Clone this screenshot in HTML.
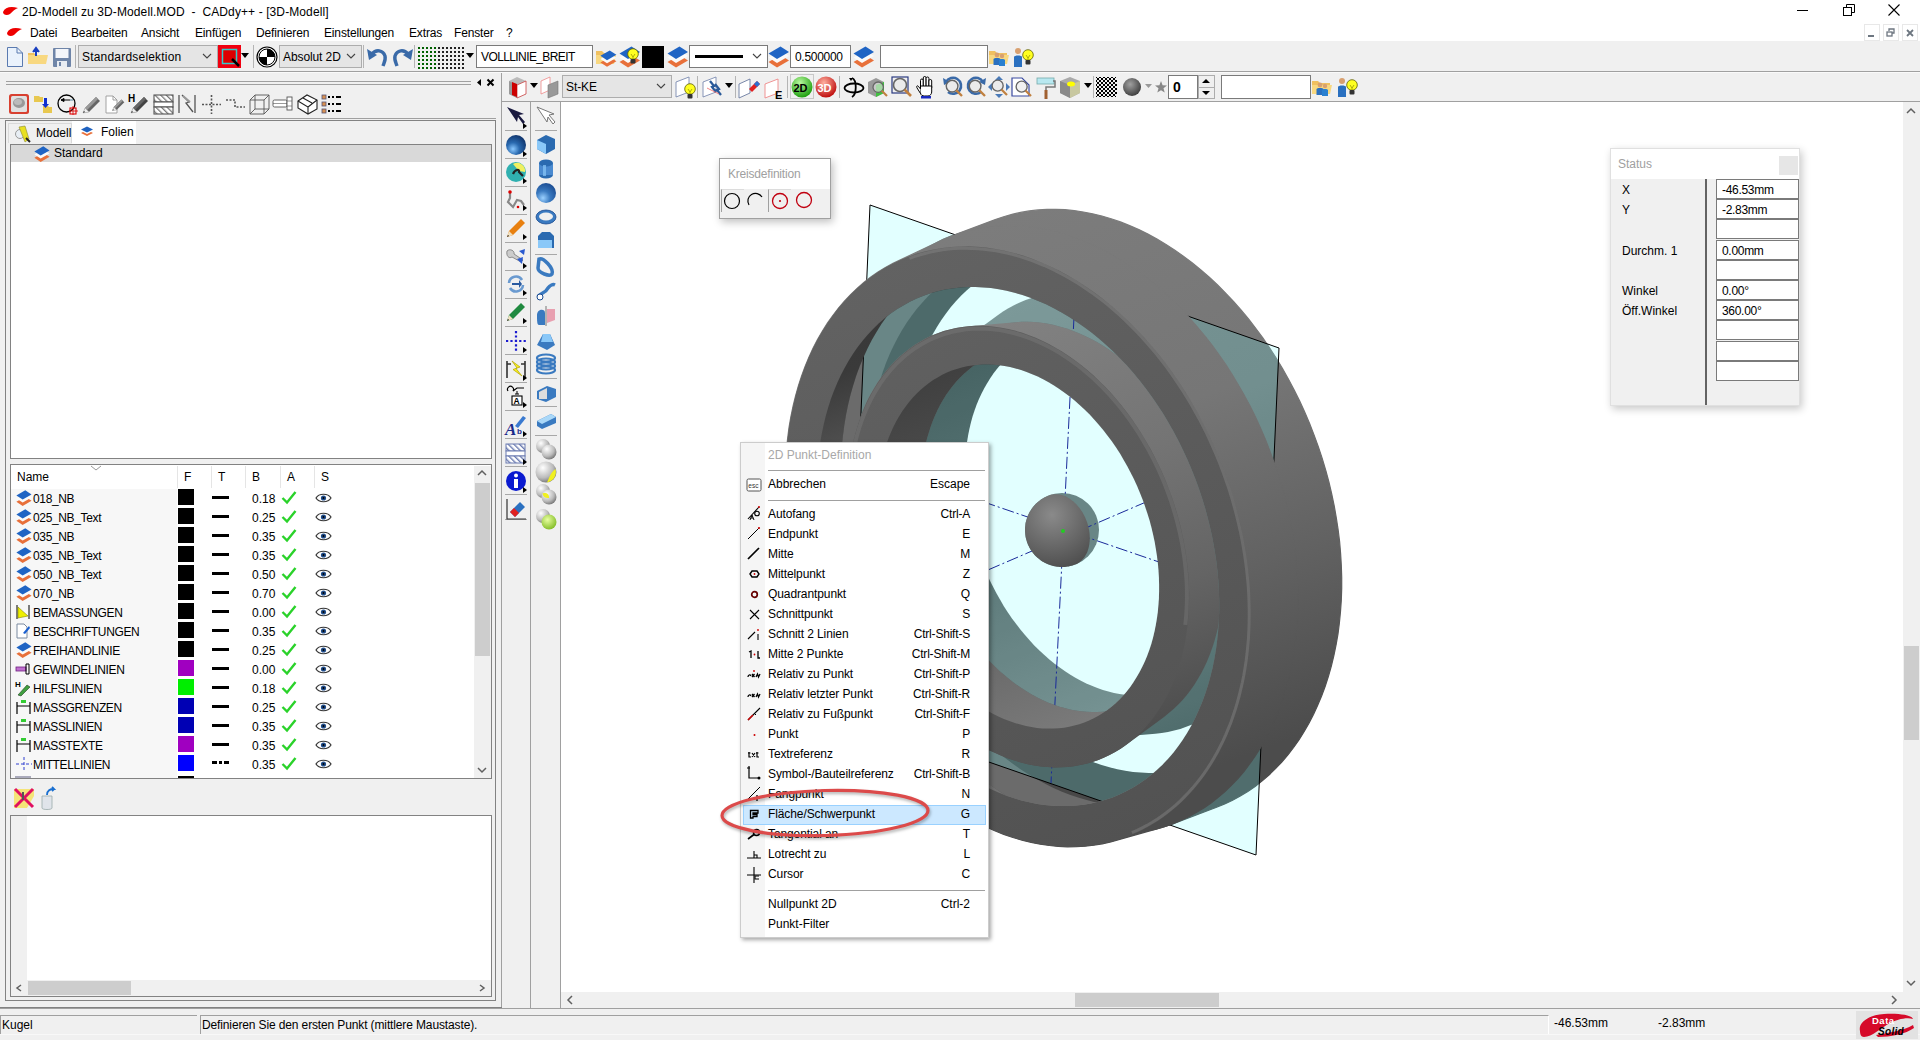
<!DOCTYPE html><html><head><meta charset="utf-8"><style>
html,body{margin:0;padding:0;width:1920px;height:1040px;overflow:hidden;background:#f0f0f0;position:relative;font-family:"Liberation Sans",sans-serif}
.t{position:absolute;white-space:pre;font-family:"Liberation Sans",sans-serif}
svg{overflow:visible}
</style></head><body><div style="position:absolute;left:0px;top:0px;width:1920px;height:41px;background:#fff"></div><svg style="position:absolute;left:2px;top:5px;" width="18" height="12" viewBox="0 0 18 12"><path d="M1,7 C3,2 9,1 16,3 C13,4 11,6 8,9 C5,11 1,10 1,7Z" fill="#e00"/></svg><div class="t" style="left:22px;top:6px;font-size:12px;line-height:12px;color:#000;letter-spacing:0.1px">2D-Modell zu 3D-Modell.MOD &nbsp;- &nbsp;CADdy++ - [3D-Modell]</div><div style="position:absolute;left:1797px;top:10px;width:11px;height:1px;background:#000"></div><svg style="position:absolute;left:1843px;top:4px;" width="13" height="13" viewBox="0 0 13 13"><rect x="0.5" y="3.5" width="8" height="8" fill="none" stroke="#000"/><path d="M3.5,3.5V0.5H11.5V8.5H8.5" fill="none" stroke="#000"/></svg><svg style="position:absolute;left:1888px;top:4px;" width="13" height="13" viewBox="0 0 13 13"><path d="M0.5,0.5L11.5,11.5M11.5,0.5L0.5,11.5" stroke="#000" stroke-width="1.1"/></svg><svg style="position:absolute;left:6px;top:26px;" width="18" height="12" viewBox="0 0 18 12"><path d="M1,7 C3,2 9,1 16,3 C13,4 11,6 8,9 C5,11 1,10 1,7Z" fill="#e00"/></svg><div class="t" style="left:30px;top:27px;font-size:12px;line-height:12px;color:#000;letter-spacing:-0.15px">Datei</div><div class="t" style="left:71px;top:27px;font-size:12px;line-height:12px;color:#000;letter-spacing:-0.15px">Bearbeiten</div><div class="t" style="left:141px;top:27px;font-size:12px;line-height:12px;color:#000;letter-spacing:-0.15px">Ansicht</div><div class="t" style="left:195px;top:27px;font-size:12px;line-height:12px;color:#000;letter-spacing:-0.15px">Einfügen</div><div class="t" style="left:256px;top:27px;font-size:12px;line-height:12px;color:#000;letter-spacing:-0.15px">Definieren</div><div class="t" style="left:324px;top:27px;font-size:12px;line-height:12px;color:#000;letter-spacing:-0.15px">Einstellungen</div><div class="t" style="left:409px;top:27px;font-size:12px;line-height:12px;color:#000;letter-spacing:-0.15px">Extras</div><div class="t" style="left:454px;top:27px;font-size:12px;line-height:12px;color:#000;letter-spacing:-0.15px">Fenster</div><div class="t" style="left:506px;top:27px;font-size:12px;line-height:12px;color:#000;letter-spacing:-0.15px">?</div><div style="position:absolute;left:1864px;top:24px;width:16px;height:17px;background:#fff;border:1px solid #e8e8e8;box-sizing:border-box"></div><div style="position:absolute;left:1883px;top:24px;width:16px;height:17px;background:#fff;border:1px solid #e8e8e8;box-sizing:border-box"></div><div style="position:absolute;left:1902px;top:24px;width:16px;height:17px;background:#fff;border:1px solid #e8e8e8;box-sizing:border-box"></div><svg style="position:absolute;left:1867px;top:30px;" width="10" height="8" viewBox="0 0 10 8"><rect x="1" y="5" width="6" height="2" fill="#6d7680"/></svg><svg style="position:absolute;left:1886px;top:28px;" width="10" height="10" viewBox="0 0 10 10"><rect x="1" y="4" width="5" height="4" fill="none" stroke="#6d7680" stroke-width="1.3"/><path d="M3,3V1H8V5H6" fill="none" stroke="#6d7680" stroke-width="1.3"/></svg><svg style="position:absolute;left:1905px;top:28px;" width="10" height="10" viewBox="0 0 10 10"><path d="M2,2L8,8M8,2L2,8" stroke="#6d7680" stroke-width="1.8"/></svg><div style="position:absolute;left:0px;top:41px;width:1920px;height:61px;background:#f0f0f0"></div><div style="position:absolute;left:0px;top:71px;width:1920px;height:1px;background:#a0a0a0"></div><div style="position:absolute;left:0px;top:72px;width:1920px;height:1px;background:#fafafa"></div><div style="position:absolute;left:502px;top:101px;width:1418px;height:1px;background:#a0a0a0"></div><div style="position:absolute;left:0px;top:102px;width:561px;height:906px;background:#f0f0f0"></div><div style="position:absolute;left:501px;top:73px;width:1px;height:935px;background:#a0a0a0"></div><div style="position:absolute;left:530px;top:102px;width:1px;height:906px;background:#a0a0a0"></div><div style="position:absolute;left:560px;top:102px;width:1px;height:906px;background:#a0a0a0"></div><div style="position:absolute;left:561px;top:102px;width:1342px;height:890px;background:#fff"></div><div style="position:absolute;left:1903px;top:102px;width:17px;height:890px;background:#f0f0f0"></div><div style="position:absolute;left:1904px;top:646px;width:15px;height:94px;background:#cdcdcd"></div><svg style="position:absolute;left:1905px;top:106px;" width="12" height="10" viewBox="0 0 12 10"><path d="M2,7L6,3L10,7" fill="none" stroke="#606060" stroke-width="1.5"/></svg><svg style="position:absolute;left:1905px;top:978px;" width="12" height="10" viewBox="0 0 12 10"><path d="M2,3L6,7L10,3" fill="none" stroke="#606060" stroke-width="1.5"/></svg><div style="position:absolute;left:561px;top:992px;width:1359px;height:16px;background:#f0f0f0"></div><div style="position:absolute;left:1075px;top:993px;width:144px;height:14px;background:#cdcdcd"></div><svg style="position:absolute;left:565px;top:994px;" width="10" height="12" viewBox="0 0 10 12"><path d="M7,2L3,6L7,10" fill="none" stroke="#606060" stroke-width="1.5"/></svg><svg style="position:absolute;left:1889px;top:994px;" width="10" height="12" viewBox="0 0 10 12"><path d="M3,2L7,6L3,10" fill="none" stroke="#606060" stroke-width="1.5"/></svg><div style="position:absolute;left:0px;top:1008px;width:1920px;height:1px;background:#a0a0a0"></div><div style="position:absolute;left:0px;top:1009px;width:1920px;height:31px;background:#f0f0f0"></div><div style="position:absolute;left:0px;top:1015px;width:197px;height:19px;border-top:1px solid #a0a0a0;border-left:1px solid #a0a0a0;box-sizing:border-box"></div><div style="position:absolute;left:200px;top:1015px;width:1349px;height:19px;border-top:1px solid #a0a0a0;border-left:1px solid #a0a0a0;border-right:1px solid #fff;box-sizing:border-box"></div><div style="position:absolute;left:0px;top:1034px;width:1920px;height:1px;background:#f8f8f8"></div><div class="t" style="left:2px;top:1019px;font-size:12px;line-height:12px;color:#000;">Kugel</div><div class="t" style="left:202px;top:1019px;font-size:12px;line-height:12px;color:#000;letter-spacing:-0.13px">Definieren Sie den ersten Punkt (mittlere Maustaste).</div><div class="t" style="left:1554px;top:1017px;font-size:12px;line-height:12px;color:#000;">-46.53mm</div><div class="t" style="left:1658px;top:1017px;font-size:12px;line-height:12px;color:#000;">-2.83mm</div><svg style="position:absolute;left:5px;top:46px;" width="20" height="22" viewBox="0 0 20 22"><path d="M2.5,1.5H12L17.5,7V20.5H2.5Z" fill="#eaf2fc" stroke="#5a7ab0"/><path d="M12,1.5V7H17.5" fill="none" stroke="#5a7ab0"/></svg><svg style="position:absolute;left:27px;top:46px;" width="22" height="22" viewBox="0 0 22 22"><path d="M1,7H7L9,9H19V18H1Z" fill="#f0c060"/><path d="M1,9H21L19,18H1Z" fill="#f8d880"/><path d="M9,10V4M6,6L9,2L12,6" fill="#1a3fc0" stroke="#1a3fc0" stroke-width="2"/></svg><svg style="position:absolute;left:52px;top:46px;" width="20" height="22" viewBox="0 0 20 22"><rect x="1" y="2" width="18" height="19" rx="1" fill="#6f85a8"/><rect x="3.5" y="3" width="13" height="9" fill="#f4f6fa"/><rect x="5" y="15" width="10" height="6" fill="#e8ecf2"/><rect x="7" y="16" width="2" height="4" fill="#6f85a8"/></svg><div style="position:absolute;left:75px;top:45px;width:1px;height:23px;background:#b4b4b4"></div><div style="position:absolute;left:78px;top:45px;width:140px;height:23px;background:#e5e5e5;border:1px solid #adadad;box-sizing:border-box"></div><div class="t" style="left:82px;top:51px;font-size:12px;line-height:12px;color:#000;letter-spacing:0.2px">Standardselektion</div><svg style="position:absolute;left:202px;top:53px;" width="10" height="6" viewBox="0 0 10 6"><path d="M1,1L5,5L9,1" fill="none" stroke="#444" stroke-width="1.1"/></svg><div style="position:absolute;left:218px;top:45px;width:23px;height:23px;background:#f00010"></div><svg style="position:absolute;left:220px;top:47px;" width="20" height="20" viewBox="0 0 20 20"><rect x="2.5" y="2.5" width="14" height="14" fill="#d00" stroke="#3cc" stroke-width="1.5"/><path d="M12,12L19,19" stroke="#000" stroke-width="2.5"/></svg><svg style="position:absolute;left:241px;top:53px;" width="9" height="6" viewBox="0 0 9 6"><path d="M0,0H8L4,5Z" fill="#000"/></svg><div style="position:absolute;left:253px;top:45px;width:1px;height:23px;background:#b4b4b4"></div><svg style="position:absolute;left:256px;top:46px;" width="22" height="22" viewBox="0 0 22 22"><circle cx="11" cy="11" r="10" fill="#fff" stroke="#000" stroke-width="1.2"/><circle cx="11" cy="11" r="8" fill="#fff" stroke="#000" stroke-width="1"/><path d="M11,3A8,8 0 0 1 19,11H11ZM11,19A8,8 0 0 1 3,11H11Z" fill="#000"/></svg><div style="position:absolute;left:279px;top:45px;width:83px;height:23px;background:#e5e5e5;border:1px solid #adadad;box-sizing:border-box"></div><div class="t" style="left:283px;top:51px;font-size:12px;line-height:12px;color:#000;letter-spacing:-0.1px">Absolut 2D</div><svg style="position:absolute;left:346px;top:53px;" width="10" height="6" viewBox="0 0 10 6"><path d="M1,1L5,5L9,1" fill="none" stroke="#444" stroke-width="1.1"/></svg><div style="position:absolute;left:363px;top:45px;width:1px;height:23px;background:#b4b4b4"></div><svg style="position:absolute;left:366px;top:46px;" width="24" height="22" viewBox="0 0 24 22"><path d="M6,8C10,3 17,4 19,10C20,14 18,17 17,20" fill="none" stroke="#3a6aa8" stroke-width="3.4"/><path d="M1,3L3,14L11,9Z" fill="#3a6aa8"/></svg><svg style="position:absolute;left:390px;top:46px;" width="24" height="22" viewBox="0 0 24 22"><path d="M18,8C14,3 7,4 5,10C4,14 6,17 7,20" fill="none" stroke="#3a6aa8" stroke-width="3.4"/><path d="M23,3L21,14L13,9Z" fill="#3a6aa8"/></svg><div style="position:absolute;left:414px;top:45px;width:1px;height:23px;background:#b4b4b4"></div><svg style="position:absolute;left:417px;top:46px;" width="48" height="24" viewBox="0 0 48 24"><rect x="1" y="1" width="2" height="2" fill="#006000"/><rect x="5" y="1" width="2" height="2" fill="#006000"/><rect x="9" y="1" width="2" height="2" fill="#006000"/><rect x="13" y="1" width="2" height="2" fill="#006000"/><rect x="17" y="1" width="2" height="2" fill="#006000"/><rect x="21" y="1" width="2" height="2" fill="#222"/><rect x="25" y="1" width="2" height="2" fill="#222"/><rect x="29" y="1" width="2" height="2" fill="#222"/><rect x="33" y="1" width="2" height="2" fill="#222"/><rect x="37" y="1" width="2" height="2" fill="#222"/><rect x="41" y="1" width="2" height="2" fill="#222"/><rect x="45" y="1" width="2" height="2" fill="#222"/><rect x="1" y="5" width="2" height="2" fill="#006000"/><rect x="5" y="5" width="2" height="2" fill="#006000"/><rect x="9" y="5" width="2" height="2" fill="#006000"/><rect x="13" y="5" width="2" height="2" fill="#006000"/><rect x="17" y="5" width="2" height="2" fill="#006000"/><rect x="21" y="5" width="2" height="2" fill="#222"/><rect x="25" y="5" width="2" height="2" fill="#222"/><rect x="29" y="5" width="2" height="2" fill="#222"/><rect x="33" y="5" width="2" height="2" fill="#222"/><rect x="37" y="5" width="2" height="2" fill="#222"/><rect x="41" y="5" width="2" height="2" fill="#222"/><rect x="45" y="5" width="2" height="2" fill="#222"/><rect x="1" y="9" width="2" height="2" fill="#006000"/><rect x="5" y="9" width="2" height="2" fill="#006000"/><rect x="9" y="9" width="2" height="2" fill="#006000"/><rect x="13" y="9" width="2" height="2" fill="#006000"/><rect x="17" y="9" width="2" height="2" fill="#006000"/><rect x="21" y="9" width="2" height="2" fill="#222"/><rect x="25" y="9" width="2" height="2" fill="#222"/><rect x="29" y="9" width="2" height="2" fill="#222"/><rect x="33" y="9" width="2" height="2" fill="#222"/><rect x="37" y="9" width="2" height="2" fill="#222"/><rect x="41" y="9" width="2" height="2" fill="#222"/><rect x="45" y="9" width="2" height="2" fill="#222"/><rect x="1" y="13" width="2" height="2" fill="#006000"/><rect x="5" y="13" width="2" height="2" fill="#006000"/><rect x="9" y="13" width="2" height="2" fill="#006000"/><rect x="13" y="13" width="2" height="2" fill="#006000"/><rect x="17" y="13" width="2" height="2" fill="#006000"/><rect x="21" y="13" width="2" height="2" fill="#222"/><rect x="25" y="13" width="2" height="2" fill="#222"/><rect x="29" y="13" width="2" height="2" fill="#222"/><rect x="33" y="13" width="2" height="2" fill="#222"/><rect x="37" y="13" width="2" height="2" fill="#222"/><rect x="41" y="13" width="2" height="2" fill="#222"/><rect x="45" y="13" width="2" height="2" fill="#222"/><rect x="1" y="17" width="2" height="2" fill="#006000"/><rect x="5" y="17" width="2" height="2" fill="#006000"/><rect x="9" y="17" width="2" height="2" fill="#006000"/><rect x="13" y="17" width="2" height="2" fill="#006000"/><rect x="17" y="17" width="2" height="2" fill="#006000"/><rect x="21" y="17" width="2" height="2" fill="#222"/><rect x="25" y="17" width="2" height="2" fill="#222"/><rect x="29" y="17" width="2" height="2" fill="#222"/><rect x="33" y="17" width="2" height="2" fill="#222"/><rect x="37" y="17" width="2" height="2" fill="#222"/><rect x="41" y="17" width="2" height="2" fill="#222"/><rect x="45" y="17" width="2" height="2" fill="#222"/><rect x="1" y="21" width="2" height="2" fill="#006000"/><rect x="5" y="21" width="2" height="2" fill="#006000"/><rect x="9" y="21" width="2" height="2" fill="#006000"/><rect x="13" y="21" width="2" height="2" fill="#006000"/><rect x="17" y="21" width="2" height="2" fill="#006000"/><rect x="21" y="21" width="2" height="2" fill="#222"/><rect x="25" y="21" width="2" height="2" fill="#222"/><rect x="29" y="21" width="2" height="2" fill="#222"/><rect x="33" y="21" width="2" height="2" fill="#222"/><rect x="37" y="21" width="2" height="2" fill="#222"/><rect x="41" y="21" width="2" height="2" fill="#222"/><rect x="45" y="21" width="2" height="2" fill="#222"/></svg><svg style="position:absolute;left:466px;top:53px;" width="9" height="6" viewBox="0 0 9 6"><path d="M0,0H8L4,5Z" fill="#000"/></svg><div style="position:absolute;left:476px;top:45px;width:117px;height:23px;background:#fff;border:1px solid #7a7a7a;box-sizing:border-box"></div><div class="t" style="left:481px;top:51px;font-size:12px;line-height:12px;color:#000;letter-spacing:-0.6px">VOLLLINIE_BREIT</div><svg style="position:absolute;left:595px;top:46px;" width="22" height="22" viewBox="0 0 22 22"><path d="M1,5H7L9,7H19V18H1Z" fill="#f0c060"/><path d="M1,9H21L19,18H1Z" fill="#f8d880"/><g transform="translate(5,4) scale(0.78)"><path d="M0.5,16L12.5,9L21,14.5L9,21.5Z" fill="#e8703a"/><path d="M0.5,11.5L12.5,4.5L21,10L9,17Z" fill="#fafafa"/><path d="M0.5,7.5L12.5,0.5L21,6L9,13Z" fill="#1f64c4"/></g></svg><svg style="position:absolute;left:619px;top:46px;" width="22" height="22" viewBox="0 0 22 22"><path d="M0.5,16L12.5,9L21,14.5L9,21.5Z" fill="#e8703a"/><path d="M0.5,11.5L12.5,4.5L21,10L9,17Z" fill="#fafafa"/><path d="M0.5,7.5L12.5,0.5L21,6L9,13Z" fill="#1f64c4"/><g transform="translate(8,2)"><circle cx="6" cy="6" r="5.3" fill="#ffff20" stroke="#606000" stroke-width="0.8"/><path d="M4,6L6,9L8,6M6,9V11" fill="none" stroke="#8a8a00" stroke-width="0.7"/><rect x="3.5" y="11" width="5" height="4.5" rx="1" fill="#333"/></g></svg><div style="position:absolute;left:642px;top:46px;width:22px;height:22px;background:#000"></div><svg style="position:absolute;left:667px;top:46px;" width="22" height="22" viewBox="0 0 22 22"><path d="M0.5,16L12.5,9L21,14.5L9,21.5Z" fill="#e8703a"/><path d="M0.5,11.5L12.5,4.5L21,10L9,17Z" fill="#fafafa"/><path d="M0.5,7.5L12.5,0.5L21,6L9,13Z" fill="#1f64c4"/></svg><div style="position:absolute;left:689px;top:45px;width:79px;height:23px;background:#fff;border:1px solid #7a7a7a;box-sizing:border-box"></div><svg style="position:absolute;left:752px;top:53px;" width="10" height="6" viewBox="0 0 10 6"><path d="M1,1L5,5L9,1" fill="none" stroke="#444" stroke-width="1.1"/></svg><div style="position:absolute;left:695px;top:55px;width:48px;height:3px;background:#000"></div><svg style="position:absolute;left:768px;top:46px;" width="22" height="22" viewBox="0 0 22 22"><path d="M0.5,16L12.5,9L21,14.5L9,21.5Z" fill="#e8703a"/><path d="M0.5,11.5L12.5,4.5L21,10L9,17Z" fill="#fafafa"/><path d="M0.5,7.5L12.5,0.5L21,6L9,13Z" fill="#1f64c4"/></svg><div style="position:absolute;left:790px;top:45px;width:61px;height:23px;background:#fff;border:1px solid #7a7a7a;box-sizing:border-box"></div><div class="t" style="left:795px;top:51px;font-size:12px;line-height:12px;color:#000;letter-spacing:-0.3px">0.500000</div><svg style="position:absolute;left:853px;top:46px;" width="22" height="22" viewBox="0 0 22 22"><path d="M0.5,16L12.5,9L21,14.5L9,21.5Z" fill="#e8703a"/><path d="M0.5,11.5L12.5,4.5L21,10L9,17Z" fill="#fafafa"/><path d="M0.5,7.5L12.5,0.5L21,6L9,13Z" fill="#1f64c4"/></svg><div style="position:absolute;left:880px;top:45px;width:108px;height:23px;background:#fff;border:1px solid #7a7a7a;box-sizing:border-box"></div><svg style="position:absolute;left:988px;top:46px;" width="24" height="22" viewBox="0 0 24 22"><path d="M1,5H7L9,7H19V18H1Z" fill="#f0c060"/><path d="M1,9H21L19,18H1Z" fill="#f8d880"/><circle cx="9" cy="9" r="2.4" fill="#d8a070"/><path d="M5.5,19V13C5.5,11.5 12.5,11.5 12.5,13V19Z" fill="#2a70c0"/><circle cx="14" cy="10" r="2.2" fill="#d8a070"/><path d="M11,20V14C11,12.5 17,12.5 17,14V20Z" fill="#2a80d0"/></svg><svg style="position:absolute;left:1012px;top:46px;" width="24" height="22" viewBox="0 0 24 22"><circle cx="6" cy="5" r="3" fill="#d8a070"/><path d="M2,21V11C2,9 10,9 10,11V21Z" fill="#2a70c0"/><g transform="translate(10,3)"><circle cx="6" cy="6" r="5.3" fill="#ffff20" stroke="#606000" stroke-width="0.8"/><path d="M4,6L6,9L8,6M6,9V11" fill="none" stroke="#8a8a00" stroke-width="0.7"/><rect x="3.5" y="11" width="5" height="4.5" rx="1" fill="#333"/></g></svg><svg style="position:absolute;left:506px;top:75px;" width="22" height="24" viewBox="0 0 22 24"><path d="M3,6L11,2L20,6V19L11,23L3,19Z" fill="#bbb"/><path d="M3,6L11,10V23L3,19Z" fill="#999"/><path d="M11,10L20,6V19L11,23Z" fill="#fff" stroke="#c44" stroke-width="0.8"/><path d="M6,7L11,9V22L6,20Z" fill="#c00"/></svg><svg style="position:absolute;left:530px;top:83px;" width="9" height="6" viewBox="0 0 9 6"><path d="M0,0H8L4,5Z" fill="#000"/></svg><svg style="position:absolute;left:540px;top:76px;" width="20" height="22" viewBox="0 0 20 22"><path d="M1,5L10,1V14L1,18Z" fill="#fff" stroke="#e88" stroke-width="0.8"/><path d="M8,9L18,5V18L8,22Z" fill="#999" stroke="#777" stroke-width="0.6"/></svg><div style="position:absolute;left:562px;top:75px;width:110px;height:23px;background:#e5e5e5;border:1px solid #adadad;box-sizing:border-box"></div><div class="t" style="left:566px;top:81px;font-size:12px;line-height:12px;color:#000;letter-spacing:-0.1px">St-KE</div><svg style="position:absolute;left:656px;top:83px;" width="10" height="6" viewBox="0 0 10 6"><path d="M1,1L5,5L9,1" fill="none" stroke="#444" stroke-width="1.1"/></svg><svg style="position:absolute;left:675px;top:76px;" width="22" height="24" viewBox="0 0 22 24"><path d="M1,6L14,1V16L1,21Z" fill="#fff" stroke="#7a8ab0" stroke-width="0.9"/><g transform="translate(9,7)"><circle cx="6" cy="6" r="5.3" fill="#ffff20" stroke="#606000" stroke-width="0.8"/><path d="M4,6L6,9L8,6M6,9V11" fill="none" stroke="#8a8a00" stroke-width="0.7"/><rect x="3.5" y="11" width="5" height="4.5" rx="1" fill="#333"/></g></svg><div style="position:absolute;left:697px;top:76px;width:1px;height:22px;background:#b4b4b4"></div><svg style="position:absolute;left:702px;top:76px;" width="22" height="22" viewBox="0 0 22 22"><path d="M1,6L14,1V16L1,21Z" fill="#fff" stroke="#7a8ab0" stroke-width="0.9"/><path d="M8,5L12,10L10,11L14,16M13,8L17,13L15,14L19,19" fill="none" stroke="#2a5a9a" stroke-width="2.3"/><path d="M5,12L17,18" stroke="#e66" stroke-width="0.8"/></svg><svg style="position:absolute;left:725px;top:83px;" width="9" height="6" viewBox="0 0 9 6"><path d="M0,0H8L4,5Z" fill="#000"/></svg><div style="position:absolute;left:735px;top:76px;width:1px;height:22px;background:#b4b4b4"></div><svg style="position:absolute;left:738px;top:76px;" width="22" height="22" viewBox="0 0 22 22"><path d="M1,8L12,3V17L1,22Z" fill="#fff" stroke="#6a7aa0" stroke-width="0.9"/><path d="M11,13L19,5L22,8L14,16Z" fill="#e02020"/><path d="M16,8L19,5L22,8L19,11Z" fill="#2a70d0"/></svg><svg style="position:absolute;left:764px;top:76px;" width="22" height="24" viewBox="0 0 22 24"><path d="M1,8L14,3V17L1,22Z" fill="#fff" stroke="#e88" stroke-width="0.9"/><text x="11" y="23" font-family="Liberation Sans" font-weight="bold" font-size="11">E</text></svg><div style="position:absolute;left:787px;top:76px;width:1px;height:22px;background:#b4b4b4"></div><div style="position:absolute;left:790px;top:74px;width:24px;height:25px;border:1px solid #c8c8c8;box-sizing:border-box"></div><svg style="position:absolute;left:791px;top:76px;" width="22" height="22" viewBox="0 0 22 22"><defs><radialGradient id="g2d" cx="0.4" cy="0.3" r="0.7"><stop offset="0" stop-color="#b8f8a0"/><stop offset="1" stop-color="#20a010"/></radialGradient><radialGradient id="g3d" cx="0.4" cy="0.3" r="0.7"><stop offset="0" stop-color="#ffb0a0"/><stop offset="1" stop-color="#c01010"/></radialGradient></defs><circle cx="11" cy="11" r="10.5" fill="url(#g2d)"/><text x="2.5" y="15.5" font-family="Liberation Sans" font-weight="bold" font-size="11" fill="#000">2D</text></svg><svg style="position:absolute;left:815px;top:76px;" width="22" height="22" viewBox="0 0 22 22"><defs><radialGradient id="g3d" cx="0.4" cy="0.3" r="0.7"><stop offset="0" stop-color="#ffb0a0"/><stop offset="1" stop-color="#c01010"/></radialGradient></defs><circle cx="11" cy="11" r="10.5" fill="url(#g3d)"/><text x="2.5" y="15.5" font-family="Liberation Sans" font-weight="bold" font-size="11" fill="#fff">3D</text></svg><div style="position:absolute;left:839px;top:76px;width:1px;height:22px;background:#b4b4b4"></div><svg style="position:absolute;left:843px;top:76px;" width="22" height="22" viewBox="0 0 22 22"><ellipse cx="11" cy="12" rx="9.5" ry="4.5" fill="none" stroke="#000" stroke-width="1.8"/><path d="M9,2C14,4 14,18 9,21" fill="none" stroke="#000" stroke-width="1.8"/><path d="M6,2L10,2L8,5Z" fill="#000"/></svg><svg style="position:absolute;left:867px;top:76px;" width="22" height="22" viewBox="0 0 22 22"><path d="M1,6L9,2L17,6V17L9,21L1,17Z" fill="#9a9a9a"/><path d="M9,9L17,6V17L9,21Z" fill="#40c040"/><g transform="translate(4,4) scale(0.8)"><circle cx="9" cy="9" r="6.5" fill="#e8e8e8" fill-opacity="0.6" stroke="#666" stroke-width="1.6"/><path d="M13.5,13.5L20,20" stroke="#c08040" stroke-width="2.6"/></g></svg><svg style="position:absolute;left:891px;top:76px;" width="22" height="22" viewBox="0 0 22 22"><rect x="1" y="1" width="16" height="16" fill="none" stroke="#2a3a80" stroke-width="1.2"/><circle cx="9" cy="9" r="6.5" fill="#e8e8e8" fill-opacity="0.6" stroke="#666" stroke-width="1.6"/><path d="M13.5,13.5L20,20" stroke="#c08040" stroke-width="2.6"/></svg><svg style="position:absolute;left:916px;top:75px;" width="20" height="24" viewBox="0 0 20 24"><g fill="#fff" stroke="#000" stroke-width="1"><rect x="4.5" y="4" width="2.8" height="10" rx="1.4"/><rect x="7.3" y="1.5" width="2.8" height="12" rx="1.4"/><rect x="10.1" y="2" width="2.8" height="12" rx="1.4"/><rect x="12.9" y="4.5" width="2.8" height="9.5" rx="1.4"/><path d="M4.5,11V18C4.5,20 6.5,21 8.5,21H12C14,21 15.7,19 15.7,17V11Z"/><path d="M4.5,14L2.2,11.2C1.2,10.2 0.2,11.2 0.9,12.7L4.5,18.5"/></g><rect x="5" y="21" width="10" height="2.5" fill="#1a2ac0"/></svg><svg style="position:absolute;left:942px;top:76px;" width="22" height="22" viewBox="0 0 22 22"><path d="M4,6A8,8 0 1 1 6,16" fill="none" stroke="#3a6aa8" stroke-width="2.6"/><path d="M1,2L2,9L8,6Z" fill="#3a6aa8"/><g transform="translate(2,2) scale(0.9)"><circle cx="9" cy="9" r="6.5" fill="#e8e8e8" fill-opacity="0.6" stroke="#666" stroke-width="1.6"/><path d="M13.5,13.5L20,20" stroke="#c08040" stroke-width="2.6"/></g></svg><svg style="position:absolute;left:965px;top:76px;" width="22" height="22" viewBox="0 0 22 22"><path d="M18,6A8,8 0 1 0 16,16" fill="none" stroke="#3a6aa8" stroke-width="2.6"/><path d="M21,2L20,9L14,6Z" fill="#3a6aa8"/><g transform="translate(2,2) scale(0.9)"><circle cx="9" cy="9" r="6.5" fill="#e8e8e8" fill-opacity="0.6" stroke="#666" stroke-width="1.6"/><path d="M13.5,13.5L20,20" stroke="#c08040" stroke-width="2.6"/></g></svg><svg style="position:absolute;left:987px;top:75px;" width="24" height="24" viewBox="0 0 24 24"><path d="M12,1L16,5H8ZM12,23L16,19H8ZM1,12L5,8V16ZM23,12L19,8V16Z" fill="#4a7ab8"/><g transform="translate(3,3) scale(0.85)"><circle cx="9" cy="9" r="6.5" fill="#e8e8e8" fill-opacity="0.6" stroke="#666" stroke-width="1.6"/><path d="M13.5,13.5L20,20" stroke="#c08040" stroke-width="2.6"/></g></svg><svg style="position:absolute;left:1011px;top:76px;" width="22" height="22" viewBox="0 0 22 22"><path d="M1,2H11L18,9V20H1Z" fill="#fff" stroke="#3a4aa0" stroke-width="1.2"/><g transform="translate(3,3) scale(0.85)"><circle cx="9" cy="9" r="6.5" fill="#e8e8e8" fill-opacity="0.6" stroke="#666" stroke-width="1.6"/><path d="M13.5,13.5L20,20" stroke="#c08040" stroke-width="2.6"/></g></svg><svg style="position:absolute;left:1036px;top:76px;" width="20" height="24" viewBox="0 0 20 24"><rect x="1" y="2" width="17" height="6" fill="#b8e8f0" stroke="#7aa" stroke-width="0.8"/><path d="M17,5H19V11H10V15" fill="none" stroke="#777" stroke-width="1.5"/><rect x="8.5" y="14" width="3" height="9" fill="#a06030"/></svg><svg style="position:absolute;left:1058px;top:75px;" width="24" height="24" viewBox="0 0 24 24"><path d="M2,6L12,2L22,6V18L12,23L2,18Z" fill="#aaa"/><path d="M2,6L12,10V23L2,18Z" fill="#8a8a8a"/><path d="M12,10L22,6V18L12,23Z" fill="#c8c8a0"/><ellipse cx="13" cy="9" rx="4" ry="2.5" fill="#ff0"/></svg><svg style="position:absolute;left:1084px;top:83px;" width="9" height="6" viewBox="0 0 9 6"><path d="M0,0H8L4,5Z" fill="#000"/></svg><div style="position:absolute;left:1093px;top:76px;width:1px;height:22px;background:#b4b4b4"></div><svg style="position:absolute;left:1096px;top:77px;" width="21" height="21" viewBox="0 0 21 21"><defs><clipPath id="hc"><rect x="0" y="0" width="21" height="21"/></clipPath></defs><g clip-path="url(#hc)"><path d="M-16,0L4,20M4,0L-16,20" stroke="#000" stroke-width="1"/><path d="M-12,0L8,20M8,0L-12,20" stroke="#000" stroke-width="1"/><path d="M-8,0L12,20M12,0L-8,20" stroke="#000" stroke-width="1"/><path d="M-4,0L16,20M16,0L-4,20" stroke="#000" stroke-width="1"/><path d="M0,0L20,20M20,0L0,20" stroke="#000" stroke-width="1"/><path d="M4,0L24,20M24,0L4,20" stroke="#000" stroke-width="1"/><path d="M8,0L28,20M28,0L8,20" stroke="#000" stroke-width="1"/><path d="M12,0L32,20M32,0L12,20" stroke="#000" stroke-width="1"/><path d="M16,0L36,20M36,0L16,20" stroke="#000" stroke-width="1"/></g></svg><svg style="position:absolute;left:1122px;top:77px;" width="20" height="20" viewBox="0 0 20 20"><defs><radialGradient id="gs2" cx="0.4" cy="0.35" r="0.7"><stop offset="0" stop-color="#a0a0a0"/><stop offset="1" stop-color="#3a3a3a"/></radialGradient></defs><circle cx="10" cy="10" r="9" fill="url(#gs2)"/></svg><svg style="position:absolute;left:1145px;top:84px;" width="8" height="5" viewBox="0 0 8 5"><path d="M0,0H7L3.5,4Z" fill="#999"/></svg><svg style="position:absolute;left:1155px;top:81px;" width="12" height="12" viewBox="0 0 12 12"><path d="M6,0L7.6,4.2L12,4.5L8.5,7.3L9.7,11.6L6,9.2L2.3,11.6L3.5,7.3L0,4.5L4.4,4.2Z" fill="#888"/></svg><div style="position:absolute;left:1168px;top:75px;width:30px;height:24px;background:#fff;border:1px solid #7a7a7a;box-sizing:border-box"></div><div class="t" style="left:1173px;top:81px;font-size:12px;line-height:12px;color:#000;letter-spacing:-0.1px">0</div><div class="t" style="left:1173px;top:80px;font-size:14px;font-weight:bold;line-height:14px;background:#fff;width:20px">0</div><div style="position:absolute;left:1198px;top:75px;width:17px;height:24px;background:#f0f0f0;border:1px solid #adadad;box-sizing:border-box"></div><div style="position:absolute;left:1199px;top:87px;width:15px;height:1px;background:#adadad"></div><svg style="position:absolute;left:1202px;top:78px;" width="9" height="6" viewBox="0 0 9 6"><path d="M0,5L4,1L8,5Z" fill="#000"/></svg><svg style="position:absolute;left:1202px;top:90px;" width="9" height="6" viewBox="0 0 9 6"><path d="M0,1H8L4,5Z" fill="#000"/></svg><div style="position:absolute;left:1221px;top:75px;width:90px;height:24px;background:#fff;border:1px solid #7a7a7a;box-sizing:border-box"></div><svg style="position:absolute;left:1311px;top:76px;" width="24" height="22" viewBox="0 0 24 22"><path d="M1,5H7L9,7H19V18H1Z" fill="#f0c060"/><path d="M1,9H21L19,18H1Z" fill="#f8d880"/><circle cx="9" cy="9" r="2.4" fill="#d8a070"/><path d="M5.5,19V13C5.5,11.5 12.5,11.5 12.5,13V19Z" fill="#2a70c0"/><circle cx="14" cy="10" r="2.2" fill="#d8a070"/><path d="M11,20V14C11,12.5 17,12.5 17,14V20Z" fill="#2a80d0"/></svg><svg style="position:absolute;left:1336px;top:76px;" width="24" height="22" viewBox="0 0 24 22"><circle cx="6" cy="5" r="3" fill="#d8a070"/><path d="M2,21V11C2,9 10,9 10,11V21Z" fill="#2a70c0"/><g transform="translate(10,3)"><circle cx="6" cy="6" r="5.3" fill="#ffff20" stroke="#606000" stroke-width="0.8"/><path d="M4,6L6,9L8,6M6,9V11" fill="none" stroke="#8a8a00" stroke-width="0.7"/><rect x="3.5" y="11" width="5" height="4.5" rx="1" fill="#333"/></g></svg><div style="position:absolute;left:6px;top:81px;width:465px;height:1px;background:#a0a0a0"></div><div style="position:absolute;left:6px;top:84px;width:465px;height:1px;background:#a0a0a0"></div><svg style="position:absolute;left:475px;top:78px;" width="8" height="9" viewBox="0 0 8 9"><path d="M6,1L2,4.5L6,8Z" fill="#000"/></svg><svg style="position:absolute;left:486px;top:78px;" width="9" height="9" viewBox="0 0 9 9"><path d="M1.5,1.5L7.5,7.5M7.5,1.5L1.5,7.5" stroke="#000" stroke-width="2"/></svg><div style="position:absolute;left:0px;top:118px;width:496px;height:1px;background:#a0a0a0"></div><svg style="position:absolute;left:8px;top:93px;" width="22" height="22" viewBox="0 0 22 22"><rect x="1" y="1" width="20" height="20" rx="2.5" fill="#d84030"/><rect x="3" y="3" width="16" height="16" rx="1.5" fill="#e0e0e0"/><ellipse cx="11" cy="10" rx="6" ry="5" fill="#999"/><ellipse cx="10" cy="9" rx="4" ry="3" fill="#bbb"/></svg><svg style="position:absolute;left:33px;top:95px;" width="20" height="20" viewBox="0 0 20 20"><path d="M1,1H6L7,2H10V7H1Z" fill="#e8c850"/><path d="M10,11H15L16,12H19V18H10Z" fill="#e8c850"/><path d="M11,3H14V9H16L12.5,13L9,9H11Z" fill="#1030d0"/></svg><svg style="position:absolute;left:57px;top:94px;" width="21" height="21" viewBox="0 0 21 21"><circle cx="9.5" cy="9.5" r="8.5" fill="none" stroke="#000" stroke-width="1.3"/><path d="M4,6L13,6M4,6L7,4.5V7.5Z" stroke="#000" fill="#000" stroke-width="1"/><path d="M13,6H16" stroke="#8ab" stroke-width="1.5"/><rect x="13" y="14" width="6" height="6" fill="none" stroke="#d00" stroke-width="1.1"/><path d="M16,12V21M12,17H21" stroke="#d00" stroke-width="0.8"/></svg><svg style="position:absolute;left:81px;top:95px;" width="20" height="20" viewBox="0 0 20 20"><path d="M2,18L4,13L15,2L19,6L8,17Z" fill="#666"/><path d="M4,13L15,2L17,4L6,15Z" fill="#999"/><path d="M2,18L4,13L8,17Z" fill="#eee" stroke="#aaa" stroke-width="0.5"/><path d="M2,18L3,16L4,17Z" fill="#222"/></svg><svg style="position:absolute;left:105px;top:95px;" width="20" height="20" viewBox="0 0 20 20"><path d="M1,1H8L12,5V18H1Z" fill="#fff" stroke="#999" stroke-width="0.9"/><path d="M8,1V5H12" fill="none" stroke="#999" stroke-width="0.9"/><g transform="translate(6,3) scale(0.7)"><path d="M2,18L4,13L15,2L19,6L8,17Z" fill="#666"/><path d="M4,13L15,2L17,4L6,15Z" fill="#999"/><path d="M2,18L4,13L8,17Z" fill="#eee" stroke="#aaa" stroke-width="0.5"/><path d="M2,18L3,16L4,17Z" fill="#222"/></g></svg><svg style="position:absolute;left:128px;top:93px;" width="22" height="22" viewBox="0 0 22 22"><text x="0" y="9" font-family="Liberation Sans" font-weight="bold" font-size="10">H</text><g transform="translate(1,2)"><path d="M2,18L4,13L15,2L19,6L8,17Z" fill="#444"/><path d="M4,13L15,2L17,4L6,15Z" fill="#666"/><path d="M2,18L4,13L8,17Z" fill="#eee" stroke="#aaa" stroke-width="0.5"/><path d="M2,18L3,16L4,17Z" fill="#222"/></g></svg><svg style="position:absolute;left:153px;top:94px;" width="21" height="21" viewBox="0 0 21 21"><defs><pattern id="hp" width="4" height="4" patternUnits="userSpaceOnUse" patternTransform="rotate(-45)"><rect width="4" height="4" fill="#fff"/><rect width="1.3" height="4" fill="#777"/></pattern></defs><rect x="1" y="1" width="19" height="7" fill="url(#hp)" stroke="#555" stroke-width="1.1"/><rect x="1" y="8" width="19" height="5" fill="#fff" stroke="#555" stroke-width="1.1"/><rect x="1" y="13" width="19" height="7" fill="url(#hp)" stroke="#555" stroke-width="1.1"/></svg><svg style="position:absolute;left:178px;top:94px;" width="18" height="20" viewBox="0 0 18 20"><path d="M1,1V19M17,1V19" stroke="#555" stroke-width="1.3"/><path d="M4,1L11,8L8,9L15,18" fill="none" stroke="#555" stroke-width="1.3"/><path d="M5,2L12,8" stroke="#999" stroke-width="2"/></svg><svg style="position:absolute;left:201px;top:94px;" width="21" height="21" viewBox="0 0 21 21"><path d="M1,10.5H20M10.5,1V20" stroke="#555" stroke-width="1.6" stroke-dasharray="2,1.5"/></svg><svg style="position:absolute;left:225px;top:98px;" width="21" height="12" viewBox="0 0 21 12"><path d="M1,2H10V9H20" fill="none" stroke="#555" stroke-width="1.6" stroke-dasharray="2,1.5"/></svg><svg style="position:absolute;left:249px;top:94px;" width="21" height="21" viewBox="0 0 21 21"><path d="M1,6H15V20H1Z M6,1H20V15H6Z M1,6L6,1M15,6L20,1M15,20L20,15M1,20L6,15" fill="none" stroke="#555" stroke-width="0.9"/></svg><svg style="position:absolute;left:272px;top:96px;" width="22" height="15" viewBox="0 0 22 15"><rect x="1" y="4" width="14" height="7" rx="1.5" fill="#fff" stroke="#555" stroke-width="0.9"/><path d="M1,7.5H15" stroke="#555" stroke-width="0.6"/><rect x="15" y="1" width="5" height="13" fill="#fff" stroke="#555" stroke-width="0.9"/><path d="M15,5H20M15,10H20" stroke="#555" stroke-width="0.6"/></svg><svg style="position:absolute;left:297px;top:93px;" width="21" height="22" viewBox="0 0 21 22"><path d="M1,8L10,2L20,7V16L11,21L1,15Z" fill="#fff" stroke="#222" stroke-width="1.1"/><path d="M1,8L11,14V21M11,14L20,7M6,5L15,10" fill="none" stroke="#222" stroke-width="1.1"/></svg><svg style="position:absolute;left:321px;top:94px;" width="21" height="20" viewBox="0 0 21 20"><rect x="1" y="1" width="4" height="4" fill="#d89050" stroke="#557" stroke-width="0.8"/><rect x="1" y="8" width="4" height="4" fill="#d89050" stroke="#557" stroke-width="0.8"/><rect x="1" y="15" width="4" height="4" fill="#d89050" stroke="#557" stroke-width="0.8"/><path d="M7,3H9M11,3H13M15,3H20M7,10H9M11,10H13M15,10H20M7,17H9M11,17H13M15,17H20" stroke="#000" stroke-width="1.8"/></svg><div style="position:absolute;left:505px;top:130px;width:22px;height:1px;background:#a8a8a8"></div><div style="position:absolute;left:505px;top:158px;width:22px;height:1px;background:#a8a8a8"></div><div style="position:absolute;left:505px;top:186px;width:22px;height:1px;background:#a8a8a8"></div><div style="position:absolute;left:505px;top:214px;width:22px;height:1px;background:#a8a8a8"></div><div style="position:absolute;left:505px;top:242px;width:22px;height:1px;background:#a8a8a8"></div><div style="position:absolute;left:505px;top:270px;width:22px;height:1px;background:#a8a8a8"></div><div style="position:absolute;left:505px;top:298px;width:22px;height:1px;background:#a8a8a8"></div><div style="position:absolute;left:505px;top:326px;width:22px;height:1px;background:#a8a8a8"></div><div style="position:absolute;left:505px;top:354px;width:22px;height:1px;background:#a8a8a8"></div><div style="position:absolute;left:505px;top:382px;width:22px;height:1px;background:#a8a8a8"></div><div style="position:absolute;left:505px;top:410px;width:22px;height:1px;background:#a8a8a8"></div><div style="position:absolute;left:505px;top:438px;width:22px;height:1px;background:#a8a8a8"></div><div style="position:absolute;left:505px;top:466px;width:22px;height:1px;background:#a8a8a8"></div><div style="position:absolute;left:505px;top:494px;width:22px;height:1px;background:#a8a8a8"></div><div style="position:absolute;left:505px;top:519px;width:22px;height:1px;background:#a8a8a8"></div><div style="position:absolute;left:535px;top:130px;width:22px;height:1px;background:#a8a8a8"></div><div style="position:absolute;left:535px;top:254px;width:22px;height:1px;background:#a8a8a8"></div><div style="position:absolute;left:535px;top:378px;width:22px;height:1px;background:#a8a8a8"></div><div style="position:absolute;left:535px;top:406px;width:22px;height:1px;background:#a8a8a8"></div><div style="position:absolute;left:535px;top:435px;width:22px;height:1px;background:#a8a8a8"></div><svg style="position:absolute;left:505px;top:106px;" width="23" height="23" viewBox="0 0 23 23"><path d="M2,1L12,16L13,11L18,18L20,16L14,9L19,8Z" fill="#1a1a40"/><path d="M18,17L22,20L18,23Z" fill="#000"/></svg><svg style="position:absolute;left:505px;top:134px;" width="23" height="23" viewBox="0 0 23 23"><defs><radialGradient id="bsph" cx="0.35" cy="0.7" r="0.8"><stop offset="0" stop-color="#8ac8ff"/><stop offset="0.4" stop-color="#2a6ab0"/><stop offset="1" stop-color="#0a2a60"/></radialGradient></defs><circle cx="11" cy="11" r="10" fill="url(#bsph)"/><path d="M18,17L22,20L18,23Z" fill="#000"/></svg><svg style="position:absolute;left:505px;top:161px;" width="23" height="23" viewBox="0 0 23 23"><circle cx="11" cy="11" r="10" fill="#30b0b0"/><path d="M8,3A8,8 0 0 1 20,11L14,10Z" fill="#f0f060"/><path d="M8,13C10,8 15,8 14,11L18,15" fill="none" stroke="#222" stroke-width="2.2"/><path d="M18,17L22,20L18,23Z" fill="#000"/></svg><svg style="position:absolute;left:505px;top:188px;" width="23" height="23" viewBox="0 0 23 23"><path d="M5,5V10L3,14L8,19L12,12L16,13L19,17" fill="none" stroke="#888" stroke-width="2.2"/><circle cx="5" cy="4" r="1.8" fill="#d00"/><circle cx="13" cy="19" r="1.3" fill="#d00"/><path d="M18,17L22,20L18,23Z" fill="#000"/></svg><svg style="position:absolute;left:505px;top:217px;" width="23" height="23" viewBox="0 0 23 23"><path d="M2,20L4,14L16,2L20,6L8,18Z" fill="#e88010"/><path d="M2,20L4,14L8,18Z" fill="#f0e0c0"/><path d="M2,20L3,18L4,19Z" fill="#000"/><path d="M18,17L22,20L18,23Z" fill="#000"/></svg><svg style="position:absolute;left:505px;top:246px;" width="23" height="23" viewBox="0 0 23 23"><path d="M2,5C5,2 10,5 9,8L18,14L16,16L7,11C4,13 1,10 2,5Z" fill="#ccc" stroke="#777" stroke-width="0.8"/><path d="M14,5L20,3L19,9ZM12,13L18,11L17,18Z" fill="#2a5ad0"/><path d="M18,17L22,20L18,23Z" fill="#000"/></svg><svg style="position:absolute;left:505px;top:273px;" width="23" height="23" viewBox="0 0 23 23"><path d="M4,10A7,7 0 0 1 17,7" fill="none" stroke="#6a9ad0" stroke-width="2.6"/><path d="M18,12A7,7 0 0 1 5,15" fill="none" stroke="#6a9ad0" stroke-width="2.6"/><path d="M7,10H14V7L17,11L14,15V12H7Z" fill="#2a5aa0"/><path d="M18,17L22,20L18,23Z" fill="#000"/></svg><svg style="position:absolute;left:505px;top:301px;" width="23" height="23" viewBox="0 0 23 23"><path d="M2,20L4,14L16,2L20,6L8,18Z" fill="#208a40"/><path d="M2,20L4,14L8,18Z" fill="#f0e0c0"/><path d="M2,20L3,18L4,19Z" fill="#000"/><path d="M18,17L22,20L18,23Z" fill="#000"/></svg><svg style="position:absolute;left:505px;top:330px;" width="23" height="23" viewBox="0 0 23 23"><path d="M1,11H21M11,1V21" stroke="#1a1ad0" stroke-width="2.2" stroke-dasharray="2.2,2.2"/><path d="M18,17L22,20L18,23Z" fill="#000"/></svg><svg style="position:absolute;left:505px;top:358px;" width="23" height="23" viewBox="0 0 23 23"><path d="M2,3V20M20,3V20M2,6H6M16,6H20" stroke="#333" stroke-width="1.6"/><path d="M7,3L15,9L11,10.5L17,18L8,11.5L12,10Z" fill="#f8f020" stroke="#b0a000" stroke-width="0.7"/><path d="M18,17L22,20L18,23Z" fill="#000"/></svg><svg style="position:absolute;left:505px;top:385px;" width="23" height="23" viewBox="0 0 23 23"><path d="M3,6A3,3 0 1 1 8,6L12,3H19" fill="none" stroke="#000" stroke-width="1.2"/><path d="M12,6V9M10,9H14" stroke="#000"/><rect x="7" y="11" width="10" height="9" fill="#fff" stroke="#000" stroke-width="1.1"/><text x="8.5" y="19" font-family="Liberation Sans" font-size="8.5" font-weight="bold">A</text><path d="M18,17L22,20L18,23Z" fill="#000"/></svg><svg style="position:absolute;left:505px;top:414px;" width="23" height="23" viewBox="0 0 23 23"><text x="0" y="21" font-family="Liberation Serif" font-weight="bold" font-style="italic" font-size="17" fill="#1a2a8a">A</text><text x="12" y="20" font-family="Liberation Sans" font-weight="bold" font-size="8" fill="#1a2a8a">b</text><path d="M10,12L18,2L21,4L13,14Z" fill="#3a7ad0"/><path d="M18,17L22,20L18,23Z" fill="#000"/></svg><svg style="position:absolute;left:505px;top:442px;" width="23" height="23" viewBox="0 0 23 23"><defs><pattern id="hp2" width="4" height="4" patternUnits="userSpaceOnUse" patternTransform="rotate(-45)"><rect width="4" height="4" fill="#fff"/><rect width="1.4" height="4" fill="#6a7ab0"/></pattern></defs><rect x="1" y="2" width="19" height="7" fill="url(#hp2)" stroke="#6a7ab0"/><rect x="1" y="9" width="19" height="5" fill="#fff" stroke="#6a7ab0"/><rect x="1" y="14" width="19" height="7" fill="url(#hp2)" stroke="#6a7ab0"/><path d="M18,17L22,20L18,23Z" fill="#000"/></svg><svg style="position:absolute;left:505px;top:470px;" width="23" height="23" viewBox="0 0 23 23"><circle cx="11" cy="11" r="10" fill="#0a1ad0"/><rect x="9" y="9" width="4" height="9" fill="#fff"/><circle cx="11" cy="5.5" r="2" fill="#fff"/><path d="M18,17L22,20L18,23Z" fill="#000"/></svg><svg style="position:absolute;left:505px;top:498px;" width="23" height="23" viewBox="0 0 23 23"><path d="M2,1V21H21" fill="none" stroke="#333" stroke-width="1.2"/><path d="M5,14L15,4L20,9L10,19Z" fill="#2a70c0"/><path d="M5,14L9,10L14,15L10,19Z" fill="#e02020"/></svg><svg style="position:absolute;left:535px;top:106px;" width="23" height="23" viewBox="0 0 23 23"><path d="M2,1L12,16L13,11L18,18L20,16L14,9L19,8Z" fill="#fff" stroke="#777" stroke-width="1"/></svg><svg style="position:absolute;left:535px;top:133px;" width="23" height="23" viewBox="0 0 23 23"><path d="M2,7L11,2L20,6V16L11,21L2,16Z" fill="#2a6ab0"/><path d="M2,7L11,11V21L2,16Z" fill="#8ac8f8"/></svg><svg style="position:absolute;left:535px;top:158px;" width="23" height="23" viewBox="0 0 23 23"><ellipse cx="11" cy="17" rx="7" ry="3.5" fill="#2a6ab0"/><rect x="4" y="5" width="14" height="12" fill="#4a8ad0"/><ellipse cx="11" cy="5" rx="7" ry="3.5" fill="#2a6ab0"/><rect x="8" y="7" width="3" height="11" fill="#8ac8f8" opacity="0.7"/></svg><svg style="position:absolute;left:535px;top:182px;" width="23" height="23" viewBox="0 0 23 23"><defs><radialGradient id="bsph2" cx="0.35" cy="0.75" r="0.8"><stop offset="0" stop-color="#9ad0ff"/><stop offset="0.45" stop-color="#3a7ac0"/><stop offset="1" stop-color="#1a4a90"/></radialGradient></defs><circle cx="11" cy="11" r="10" fill="url(#bsph2)"/></svg><svg style="position:absolute;left:535px;top:206px;" width="23" height="23" viewBox="0 0 23 23"><ellipse cx="11" cy="11" rx="10" ry="7" fill="#3a7ac0"/><ellipse cx="11" cy="10.5" rx="7" ry="4" fill="#f0f0f0"/><ellipse cx="11" cy="11" rx="10" ry="7" fill="none" stroke="#1a4a90" stroke-width="0.8"/></svg><svg style="position:absolute;left:535px;top:230px;" width="23" height="23" viewBox="0 0 23 23"><path d="M3,6L7,2H15L19,6V18H3Z" fill="#2a6ab0"/><path d="M3,10H17V18H3Z" fill="#8ac8f8"/></svg><svg style="position:absolute;left:535px;top:256px;" width="23" height="23" viewBox="0 0 23 23"><path d="M4,3C8,1 19,12 17,18C15,21 3,17 3,12Z" fill="none" stroke="#3a7ac0" stroke-width="3.5"/></svg><svg style="position:absolute;left:535px;top:280px;" width="23" height="23" viewBox="0 0 23 23"><path d="M3,17C6,12 10,14 13,8C15,5 18,4 20,5" fill="none" stroke="#3a7ac0" stroke-width="3.5"/><circle cx="5" cy="17" r="3" fill="#fff" stroke="#1a4a90"/></svg><svg style="position:absolute;left:535px;top:305px;" width="23" height="23" viewBox="0 0 23 23"><path d="M2,10C2,4 10,3 10,8V20H4C2,20 2,16 2,10Z" fill="#3a7ac0"/><path d="M12,4H20V15L12,18Z" fill="#e8a0b0"/><path d="M11,1V21" stroke="#777"/></svg><svg style="position:absolute;left:535px;top:330px;" width="23" height="23" viewBox="0 0 23 23"><path d="M2,15L8,4H15L20,15L12,20Z" fill="#3a7ac0"/><path d="M8,4H15L18,12H6Z" fill="#8ac8f8"/></svg><svg style="position:absolute;left:535px;top:353px;" width="23" height="23" viewBox="0 0 23 23"><ellipse cx="11" cy="5" rx="9" ry="3.5" fill="none" stroke="#3a7ac0" stroke-width="2.2"/><ellipse cx="11" cy="9" rx="9" ry="3.5" fill="none" stroke="#3a7ac0" stroke-width="2.2"/><ellipse cx="11" cy="13" rx="9" ry="3.5" fill="none" stroke="#3a7ac0" stroke-width="2.2"/><ellipse cx="11" cy="17" rx="9" ry="3.5" fill="none" stroke="#3a7ac0" stroke-width="2.2"/></svg><svg style="position:absolute;left:535px;top:382px;" width="23" height="23" viewBox="0 0 23 23"><path d="M2,9L12,4L21,7V15L11,20L2,17Z" fill="#3a7ac0"/><path d="M4,10L12,6V17L4,17Z" fill="#ddd"/></svg><svg style="position:absolute;left:535px;top:410px;" width="23" height="23" viewBox="0 0 23 23"><path d="M2,11L16,4L21,7V13L7,19L2,16Z" fill="#3a7ac0"/><path d="M2,11L16,4L21,7L7,14Z" fill="#aad8f8"/></svg><svg style="position:absolute;left:535px;top:438px;" width="23" height="23" viewBox="0 0 23 23"><circle cx="8" cy="8" r="7" fill="url(#wsph)"/><circle cx="14" cy="14" r="7.5" fill="url(#wsph)"/></svg><svg style="position:absolute;left:535px;top:461px;" width="23" height="23" viewBox="0 0 23 23"><defs><radialGradient id="wsph" cx="0.35" cy="0.3" r="0.8"><stop offset="0" stop-color="#fff"/><stop offset="0.6" stop-color="#bbb"/><stop offset="1" stop-color="#666"/></radialGradient></defs><circle cx="11" cy="11" r="10.5" fill="url(#wsph)"/><path d="M20.5,8C22,14 19,20 12,21.5C14,18 15,12 20.5,8Z" fill="#f0f020"/></svg><svg style="position:absolute;left:535px;top:483px;" width="23" height="23" viewBox="0 0 23 23"><circle cx="8" cy="8" r="7" fill="url(#wsph)"/><circle cx="14" cy="14" r="7.5" fill="url(#wsph)"/><path d="M7.5,10.5C11,9 14.5,11 14,15C11,15.5 8,14 7.5,10.5Z" fill="#f0f020"/></svg><svg style="position:absolute;left:535px;top:508px;" width="23" height="23" viewBox="0 0 23 23"><circle cx="8" cy="8" r="7" fill="url(#wsph)"/><defs><radialGradient id="gsph3" cx="0.4" cy="0.35" r="0.8"><stop offset="0" stop-color="#e8ffa0"/><stop offset="1" stop-color="#70b010"/></radialGradient></defs><circle cx="14" cy="14" r="7.5" fill="url(#gsph3)"/></svg><div style="position:absolute;left:5px;top:120px;width:491px;height:881px;border:1px solid #828282;box-sizing:border-box;background:#f0f0f0"></div><div style="position:absolute;left:8px;top:123px;width:64px;height:20px;background:#f0f0f0;border:1px solid #d9d9d9;border-bottom:none;box-sizing:border-box"></div><div style="position:absolute;left:72px;top:121px;width:64px;height:23px;background:#fff"></div><div class="t" style="left:36px;top:127px;font-size:12px;line-height:12px;color:#000;">Modell</div><div class="t" style="left:101px;top:126px;font-size:12px;line-height:12px;color:#000;">Folien</div><div style="position:absolute;left:10px;top:144px;width:482px;height:315px;border:1px solid #828282;box-sizing:border-box;background:#fff"></div><div style="position:absolute;left:11px;top:145px;width:480px;height:17px;background:#d9d9d9"></div><div class="t" style="left:54px;top:147px;font-size:12px;line-height:12px;color:#000;">Standard</div><svg style="position:absolute;left:34px;top:146px;" width="16" height="16" viewBox="0 0 16 16"><g transform="scale(0.74)"><path d="M0.5,16L12.5,9L21,14.5L9,21.5Z" fill="#e8703a"/><path d="M0.5,11.5L12.5,4.5L21,10L9,17Z" fill="#fafafa"/><path d="M0.5,7.5L12.5,0.5L21,6L9,13Z" fill="#1f64c4"/></g></svg><svg style="position:absolute;left:80px;top:125px;" width="14" height="12" viewBox="0 0 14 12"><path d="M1,8L7,5L13,8L7,11Z" fill="#e8703a"/><path d="M1,6L7,3L13,6L7,9Z" fill="#fff"/><path d="M1,4.5L7,1.5L13,4.5L7,7.5Z" fill="#1f62c0"/></svg><svg style="position:absolute;left:14px;top:125px;" width="18" height="18" viewBox="0 0 18 18"><circle cx="6" cy="9" r="4.5" fill="#e8eef4" stroke="#999" stroke-width="1"/><path d="M5,2L11,1L15,14L11,17Z" fill="#e8e020" stroke="#8a8a30" stroke-width="0.6"/><path d="M12,13L16,17" stroke="#222" stroke-width="2"/></svg><div style="position:absolute;left:10px;top:464px;width:482px;height:315px;border:1px solid #828282;box-sizing:border-box;background:#fff"></div><div style="position:absolute;left:11px;top:489px;width:166px;height:289px;background:#f7f7f7"></div><div class="t" style="left:17px;top:471px;font-size:12px;line-height:12px;color:#000;">Name</div><svg style="position:absolute;left:90px;top:465px;" width="12" height="7" viewBox="0 0 12 7"><path d="M1,1L6,5L11,1" fill="none" stroke="#999"/></svg><div style="position:absolute;left:177px;top:466px;width:1px;height:22px;background:#e5e5e5"></div><div style="position:absolute;left:211px;top:466px;width:1px;height:22px;background:#e5e5e5"></div><div style="position:absolute;left:245px;top:466px;width:1px;height:22px;background:#e5e5e5"></div><div style="position:absolute;left:280px;top:466px;width:1px;height:22px;background:#e5e5e5"></div><div style="position:absolute;left:314px;top:466px;width:1px;height:22px;background:#e5e5e5"></div><div class="t" style="left:184px;top:471px;font-size:12px;line-height:12px;color:#000;">F</div><div class="t" style="left:218px;top:471px;font-size:12px;line-height:12px;color:#000;">T</div><div class="t" style="left:252px;top:471px;font-size:12px;line-height:12px;color:#000;">B</div><div class="t" style="left:287px;top:471px;font-size:12px;line-height:12px;color:#000;">A</div><div class="t" style="left:321px;top:471px;font-size:12px;line-height:12px;color:#000;">S</div><svg style="position:absolute;left:16px;top:490px;" width="16" height="15" viewBox="0 0 16 15"><g transform="scale(0.74)"><path d="M0.5,16L12.5,9L21,14.5L9,21.5Z" fill="#e8703a"/><path d="M0.5,11.5L12.5,4.5L21,10L9,17Z" fill="#fafafa"/><path d="M0.5,7.5L12.5,0.5L21,6L9,13Z" fill="#1f64c4"/></g></svg><div class="t" style="left:33px;top:493px;font-size:12px;line-height:12px;color:#000;letter-spacing:-0.35px">018_NB</div><div style="position:absolute;left:178px;top:489px;width:16px;height:16px;background:#000"></div><div style="position:absolute;left:212px;top:496px;width:17px;height:3px;background:#000"></div><div class="t" style="left:252px;top:493px;font-size:12px;line-height:12px;color:#000;">0.18</div><svg style="position:absolute;left:281px;top:490px;" width="16" height="15" viewBox="0 0 16 15"><path d="M1.5,8L6,12.5L14.5,2" fill="none" stroke="#2ad22a" stroke-width="2.4"/></svg><svg style="position:absolute;left:315px;top:493px;" width="17" height="10" viewBox="0 0 17 10"><path d="M1,5C4,0 13,0 16,5C13,10 4,10 1,5Z" fill="#fff" stroke="#333" stroke-width="1.2"/><circle cx="8.5" cy="5" r="2.6" fill="#1f4c8a"/><circle cx="8.5" cy="5" r="1" fill="#000"/></svg><svg style="position:absolute;left:16px;top:509px;" width="16" height="15" viewBox="0 0 16 15"><g transform="scale(0.74)"><path d="M0.5,16L12.5,9L21,14.5L9,21.5Z" fill="#e8703a"/><path d="M0.5,11.5L12.5,4.5L21,10L9,17Z" fill="#fafafa"/><path d="M0.5,7.5L12.5,0.5L21,6L9,13Z" fill="#1f64c4"/></g></svg><div class="t" style="left:33px;top:512px;font-size:12px;line-height:12px;color:#000;letter-spacing:-0.35px">025_NB_Text</div><div style="position:absolute;left:178px;top:508px;width:16px;height:16px;background:#000"></div><div style="position:absolute;left:212px;top:515px;width:17px;height:3px;background:#000"></div><div class="t" style="left:252px;top:512px;font-size:12px;line-height:12px;color:#000;">0.25</div><svg style="position:absolute;left:281px;top:509px;" width="16" height="15" viewBox="0 0 16 15"><path d="M1.5,8L6,12.5L14.5,2" fill="none" stroke="#2ad22a" stroke-width="2.4"/></svg><svg style="position:absolute;left:315px;top:512px;" width="17" height="10" viewBox="0 0 17 10"><path d="M1,5C4,0 13,0 16,5C13,10 4,10 1,5Z" fill="#fff" stroke="#333" stroke-width="1.2"/><circle cx="8.5" cy="5" r="2.6" fill="#1f4c8a"/><circle cx="8.5" cy="5" r="1" fill="#000"/></svg><svg style="position:absolute;left:16px;top:528px;" width="16" height="15" viewBox="0 0 16 15"><g transform="scale(0.74)"><path d="M0.5,16L12.5,9L21,14.5L9,21.5Z" fill="#e8703a"/><path d="M0.5,11.5L12.5,4.5L21,10L9,17Z" fill="#fafafa"/><path d="M0.5,7.5L12.5,0.5L21,6L9,13Z" fill="#1f64c4"/></g></svg><div class="t" style="left:33px;top:531px;font-size:12px;line-height:12px;color:#000;letter-spacing:-0.35px">035_NB</div><div style="position:absolute;left:178px;top:527px;width:16px;height:16px;background:#000"></div><div style="position:absolute;left:212px;top:534px;width:17px;height:3px;background:#000"></div><div class="t" style="left:252px;top:531px;font-size:12px;line-height:12px;color:#000;">0.35</div><svg style="position:absolute;left:281px;top:528px;" width="16" height="15" viewBox="0 0 16 15"><path d="M1.5,8L6,12.5L14.5,2" fill="none" stroke="#2ad22a" stroke-width="2.4"/></svg><svg style="position:absolute;left:315px;top:531px;" width="17" height="10" viewBox="0 0 17 10"><path d="M1,5C4,0 13,0 16,5C13,10 4,10 1,5Z" fill="#fff" stroke="#333" stroke-width="1.2"/><circle cx="8.5" cy="5" r="2.6" fill="#1f4c8a"/><circle cx="8.5" cy="5" r="1" fill="#000"/></svg><svg style="position:absolute;left:16px;top:547px;" width="16" height="15" viewBox="0 0 16 15"><g transform="scale(0.74)"><path d="M0.5,16L12.5,9L21,14.5L9,21.5Z" fill="#e8703a"/><path d="M0.5,11.5L12.5,4.5L21,10L9,17Z" fill="#fafafa"/><path d="M0.5,7.5L12.5,0.5L21,6L9,13Z" fill="#1f64c4"/></g></svg><div class="t" style="left:33px;top:550px;font-size:12px;line-height:12px;color:#000;letter-spacing:-0.35px">035_NB_Text</div><div style="position:absolute;left:178px;top:546px;width:16px;height:16px;background:#000"></div><div style="position:absolute;left:212px;top:553px;width:17px;height:3px;background:#000"></div><div class="t" style="left:252px;top:550px;font-size:12px;line-height:12px;color:#000;">0.35</div><svg style="position:absolute;left:281px;top:547px;" width="16" height="15" viewBox="0 0 16 15"><path d="M1.5,8L6,12.5L14.5,2" fill="none" stroke="#2ad22a" stroke-width="2.4"/></svg><svg style="position:absolute;left:315px;top:550px;" width="17" height="10" viewBox="0 0 17 10"><path d="M1,5C4,0 13,0 16,5C13,10 4,10 1,5Z" fill="#fff" stroke="#333" stroke-width="1.2"/><circle cx="8.5" cy="5" r="2.6" fill="#1f4c8a"/><circle cx="8.5" cy="5" r="1" fill="#000"/></svg><svg style="position:absolute;left:16px;top:566px;" width="16" height="15" viewBox="0 0 16 15"><g transform="scale(0.74)"><path d="M0.5,16L12.5,9L21,14.5L9,21.5Z" fill="#e8703a"/><path d="M0.5,11.5L12.5,4.5L21,10L9,17Z" fill="#fafafa"/><path d="M0.5,7.5L12.5,0.5L21,6L9,13Z" fill="#1f64c4"/></g></svg><div class="t" style="left:33px;top:569px;font-size:12px;line-height:12px;color:#000;letter-spacing:-0.35px">050_NB_Text</div><div style="position:absolute;left:178px;top:565px;width:16px;height:16px;background:#000"></div><div style="position:absolute;left:212px;top:572px;width:17px;height:3px;background:#000"></div><div class="t" style="left:252px;top:569px;font-size:12px;line-height:12px;color:#000;">0.50</div><svg style="position:absolute;left:281px;top:566px;" width="16" height="15" viewBox="0 0 16 15"><path d="M1.5,8L6,12.5L14.5,2" fill="none" stroke="#2ad22a" stroke-width="2.4"/></svg><svg style="position:absolute;left:315px;top:569px;" width="17" height="10" viewBox="0 0 17 10"><path d="M1,5C4,0 13,0 16,5C13,10 4,10 1,5Z" fill="#fff" stroke="#333" stroke-width="1.2"/><circle cx="8.5" cy="5" r="2.6" fill="#1f4c8a"/><circle cx="8.5" cy="5" r="1" fill="#000"/></svg><svg style="position:absolute;left:16px;top:585px;" width="16" height="15" viewBox="0 0 16 15"><g transform="scale(0.74)"><path d="M0.5,16L12.5,9L21,14.5L9,21.5Z" fill="#e8703a"/><path d="M0.5,11.5L12.5,4.5L21,10L9,17Z" fill="#fafafa"/><path d="M0.5,7.5L12.5,0.5L21,6L9,13Z" fill="#1f64c4"/></g></svg><div class="t" style="left:33px;top:588px;font-size:12px;line-height:12px;color:#000;letter-spacing:-0.35px">070_NB</div><div style="position:absolute;left:178px;top:584px;width:16px;height:16px;background:#000"></div><div style="position:absolute;left:212px;top:591px;width:17px;height:3px;background:#000"></div><div class="t" style="left:252px;top:588px;font-size:12px;line-height:12px;color:#000;">0.70</div><svg style="position:absolute;left:281px;top:585px;" width="16" height="15" viewBox="0 0 16 15"><path d="M1.5,8L6,12.5L14.5,2" fill="none" stroke="#2ad22a" stroke-width="2.4"/></svg><svg style="position:absolute;left:315px;top:588px;" width="17" height="10" viewBox="0 0 17 10"><path d="M1,5C4,0 13,0 16,5C13,10 4,10 1,5Z" fill="#fff" stroke="#333" stroke-width="1.2"/><circle cx="8.5" cy="5" r="2.6" fill="#1f4c8a"/><circle cx="8.5" cy="5" r="1" fill="#000"/></svg><svg style="position:absolute;left:15px;top:604px;" width="16" height="16" viewBox="0 0 16 16"><path d="M2,1V15M14,1V15" stroke="#000"/><path d="M3,3L13,12L3,14Z" fill="#ee0" stroke="#880" stroke-width="0.6"/></svg><div class="t" style="left:33px;top:607px;font-size:12px;line-height:12px;color:#000;letter-spacing:-0.35px">BEMASSUNGEN</div><div style="position:absolute;left:178px;top:603px;width:16px;height:16px;background:#000"></div><div style="position:absolute;left:212px;top:610px;width:17px;height:3px;background:#000"></div><div class="t" style="left:252px;top:607px;font-size:12px;line-height:12px;color:#000;">0.00</div><svg style="position:absolute;left:281px;top:604px;" width="16" height="15" viewBox="0 0 16 15"><path d="M1.5,8L6,12.5L14.5,2" fill="none" stroke="#2ad22a" stroke-width="2.4"/></svg><svg style="position:absolute;left:315px;top:607px;" width="17" height="10" viewBox="0 0 17 10"><path d="M1,5C4,0 13,0 16,5C13,10 4,10 1,5Z" fill="#fff" stroke="#333" stroke-width="1.2"/><circle cx="8.5" cy="5" r="2.6" fill="#1f4c8a"/><circle cx="8.5" cy="5" r="1" fill="#000"/></svg><svg style="position:absolute;left:15px;top:623px;" width="16" height="16" viewBox="0 0 16 16"><path d="M2,1H9L12,4V15H2Z" fill="#fff" stroke="#7a8aa0"/><path d="M8,10L14,3L15,5L10,11Z" fill="#1a5fd0"/></svg><div class="t" style="left:33px;top:626px;font-size:12px;line-height:12px;color:#000;letter-spacing:-0.35px">BESCHRIFTUNGEN</div><div style="position:absolute;left:178px;top:622px;width:16px;height:16px;background:#000"></div><div style="position:absolute;left:212px;top:629px;width:17px;height:3px;background:#000"></div><div class="t" style="left:252px;top:626px;font-size:12px;line-height:12px;color:#000;">0.35</div><svg style="position:absolute;left:281px;top:623px;" width="16" height="15" viewBox="0 0 16 15"><path d="M1.5,8L6,12.5L14.5,2" fill="none" stroke="#2ad22a" stroke-width="2.4"/></svg><svg style="position:absolute;left:315px;top:626px;" width="17" height="10" viewBox="0 0 17 10"><path d="M1,5C4,0 13,0 16,5C13,10 4,10 1,5Z" fill="#fff" stroke="#333" stroke-width="1.2"/><circle cx="8.5" cy="5" r="2.6" fill="#1f4c8a"/><circle cx="8.5" cy="5" r="1" fill="#000"/></svg><svg style="position:absolute;left:16px;top:642px;" width="16" height="15" viewBox="0 0 16 15"><g transform="scale(0.74)"><path d="M0.5,16L12.5,9L21,14.5L9,21.5Z" fill="#e8703a"/><path d="M0.5,11.5L12.5,4.5L21,10L9,17Z" fill="#fafafa"/><path d="M0.5,7.5L12.5,0.5L21,6L9,13Z" fill="#1f64c4"/></g></svg><div class="t" style="left:33px;top:645px;font-size:12px;line-height:12px;color:#000;letter-spacing:-0.35px">FREIHANDLINIE</div><div style="position:absolute;left:178px;top:641px;width:16px;height:16px;background:#000"></div><div style="position:absolute;left:212px;top:648px;width:17px;height:3px;background:#000"></div><div class="t" style="left:252px;top:645px;font-size:12px;line-height:12px;color:#000;">0.25</div><svg style="position:absolute;left:281px;top:642px;" width="16" height="15" viewBox="0 0 16 15"><path d="M1.5,8L6,12.5L14.5,2" fill="none" stroke="#2ad22a" stroke-width="2.4"/></svg><svg style="position:absolute;left:315px;top:645px;" width="17" height="10" viewBox="0 0 17 10"><path d="M1,5C4,0 13,0 16,5C13,10 4,10 1,5Z" fill="#fff" stroke="#333" stroke-width="1.2"/><circle cx="8.5" cy="5" r="2.6" fill="#1f4c8a"/><circle cx="8.5" cy="5" r="1" fill="#000"/></svg><svg style="position:absolute;left:15px;top:662px;" width="16" height="14" viewBox="0 0 16 14"><rect x="1" y="5" width="10" height="4" fill="#c070d0" stroke="#702080" stroke-width="0.8"/><path d="M11,2V12M14,2V12M11,2H14M11,12H14" stroke="#000"/></svg><div class="t" style="left:33px;top:664px;font-size:12px;line-height:12px;color:#000;letter-spacing:-0.35px">GEWINDELINIEN</div><div style="position:absolute;left:178px;top:660px;width:16px;height:16px;background:#a000c0"></div><div style="position:absolute;left:212px;top:667px;width:17px;height:3px;background:#000"></div><div class="t" style="left:252px;top:664px;font-size:12px;line-height:12px;color:#000;">0.00</div><svg style="position:absolute;left:281px;top:661px;" width="16" height="15" viewBox="0 0 16 15"><path d="M1.5,8L6,12.5L14.5,2" fill="none" stroke="#2ad22a" stroke-width="2.4"/></svg><svg style="position:absolute;left:315px;top:664px;" width="17" height="10" viewBox="0 0 17 10"><path d="M1,5C4,0 13,0 16,5C13,10 4,10 1,5Z" fill="#fff" stroke="#333" stroke-width="1.2"/><circle cx="8.5" cy="5" r="2.6" fill="#1f4c8a"/><circle cx="8.5" cy="5" r="1" fill="#000"/></svg><svg style="position:absolute;left:15px;top:680px;" width="16" height="16" viewBox="0 0 16 16"><text x="0" y="7" font-family="Liberation Sans" font-weight="bold" font-size="8">H</text><path d="M3,15L12,5L15,7L6,16Z" fill="#40a040" stroke="#204020" stroke-width="0.6"/></svg><div class="t" style="left:33px;top:683px;font-size:12px;line-height:12px;color:#000;letter-spacing:-0.35px">HILFSLINIEN</div><div style="position:absolute;left:178px;top:679px;width:16px;height:16px;background:#00ee00"></div><div style="position:absolute;left:212px;top:686px;width:17px;height:3px;background:#000"></div><div class="t" style="left:252px;top:683px;font-size:12px;line-height:12px;color:#000;">0.18</div><svg style="position:absolute;left:281px;top:680px;" width="16" height="15" viewBox="0 0 16 15"><path d="M1.5,8L6,12.5L14.5,2" fill="none" stroke="#2ad22a" stroke-width="2.4"/></svg><svg style="position:absolute;left:315px;top:683px;" width="17" height="10" viewBox="0 0 17 10"><path d="M1,5C4,0 13,0 16,5C13,10 4,10 1,5Z" fill="#fff" stroke="#333" stroke-width="1.2"/><circle cx="8.5" cy="5" r="2.6" fill="#1f4c8a"/><circle cx="8.5" cy="5" r="1" fill="#000"/></svg><svg style="position:absolute;left:15px;top:699px;" width="18" height="16" viewBox="0 0 18 16"><path d="M2,3V15M15,3V15M2,7H15" stroke="#000" stroke-width="1.2"/><path d="M6,1H11V4H6Z" fill="#3c3" /></svg><div class="t" style="left:33px;top:702px;font-size:12px;line-height:12px;color:#000;letter-spacing:-0.35px">MASSGRENZEN</div><div style="position:absolute;left:178px;top:698px;width:16px;height:16px;background:#0000b4"></div><div style="position:absolute;left:212px;top:705px;width:17px;height:3px;background:#000"></div><div class="t" style="left:252px;top:702px;font-size:12px;line-height:12px;color:#000;">0.25</div><svg style="position:absolute;left:281px;top:699px;" width="16" height="15" viewBox="0 0 16 15"><path d="M1.5,8L6,12.5L14.5,2" fill="none" stroke="#2ad22a" stroke-width="2.4"/></svg><svg style="position:absolute;left:315px;top:702px;" width="17" height="10" viewBox="0 0 17 10"><path d="M1,5C4,0 13,0 16,5C13,10 4,10 1,5Z" fill="#fff" stroke="#333" stroke-width="1.2"/><circle cx="8.5" cy="5" r="2.6" fill="#1f4c8a"/><circle cx="8.5" cy="5" r="1" fill="#000"/></svg><svg style="position:absolute;left:15px;top:718px;" width="18" height="16" viewBox="0 0 18 16"><path d="M2,3V15M15,3V15M2,7H15" stroke="#000" stroke-width="1.2"/><path d="M6,1H11V4H6Z" fill="#3c3" /></svg><div class="t" style="left:33px;top:721px;font-size:12px;line-height:12px;color:#000;letter-spacing:-0.35px">MASSLINIEN</div><div style="position:absolute;left:178px;top:717px;width:16px;height:16px;background:#0000b4"></div><div style="position:absolute;left:212px;top:724px;width:17px;height:3px;background:#000"></div><div class="t" style="left:252px;top:721px;font-size:12px;line-height:12px;color:#000;">0.35</div><svg style="position:absolute;left:281px;top:718px;" width="16" height="15" viewBox="0 0 16 15"><path d="M1.5,8L6,12.5L14.5,2" fill="none" stroke="#2ad22a" stroke-width="2.4"/></svg><svg style="position:absolute;left:315px;top:721px;" width="17" height="10" viewBox="0 0 17 10"><path d="M1,5C4,0 13,0 16,5C13,10 4,10 1,5Z" fill="#fff" stroke="#333" stroke-width="1.2"/><circle cx="8.5" cy="5" r="2.6" fill="#1f4c8a"/><circle cx="8.5" cy="5" r="1" fill="#000"/></svg><svg style="position:absolute;left:15px;top:737px;" width="18" height="16" viewBox="0 0 18 16"><path d="M2,3V15M15,3V15M2,7H15" stroke="#000" stroke-width="1.2"/><path d="M6,1H11V4H6Z" fill="#3c3"/></svg><div class="t" style="left:33px;top:740px;font-size:12px;line-height:12px;color:#000;letter-spacing:-0.35px">MASSTEXTE</div><div style="position:absolute;left:178px;top:736px;width:16px;height:16px;background:#a000c0"></div><div style="position:absolute;left:212px;top:743px;width:17px;height:3px;background:#000"></div><div class="t" style="left:252px;top:740px;font-size:12px;line-height:12px;color:#000;">0.35</div><svg style="position:absolute;left:281px;top:737px;" width="16" height="15" viewBox="0 0 16 15"><path d="M1.5,8L6,12.5L14.5,2" fill="none" stroke="#2ad22a" stroke-width="2.4"/></svg><svg style="position:absolute;left:315px;top:740px;" width="17" height="10" viewBox="0 0 17 10"><path d="M1,5C4,0 13,0 16,5C13,10 4,10 1,5Z" fill="#fff" stroke="#333" stroke-width="1.2"/><circle cx="8.5" cy="5" r="2.6" fill="#1f4c8a"/><circle cx="8.5" cy="5" r="1" fill="#000"/></svg><svg style="position:absolute;left:15px;top:756px;" width="18" height="16" viewBox="0 0 18 16"><path d="M1,8H17M9,1V15" stroke="#3040d0" stroke-dasharray="3,2"/></svg><div class="t" style="left:33px;top:759px;font-size:12px;line-height:12px;color:#000;letter-spacing:-0.35px">MITTELLINIEN</div><div style="position:absolute;left:178px;top:755px;width:16px;height:16px;background:#0000ff"></div><svg style="position:absolute;left:212px;top:761px;" width="17" height="4" viewBox="0 0 17 4"><rect x="0" y="0" width="5" height="3"/><rect x="7" y="0" width="3" height="3"/><rect x="12" y="0" width="5" height="3"/></svg><div class="t" style="left:252px;top:759px;font-size:12px;line-height:12px;color:#000;">0.35</div><svg style="position:absolute;left:281px;top:756px;" width="16" height="15" viewBox="0 0 16 15"><path d="M1.5,8L6,12.5L14.5,2" fill="none" stroke="#2ad22a" stroke-width="2.4"/></svg><svg style="position:absolute;left:315px;top:759px;" width="17" height="10" viewBox="0 0 17 10"><path d="M1,5C4,0 13,0 16,5C13,10 4,10 1,5Z" fill="#fff" stroke="#333" stroke-width="1.2"/><circle cx="8.5" cy="5" r="2.6" fill="#1f4c8a"/><circle cx="8.5" cy="5" r="1" fill="#000"/></svg><div style="position:absolute;left:178px;top:776px;width:16px;height:2px;background:#000"></div><div style="position:absolute;left:15px;top:776px;width:16px;height:2px;background:#aab"></div><div style="position:absolute;left:474px;top:466px;width:17px;height:312px;background:#f0f0f0"></div><div style="position:absolute;left:475px;top:483px;width:15px;height:173px;background:#cdcdcd"></div><svg style="position:absolute;left:476px;top:468px;" width="12" height="10" viewBox="0 0 12 10"><path d="M2,7L6,3L10,7" fill="none" stroke="#606060" stroke-width="1.5"/></svg><svg style="position:absolute;left:476px;top:765px;" width="12" height="10" viewBox="0 0 12 10"><path d="M2,3L6,7L10,3" fill="none" stroke="#606060" stroke-width="1.5"/></svg><svg style="position:absolute;left:12px;top:786px;" width="24" height="24" viewBox="0 0 24 24"><path d="M2,3H22V10L15,22H2Z" fill="#f5e26a" opacity="0.9"/><path d="M3,3L21,21M21,3L3,21" stroke="#e01060" stroke-width="3"/><path d="M11,6V14" stroke="#555" stroke-width="2"/></svg><svg style="position:absolute;left:40px;top:787px;" width="18" height="24" viewBox="0 0 18 24"><path d="M2,9H12V21C12,23 2,23 2,21Z" fill="#e0e4ea" stroke="#9aa" stroke-width="0.8"/><path d="M7,8C7,3 10,2 14,2L12,0M14,2L12,4" fill="none" stroke="#1a6fd0" stroke-width="1.8"/></svg><div style="position:absolute;left:10px;top:815px;width:482px;height:182px;border:1px solid #828282;box-sizing:border-box;background:#fff"></div><div style="position:absolute;left:11px;top:816px;width:16px;height:165px;background:#f0f0f0"></div><div style="position:absolute;left:11px;top:980px;width:480px;height:16px;background:#f0f0f0"></div><div style="position:absolute;left:28px;top:981px;width:103px;height:14px;background:#cdcdcd"></div><svg style="position:absolute;left:14px;top:983px;" width="10" height="10" viewBox="0 0 10 10"><path d="M7,2L3,5L7,8" fill="none" stroke="#606060" stroke-width="1.5"/></svg><svg style="position:absolute;left:477px;top:983px;" width="10" height="10" viewBox="0 0 10 10"><path d="M3,2L7,5L3,8" fill="none" stroke="#606060" stroke-width="1.5"/></svg><div style="position:absolute;left:0px;top:1007px;width:502px;height:1px;background:#828282"></div><svg style="position:absolute;left:0;top:0" width="1920" height="1040" viewBox="0 0 1920 1040"><defs><clipPath id="viewc"><rect x="561" y="102" width="1342" height="890"/></clipPath></defs><g clip-path="url(#viewc)"><defs><linearGradient id="gOut" gradientUnits="userSpaceOnUse" x1="951.3" y1="236.1" x2="1172.7" y2="823.9"><stop offset="0" stop-color="#7c7c7c"/><stop offset="0.38" stop-color="#767676"/><stop offset="0.66" stop-color="#626262"/><stop offset="0.94" stop-color="#4c4c4c"/></linearGradient><linearGradient id="gOutI" gradientUnits="userSpaceOnUse" x1="981.6" y1="316.6" x2="1142.4" y2="743.4"><stop offset="0" stop-color="#828282"/><stop offset="0.4" stop-color="#747474"/><stop offset="0.7" stop-color="#646464"/><stop offset="1" stop-color="#4c4c4c"/></linearGradient><linearGradient id="gInO" gradientUnits="userSpaceOnUse" x1="966.8" y1="277.3" x2="1157.2" y2="782.7"><stop offset="0" stop-color="#4a4a4a"/><stop offset="0.6" stop-color="#5a5a5a"/><stop offset="1" stop-color="#7a7a7a"/></linearGradient><linearGradient id="gInI" gradientUnits="userSpaceOnUse" x1="995.0" y1="352.2" x2="1129.0" y2="707.8"><stop offset="0" stop-color="#404040"/><stop offset="0.6" stop-color="#606060"/><stop offset="1" stop-color="#7a7a7a"/></linearGradient><linearGradient id="gCap" gradientUnits="userSpaceOnUse" x1="951.3" y1="236.1" x2="1172.7" y2="823.9"><stop offset="0" stop-color="#626262"/><stop offset="1" stop-color="#525252"/></linearGradient><linearGradient id="gDark" gradientUnits="userSpaceOnUse" x1="963.3" y1="268.0" x2="1160.7" y2="792.0"><stop offset="0" stop-color="#383838"/><stop offset="0.1" stop-color="#3a3a3a"/><stop offset="0.24" stop-color="#535353"/><stop offset="0.6" stop-color="#5a5a5a"/><stop offset="1" stop-color="#7a7a7a"/></linearGradient><linearGradient id="gTL" gradientUnits="userSpaceOnUse" x1="966.8" y1="277.3" x2="1157.2" y2="782.7"><stop offset="0" stop-color="#5f8a8a"/><stop offset="0.6" stop-color="#5a8585"/><stop offset="1" stop-color="#7a7a7a"/></linearGradient><clipPath id="c1"><polygon points="1200.4,764.2 1207.3,761.4 1214.1,758.2 1220.7,754.6 1227.1,750.7 1233.3,746.4 1239.3,741.7 1245.1,736.7 1250.7,731.3 1256.1,725.6 1261.2,719.6 1266.1,713.2 1270.8,706.5 1275.2,699.6 1279.3,692.3 1283.2,684.8 1286.8,677.0 1290.1,669.0 1293.2,660.7 1295.9,652.2 1298.4,643.5 1300.5,634.6 1302.4,625.5 1304.0,616.2 1305.2,606.7 1306.2,597.2 1306.8,587.4 1307.1,577.6 1307.1,567.7 1306.9,557.7 1306.3,547.6 1305.3,537.5 1304.1,527.3 1302.6,517.1 1300.8,506.9 1298.6,496.8 1296.2,486.6 1293.5,476.5 1290.5,466.4 1287.2,456.4 1283.6,446.5 1279.8,436.7 1275.7,427.1 1271.3,417.5 1266.7,408.1 1261.8,398.9 1256.7,389.8 1251.3,381.0 1245.8,372.3 1240.0,363.9 1234.0,355.7 1227.8,347.7 1221.4,340.0 1214.8,332.5 1208.1,325.4 1201.2,318.5 1194.2,311.9 1187.0,305.6 1179.7,299.7 1172.3,294.1 1164.8,288.8 1157.2,283.9 1149.5,279.3 1141.8,275.1 1134.0,271.2 1126.1,267.7 1118.3,264.6 1110.4,261.9 1102.5,259.6 1094.6,257.7 1086.7,256.1 1078.9,255.0 1071.1,254.2 1063.3,253.9 1055.6,253.9 1048.0,254.4 1040.5,255.3 1033.1,256.5 1025.8,258.2 1018.6,260.2 1011.5,262.6 1004.6,265.4 997.9,268.7 991.3,272.2 984.9,276.2 978.7,280.5 972.7,285.2 966.9,290.2 961.3,295.6 955.9,301.3 950.7,307.3 945.8,313.7 941.2,320.3 936.8,327.3 932.6,334.5 928.8,342.1 925.2,349.9 921.8,357.9 918.8,366.2 916.0,374.7 913.6,383.4 911.4,392.3 909.6,401.4 908.0,410.7 906.8,420.1 905.8,429.7 905.2,439.4 904.8,449.3 904.8,459.2 905.1,469.2 905.7,479.3 906.6,489.4 907.8,499.6 909.4,509.7 911.2,519.9 913.3,530.1 915.8,540.3 918.5,550.4 921.5,560.4 924.8,570.4 928.3,580.3 932.2,590.1 936.3,599.8 940.7,609.3 945.3,618.7 950.2,628.0 955.3,637.0 960.6,645.9 966.2,654.6 972.0,663.0 978.0,671.2 984.2,679.2 990.6,686.9 997.1,694.4 1003.9,701.5 1010.7,708.4 1017.8,715.0 1024.9,721.2 1032.2,727.2 1039.6,732.8 1047.2,738.1 1054.8,743.0 1062.4,747.6 1070.2,751.8 1078.0,755.7 1085.8,759.1 1093.7,762.2 1101.6,765.0 1109.5,767.3 1117.4,769.2 1125.3,770.8 1133.1,771.9 1140.9,772.6 1148.7,773.0 1156.4,772.9 1164.0,772.5 1171.5,771.6 1178.9,770.4 1186.2,768.7 1193.4,766.7"/></clipPath><mask id="m2" maskUnits="userSpaceOnUse" x="0" y="0" width="1920" height="1040"><rect x="0" y="0" width="1920" height="1040" fill="#fff"/><g clip-path="url(#c1)"><polygon points="1171.6,821.0 1179.3,817.9 1186.9,814.3 1194.2,810.3 1201.4,805.9 1208.4,801.0 1215.1,795.8 1221.6,790.2 1227.9,784.2 1233.9,777.8 1239.7,771.0 1245.1,763.9 1250.4,756.5 1255.3,748.7 1259.9,740.5 1264.3,732.1 1268.3,723.4 1272.0,714.4 1275.4,705.1 1278.5,695.6 1281.2,685.9 1283.7,675.9 1285.8,665.7 1287.5,655.3 1288.9,644.7 1290.0,634.0 1290.7,623.1 1291.0,612.1 1291.1,601.0 1290.7,589.8 1290.1,578.5 1289.0,567.2 1287.7,555.8 1286.0,544.4 1283.9,533.0 1281.5,521.6 1278.8,510.3 1275.8,498.9 1272.4,487.7 1268.7,476.5 1264.7,465.4 1260.4,454.4 1255.8,443.6 1250.9,432.9 1245.7,422.4 1240.3,412.1 1234.6,401.9 1228.6,392.0 1222.3,382.3 1215.9,372.9 1209.1,363.7 1202.2,354.7 1195.1,346.1 1187.7,337.8 1180.2,329.8 1172.5,322.1 1164.6,314.7 1156.6,307.7 1148.4,301.0 1140.1,294.7 1131.7,288.8 1123.2,283.3 1114.6,278.2 1106.0,273.5 1097.2,269.1 1088.4,265.3 1079.6,261.8 1070.8,258.7 1062.0,256.1 1053.1,254.0 1044.3,252.3 1035.5,251.0 1026.8,250.1 1018.1,249.8 1009.5,249.8 1001.0,250.3 992.6,251.3 984.3,252.7 976.1,254.5 968.0,256.8 960.2,259.5 952.4,262.7 944.9,266.3 937.5,270.3 930.3,274.7 923.4,279.5 916.7,284.8 910.1,290.4 903.9,296.4 897.9,302.8 892.1,309.6 886.6,316.7 881.4,324.1 876.5,331.9 871.8,340.0 867.5,348.5 863.5,357.2 859.7,366.2 856.3,375.4 853.3,385.0 850.5,394.7 848.1,404.7 846.0,414.9 844.3,425.3 842.9,435.9 841.8,446.6 841.1,457.5 840.7,468.4 840.7,479.6 841.0,490.8 841.7,502.0 842.7,513.4 844.1,524.8 845.8,536.2 847.8,547.6 850.2,559.0 852.9,570.3 856.0,581.7 859.3,592.9 863.0,604.1 867.0,615.2 871.3,626.1 875.9,637.0 880.8,647.7 886.0,658.2 891.5,668.5 897.2,678.7 903.2,688.6 909.4,698.3 915.9,707.7 922.6,716.9 929.5,725.8 936.7,734.5 944.0,742.8 951.6,750.8 959.3,758.5 967.1,765.9 975.2,772.9 983.3,779.6 991.6,785.9 1000.0,791.8 1008.5,797.3 1017.1,802.4 1025.8,807.1 1034.5,811.4 1043.3,815.3 1052.1,818.8 1061.0,821.8 1069.8,824.4 1078.6,826.6 1087.5,828.3 1096.2,829.6 1105.0,830.4 1113.7,830.8 1122.3,830.8 1130.8,830.3 1139.2,829.3 1147.5,827.9 1155.7,826.1 1163.7,823.8" fill="#000"/></g></mask><clipPath id="c3"><polygon points="1171.6,821.0 1179.3,817.9 1186.9,814.3 1194.2,810.3 1201.4,805.9 1208.4,801.0 1215.1,795.8 1221.6,790.2 1227.9,784.2 1233.9,777.8 1239.7,771.0 1245.1,763.9 1250.4,756.5 1255.3,748.7 1259.9,740.5 1264.3,732.1 1268.3,723.4 1272.0,714.4 1275.4,705.1 1278.5,695.6 1281.2,685.9 1283.7,675.9 1285.8,665.7 1287.5,655.3 1288.9,644.7 1290.0,634.0 1290.7,623.1 1291.0,612.1 1291.1,601.0 1290.7,589.8 1290.1,578.5 1289.0,567.2 1287.7,555.8 1286.0,544.4 1283.9,533.0 1281.5,521.6 1278.8,510.3 1275.8,498.9 1272.4,487.7 1268.7,476.5 1264.7,465.4 1260.4,454.4 1255.8,443.6 1250.9,432.9 1245.7,422.4 1240.3,412.1 1234.6,401.9 1228.6,392.0 1222.3,382.3 1215.9,372.9 1209.1,363.7 1202.2,354.7 1195.1,346.1 1187.7,337.8 1180.2,329.8 1172.5,322.1 1164.6,314.7 1156.6,307.7 1148.4,301.0 1140.1,294.7 1131.7,288.8 1123.2,283.3 1114.6,278.2 1106.0,273.5 1097.2,269.1 1088.4,265.3 1079.6,261.8 1070.8,258.7 1062.0,256.1 1053.1,254.0 1044.3,252.3 1035.5,251.0 1026.8,250.1 1018.1,249.8 1009.5,249.8 1001.0,250.3 992.6,251.3 984.3,252.7 976.1,254.5 968.0,256.8 960.2,259.5 952.4,262.7 944.9,266.3 937.5,270.3 930.3,274.7 923.4,279.5 916.7,284.8 910.1,290.4 903.9,296.4 897.9,302.8 892.1,309.6 886.6,316.7 881.4,324.1 876.5,331.9 871.8,340.0 867.5,348.5 863.5,357.2 859.7,366.2 856.3,375.4 853.3,385.0 850.5,394.7 848.1,404.7 846.0,414.9 844.3,425.3 842.9,435.9 841.8,446.6 841.1,457.5 840.7,468.4 840.7,479.6 841.0,490.8 841.7,502.0 842.7,513.4 844.1,524.8 845.8,536.2 847.8,547.6 850.2,559.0 852.9,570.3 856.0,581.7 859.3,592.9 863.0,604.1 867.0,615.2 871.3,626.1 875.9,637.0 880.8,647.7 886.0,658.2 891.5,668.5 897.2,678.7 903.2,688.6 909.4,698.3 915.9,707.7 922.6,716.9 929.5,725.8 936.7,734.5 944.0,742.8 951.6,750.8 959.3,758.5 967.1,765.9 975.2,772.9 983.3,779.6 991.6,785.9 1000.0,791.8 1008.5,797.3 1017.1,802.4 1025.8,807.1 1034.5,811.4 1043.3,815.3 1052.1,818.8 1061.0,821.8 1069.8,824.4 1078.6,826.6 1087.5,828.3 1096.2,829.6 1105.0,830.4 1113.7,830.8 1122.3,830.8 1130.8,830.3 1139.2,829.3 1147.5,827.9 1155.7,826.1 1163.7,823.8"/></clipPath><clipPath id="c4"><polygon points="1171.6,821.0 1179.3,817.9 1186.9,814.3 1194.2,810.3 1201.4,805.9 1208.4,801.0 1215.1,795.8 1221.6,790.2 1227.9,784.2 1233.9,777.8 1239.7,771.0 1245.1,763.9 1250.4,756.5 1255.3,748.7 1259.9,740.5 1264.3,732.1 1268.3,723.4 1272.0,714.4 1275.4,705.1 1278.5,695.6 1281.2,685.9 1283.7,675.9 1285.8,665.7 1287.5,655.3 1288.9,644.7 1290.0,634.0 1290.7,623.1 1291.0,612.1 1291.1,601.0 1290.7,589.8 1290.1,578.5 1289.0,567.2 1287.7,555.8 1286.0,544.4 1283.9,533.0 1281.5,521.6 1278.8,510.3 1275.8,498.9 1272.4,487.7 1268.7,476.5 1264.7,465.4 1260.4,454.4 1255.8,443.6 1250.9,432.9 1245.7,422.4 1240.3,412.1 1234.6,401.9 1228.6,392.0 1222.3,382.3 1215.9,372.9 1209.1,363.7 1202.2,354.7 1195.1,346.1 1187.7,337.8 1180.2,329.8 1172.5,322.1 1164.6,314.7 1156.6,307.7 1148.4,301.0 1140.1,294.7 1131.7,288.8 1123.2,283.3 1114.6,278.2 1106.0,273.5 1097.2,269.1 1088.4,265.3 1079.6,261.8 1070.8,258.7 1062.0,256.1 1053.1,254.0 1044.3,252.3 1035.5,251.0 1026.8,250.1 1018.1,249.8 1009.5,249.8 1001.0,250.3 992.6,251.3 984.3,252.7 976.1,254.5 968.0,256.8 960.2,259.5 952.4,262.7 944.9,266.3 937.5,270.3 930.3,274.7 923.4,279.5 916.7,284.8 910.1,290.4 903.9,296.4 897.9,302.8 892.1,309.6 886.6,316.7 881.4,324.1 876.5,331.9 871.8,340.0 867.5,348.5 863.5,357.2 859.7,366.2 856.3,375.4 853.3,385.0 850.5,394.7 848.1,404.7 846.0,414.9 844.3,425.3 842.9,435.9 841.8,446.6 841.1,457.5 840.7,468.4 840.7,479.6 841.0,490.8 841.7,502.0 842.7,513.4 844.1,524.8 845.8,536.2 847.8,547.6 850.2,559.0 852.9,570.3 856.0,581.7 859.3,592.9 863.0,604.1 867.0,615.2 871.3,626.1 875.9,637.0 880.8,647.7 886.0,658.2 891.5,668.5 897.2,678.7 903.2,688.6 909.4,698.3 915.9,707.7 922.6,716.9 929.5,725.8 936.7,734.5 944.0,742.8 951.6,750.8 959.3,758.5 967.1,765.9 975.2,772.9 983.3,779.6 991.6,785.9 1000.0,791.8 1008.5,797.3 1017.1,802.4 1025.8,807.1 1034.5,811.4 1043.3,815.3 1052.1,818.8 1061.0,821.8 1069.8,824.4 1078.6,826.6 1087.5,828.3 1096.2,829.6 1105.0,830.4 1113.7,830.8 1122.3,830.8 1130.8,830.3 1139.2,829.3 1147.5,827.9 1155.7,826.1 1163.7,823.8"/></clipPath><clipPath id="c5"><polygon points="1172.2,689.4 1177.1,687.4 1181.8,685.2 1186.4,682.6 1190.9,679.9 1195.3,676.8 1199.5,673.6 1203.6,670.0 1207.5,666.3 1211.3,662.3 1214.9,658.0 1218.3,653.6 1221.6,648.9 1224.7,644.0 1227.6,638.9 1230.3,633.7 1232.8,628.2 1235.2,622.6 1237.3,616.7 1239.2,610.8 1241.0,604.7 1242.5,598.4 1243.8,592.0 1244.9,585.5 1245.7,578.9 1246.4,572.2 1246.9,565.4 1247.1,558.5 1247.1,551.5 1246.9,544.5 1246.5,537.4 1245.8,530.3 1245.0,523.2 1243.9,516.0 1242.6,508.9 1241.1,501.7 1239.4,494.6 1237.5,487.5 1235.4,480.5 1233.1,473.5 1230.6,466.5 1227.9,459.6 1225.0,452.8 1222.0,446.2 1218.7,439.6 1215.3,433.1 1211.7,426.7 1207.9,420.5 1204.0,414.4 1200.0,408.5 1195.8,402.8 1191.4,397.2 1186.9,391.7 1182.3,386.5 1177.6,381.5 1172.8,376.7 1167.9,372.1 1162.8,367.7 1157.7,363.5 1152.5,359.5 1147.3,355.8 1141.9,352.4 1136.5,349.2 1131.1,346.2 1125.6,343.5 1120.1,341.1 1114.6,338.9 1109.1,337.0 1103.5,335.4 1098.0,334.0 1092.5,332.9 1087.0,332.1 1081.5,331.6 1076.0,331.4 1070.7,331.4 1065.3,331.7 1060.0,332.3 1054.8,333.2 1049.7,334.4 1044.7,335.8 1039.7,337.5 1034.9,339.5 1030.2,341.7 1025.5,344.2 1021.1,347.0 1016.7,350.0 1012.5,353.3 1008.4,356.8 1004.5,360.6 1000.7,364.6 997.1,368.8 993.6,373.3 990.4,378.0 987.3,382.9 984.4,387.9 981.7,393.2 979.1,398.7 976.8,404.3 974.7,410.1 972.7,416.1 971.0,422.2 969.5,428.5 968.2,434.9 967.1,441.4 966.2,448.0 965.6,454.7 965.1,461.5 964.9,468.4 964.9,475.4 965.1,482.4 965.5,489.5 966.1,496.6 967.0,503.7 968.1,510.8 969.3,518.0 970.8,525.1 972.5,532.3 974.4,539.4 976.6,546.4 978.9,553.4 981.4,560.4 984.1,567.2 986.9,574.0 990.0,580.7 993.3,587.3 996.7,593.8 1000.3,600.1 1004.0,606.4 1007.9,612.4 1012.0,618.4 1016.2,624.1 1020.6,629.7 1025.0,635.1 1029.6,640.3 1034.3,645.4 1039.2,650.2 1044.1,654.8 1049.1,659.2 1054.3,663.4 1059.4,667.3 1064.7,671.0 1070.0,674.5 1075.4,677.7 1080.9,680.7 1086.3,683.4 1091.8,685.8 1097.4,688.0 1102.9,689.9 1108.4,691.5 1114.0,692.9 1119.5,693.9 1125.0,694.7 1130.5,695.3 1135.9,695.5 1141.3,695.5 1146.7,695.1 1151.9,694.6 1157.1,693.7 1162.3,692.5 1167.3,691.1"/></clipPath><mask id="m6" maskUnits="userSpaceOnUse" x="0" y="0" width="1920" height="1040"><rect x="0" y="0" width="1920" height="1040" fill="#fff"/><g clip-path="url(#c5)"><polygon points="1128.3,705.9 1133.1,704.0 1137.8,701.7 1142.4,699.2 1146.9,696.4 1151.3,693.4 1155.5,690.1 1159.6,686.6 1163.5,682.8 1167.3,678.8 1170.9,674.6 1174.3,670.1 1177.6,665.5 1180.7,660.6 1183.6,655.5 1186.3,650.2 1188.8,644.8 1191.2,639.1 1193.3,633.3 1195.2,627.3 1197.0,621.2 1198.5,615.0 1199.8,608.6 1200.9,602.1 1201.8,595.4 1202.4,588.7 1202.9,581.9 1203.1,575.0 1203.1,568.1 1202.9,561.0 1202.5,554.0 1201.8,546.9 1201.0,539.7 1199.9,532.6 1198.6,525.4 1197.1,518.3 1195.4,511.2 1193.5,504.1 1191.4,497.0 1189.1,490.0 1186.6,483.1 1183.9,476.2 1181.0,469.4 1178.0,462.7 1174.7,456.1 1171.3,449.7 1167.7,443.3 1164.0,437.1 1160.0,431.0 1156.0,425.1 1151.8,419.3 1147.4,413.7 1143.0,408.3 1138.4,403.1 1133.6,398.1 1128.8,393.2 1123.9,388.6 1118.8,384.2 1113.7,380.1 1108.5,376.1 1103.3,372.4 1097.9,368.9 1092.6,365.7 1087.1,362.8 1081.6,360.1 1076.1,357.6 1070.6,355.5 1065.1,353.6 1059.5,351.9 1054.0,350.6 1048.5,349.5 1043.0,348.7 1037.5,348.2 1032.1,347.9 1026.7,348.0 1021.3,348.3 1016.1,348.9 1010.9,349.8 1005.7,350.9 1000.7,352.4 995.7,354.1 990.9,356.0 986.2,358.3 981.6,360.8 977.1,363.6 972.7,366.6 968.5,369.9 964.4,373.4 960.5,377.2 956.7,381.2 953.1,385.4 949.7,389.9 946.4,394.5 943.3,399.4 940.4,404.5 937.7,409.8 935.2,415.2 932.8,420.9 930.7,426.7 928.8,432.7 927.0,438.8 925.5,445.0 924.2,451.4 923.1,457.9 922.2,464.6 921.6,471.3 921.1,478.1 920.9,485.0 920.9,491.9 921.1,499.0 921.5,506.0 922.2,513.1 923.0,520.3 924.1,527.4 925.4,534.6 926.9,541.7 928.6,548.8 930.5,555.9 932.6,563.0 934.9,570.0 937.4,576.9 940.1,583.8 943.0,590.6 946.0,597.3 949.3,603.9 952.7,610.3 956.3,616.7 960.0,622.9 964.0,629.0 968.0,634.9 972.2,640.7 976.6,646.3 981.0,651.7 985.6,656.9 990.4,661.9 995.2,666.8 1000.1,671.4 1005.2,675.8 1010.3,679.9 1015.5,683.9 1020.7,687.6 1026.1,691.1 1031.4,694.3 1036.9,697.2 1042.4,699.9 1047.9,702.4 1053.4,704.5 1058.9,706.4 1064.5,708.1 1070.0,709.4 1075.5,710.5 1081.0,711.3 1086.5,711.8 1091.9,712.1 1097.3,712.0 1102.7,711.7 1107.9,711.1 1113.1,710.2 1118.3,709.1 1123.3,707.6" fill="#000"/></g></mask><clipPath id="c7"><polygon points="1171.6,821.0 1179.3,817.9 1186.9,814.3 1194.2,810.3 1201.4,805.9 1208.4,801.0 1215.1,795.8 1221.6,790.2 1227.9,784.2 1233.9,777.8 1239.7,771.0 1245.1,763.9 1250.4,756.5 1255.3,748.7 1259.9,740.5 1264.3,732.1 1268.3,723.4 1272.0,714.4 1275.4,705.1 1278.5,695.6 1281.2,685.9 1283.7,675.9 1285.8,665.7 1287.5,655.3 1288.9,644.7 1290.0,634.0 1290.7,623.1 1291.0,612.1 1291.1,601.0 1290.7,589.8 1290.1,578.5 1289.0,567.2 1287.7,555.8 1286.0,544.4 1283.9,533.0 1281.5,521.6 1278.8,510.3 1275.8,498.9 1272.4,487.7 1268.7,476.5 1264.7,465.4 1260.4,454.4 1255.8,443.6 1250.9,432.9 1245.7,422.4 1240.3,412.1 1234.6,401.9 1228.6,392.0 1222.3,382.3 1215.9,372.9 1209.1,363.7 1202.2,354.7 1195.1,346.1 1187.7,337.8 1180.2,329.8 1172.5,322.1 1164.6,314.7 1156.6,307.7 1148.4,301.0 1140.1,294.7 1131.7,288.8 1123.2,283.3 1114.6,278.2 1106.0,273.5 1097.2,269.1 1088.4,265.3 1079.6,261.8 1070.8,258.7 1062.0,256.1 1053.1,254.0 1044.3,252.3 1035.5,251.0 1026.8,250.1 1018.1,249.8 1009.5,249.8 1001.0,250.3 992.6,251.3 984.3,252.7 976.1,254.5 968.0,256.8 960.2,259.5 952.4,262.7 944.9,266.3 937.5,270.3 930.3,274.7 923.4,279.5 916.7,284.8 910.1,290.4 903.9,296.4 897.9,302.8 892.1,309.6 886.6,316.7 881.4,324.1 876.5,331.9 871.8,340.0 867.5,348.5 863.5,357.2 859.7,366.2 856.3,375.4 853.3,385.0 850.5,394.7 848.1,404.7 846.0,414.9 844.3,425.3 842.9,435.9 841.8,446.6 841.1,457.5 840.7,468.4 840.7,479.6 841.0,490.8 841.7,502.0 842.7,513.4 844.1,524.8 845.8,536.2 847.8,547.6 850.2,559.0 852.9,570.3 856.0,581.7 859.3,592.9 863.0,604.1 867.0,615.2 871.3,626.1 875.9,637.0 880.8,647.7 886.0,658.2 891.5,668.5 897.2,678.7 903.2,688.6 909.4,698.3 915.9,707.7 922.6,716.9 929.5,725.8 936.7,734.5 944.0,742.8 951.6,750.8 959.3,758.5 967.1,765.9 975.2,772.9 983.3,779.6 991.6,785.9 1000.0,791.8 1008.5,797.3 1017.1,802.4 1025.8,807.1 1034.5,811.4 1043.3,815.3 1052.1,818.8 1061.0,821.8 1069.8,824.4 1078.6,826.6 1087.5,828.3 1096.2,829.6 1105.0,830.4 1113.7,830.8 1122.3,830.8 1130.8,830.3 1139.2,829.3 1147.5,827.9 1155.7,826.1 1163.7,823.8"/></clipPath><mask id="m8" maskUnits="userSpaceOnUse" x="0" y="0" width="1920" height="1040"><rect x="0" y="0" width="1920" height="1040" fill="#fff"/><g clip-path="url(#c7)"><polygon points="1112.5,797.4 1119.4,794.6 1126.1,791.3 1132.7,787.8 1139.1,783.8 1145.3,779.5 1151.3,774.8 1157.1,769.8 1162.7,764.4 1168.1,758.7 1173.3,752.7 1178.2,746.3 1182.8,739.7 1187.2,732.7 1191.4,725.5 1195.2,717.9 1198.8,710.1 1202.2,702.1 1205.2,693.8 1208.0,685.3 1210.4,676.6 1212.6,667.7 1214.4,658.6 1216.0,649.3 1217.2,639.9 1218.2,630.3 1218.8,620.6 1219.2,610.7 1219.2,600.8 1218.9,590.8 1218.3,580.7 1217.4,570.6 1216.2,560.4 1214.6,550.3 1212.8,540.1 1210.7,529.9 1208.2,519.7 1205.5,509.6 1202.5,499.6 1199.2,489.6 1195.7,479.7 1191.8,469.9 1187.7,460.2 1183.3,450.7 1178.7,441.3 1173.8,432.0 1168.7,423.0 1163.4,414.1 1157.8,405.4 1152.0,397.0 1146.0,388.8 1139.8,380.8 1133.4,373.1 1126.9,365.6 1120.1,358.5 1113.3,351.6 1106.2,345.0 1099.1,338.8 1091.8,332.8 1084.4,327.2 1076.8,321.9 1069.2,317.0 1061.6,312.4 1053.8,308.2 1046.0,304.3 1038.2,300.9 1030.3,297.8 1022.4,295.0 1014.5,292.7 1006.6,290.8 998.7,289.2 990.9,288.1 983.1,287.4 975.3,287.0 967.6,287.1 960.0,287.5 952.5,288.4 945.1,289.6 937.8,291.3 930.6,293.3 923.6,295.8 916.7,298.6 909.9,301.8 903.3,305.4 896.9,309.3 890.7,313.6 884.7,318.3 878.9,323.3 873.3,328.7 867.9,334.4 862.8,340.4 857.9,346.8 853.2,353.5 848.8,360.4 844.7,367.7 840.8,375.2 837.2,383.0 833.9,391.0 830.8,399.3 828.1,407.8 825.6,416.5 823.5,425.4 821.6,434.5 820.0,443.8 818.8,453.3 817.8,462.8 817.2,472.6 816.9,482.4 816.9,492.3 817.1,502.3 817.7,512.4 818.7,522.5 819.9,532.7 821.4,542.9 823.2,553.1 825.4,563.2 827.8,573.4 830.5,583.5 833.5,593.6 836.8,603.6 840.4,613.5 844.2,623.3 848.3,632.9 852.7,642.5 857.3,651.9 862.2,661.1 867.3,670.2 872.7,679.0 878.2,687.7 884.0,696.1 890.0,704.3 896.2,712.3 902.6,720.0 909.2,727.5 915.9,734.6 922.8,741.5 929.8,748.1 937.0,754.4 944.3,760.3 951.7,765.9 959.2,771.2 966.8,776.1 974.5,780.7 982.2,784.9 990.0,788.8 997.9,792.3 1005.7,795.4 1013.6,798.1 1021.5,800.4 1029.4,802.3 1037.3,803.9 1045.1,805.0 1052.9,805.8 1060.7,806.1 1068.4,806.1 1076.0,805.6 1083.5,804.7 1090.9,803.5 1098.2,801.8 1105.4,799.8" fill="#000"/></g></mask><clipPath id="c9"><polygon points="1112.5,797.4 1119.4,794.6 1126.1,791.3 1132.7,787.8 1139.1,783.8 1145.3,779.5 1151.3,774.8 1157.1,769.8 1162.7,764.4 1168.1,758.7 1173.3,752.7 1178.2,746.3 1182.8,739.7 1187.2,732.7 1191.4,725.5 1195.2,717.9 1198.8,710.1 1202.2,702.1 1205.2,693.8 1208.0,685.3 1210.4,676.6 1212.6,667.7 1214.4,658.6 1216.0,649.3 1217.2,639.9 1218.2,630.3 1218.8,620.6 1219.2,610.7 1219.2,600.8 1218.9,590.8 1218.3,580.7 1217.4,570.6 1216.2,560.4 1214.6,550.3 1212.8,540.1 1210.7,529.9 1208.2,519.7 1205.5,509.6 1202.5,499.6 1199.2,489.6 1195.7,479.7 1191.8,469.9 1187.7,460.2 1183.3,450.7 1178.7,441.3 1173.8,432.0 1168.7,423.0 1163.4,414.1 1157.8,405.4 1152.0,397.0 1146.0,388.8 1139.8,380.8 1133.4,373.1 1126.9,365.6 1120.1,358.5 1113.3,351.6 1106.2,345.0 1099.1,338.8 1091.8,332.8 1084.4,327.2 1076.8,321.9 1069.2,317.0 1061.6,312.4 1053.8,308.2 1046.0,304.3 1038.2,300.9 1030.3,297.8 1022.4,295.0 1014.5,292.7 1006.6,290.8 998.7,289.2 990.9,288.1 983.1,287.4 975.3,287.0 967.6,287.1 960.0,287.5 952.5,288.4 945.1,289.6 937.8,291.3 930.6,293.3 923.6,295.8 916.7,298.6 909.9,301.8 903.3,305.4 896.9,309.3 890.7,313.6 884.7,318.3 878.9,323.3 873.3,328.7 867.9,334.4 862.8,340.4 857.9,346.8 853.2,353.5 848.8,360.4 844.7,367.7 840.8,375.2 837.2,383.0 833.9,391.0 830.8,399.3 828.1,407.8 825.6,416.5 823.5,425.4 821.6,434.5 820.0,443.8 818.8,453.3 817.8,462.8 817.2,472.6 816.9,482.4 816.9,492.3 817.1,502.3 817.7,512.4 818.7,522.5 819.9,532.7 821.4,542.9 823.2,553.1 825.4,563.2 827.8,573.4 830.5,583.5 833.5,593.6 836.8,603.6 840.4,613.5 844.2,623.3 848.3,632.9 852.7,642.5 857.3,651.9 862.2,661.1 867.3,670.2 872.7,679.0 878.2,687.7 884.0,696.1 890.0,704.3 896.2,712.3 902.6,720.0 909.2,727.5 915.9,734.6 922.8,741.5 929.8,748.1 937.0,754.4 944.3,760.3 951.7,765.9 959.2,771.2 966.8,776.1 974.5,780.7 982.2,784.9 990.0,788.8 997.9,792.3 1005.7,795.4 1013.6,798.1 1021.5,800.4 1029.4,802.3 1037.3,803.9 1045.1,805.0 1052.9,805.8 1060.7,806.1 1068.4,806.1 1076.0,805.6 1083.5,804.7 1090.9,803.5 1098.2,801.8 1105.4,799.8"/></clipPath><clipPath id="c10"><polygon points="1128.3,705.9 1133.1,704.0 1137.8,701.7 1142.4,699.2 1146.9,696.4 1151.3,693.4 1155.5,690.1 1159.6,686.6 1163.5,682.8 1167.3,678.8 1170.9,674.6 1174.3,670.1 1177.6,665.5 1180.7,660.6 1183.6,655.5 1186.3,650.2 1188.8,644.8 1191.2,639.1 1193.3,633.3 1195.2,627.3 1197.0,621.2 1198.5,615.0 1199.8,608.6 1200.9,602.1 1201.8,595.4 1202.4,588.7 1202.9,581.9 1203.1,575.0 1203.1,568.1 1202.9,561.0 1202.5,554.0 1201.8,546.9 1201.0,539.7 1199.9,532.6 1198.6,525.4 1197.1,518.3 1195.4,511.2 1193.5,504.1 1191.4,497.0 1189.1,490.0 1186.6,483.1 1183.9,476.2 1181.0,469.4 1178.0,462.7 1174.7,456.1 1171.3,449.7 1167.7,443.3 1164.0,437.1 1160.0,431.0 1156.0,425.1 1151.8,419.3 1147.4,413.7 1143.0,408.3 1138.4,403.1 1133.6,398.1 1128.8,393.2 1123.9,388.6 1118.8,384.2 1113.7,380.1 1108.5,376.1 1103.3,372.4 1097.9,368.9 1092.6,365.7 1087.1,362.8 1081.6,360.1 1076.1,357.6 1070.6,355.5 1065.1,353.6 1059.5,351.9 1054.0,350.6 1048.5,349.5 1043.0,348.7 1037.5,348.2 1032.1,347.9 1026.7,348.0 1021.3,348.3 1016.1,348.9 1010.9,349.8 1005.7,350.9 1000.7,352.4 995.7,354.1 990.9,356.0 986.2,358.3 981.6,360.8 977.1,363.6 972.7,366.6 968.5,369.9 964.4,373.4 960.5,377.2 956.7,381.2 953.1,385.4 949.7,389.9 946.4,394.5 943.3,399.4 940.4,404.5 937.7,409.8 935.2,415.2 932.8,420.9 930.7,426.7 928.8,432.7 927.0,438.8 925.5,445.0 924.2,451.4 923.1,457.9 922.2,464.6 921.6,471.3 921.1,478.1 920.9,485.0 920.9,491.9 921.1,499.0 921.5,506.0 922.2,513.1 923.0,520.3 924.1,527.4 925.4,534.6 926.9,541.7 928.6,548.8 930.5,555.9 932.6,563.0 934.9,570.0 937.4,576.9 940.1,583.8 943.0,590.6 946.0,597.3 949.3,603.9 952.7,610.3 956.3,616.7 960.0,622.9 964.0,629.0 968.0,634.9 972.2,640.7 976.6,646.3 981.0,651.7 985.6,656.9 990.4,661.9 995.2,666.8 1000.1,671.4 1005.2,675.8 1010.3,679.9 1015.5,683.9 1020.7,687.6 1026.1,691.1 1031.4,694.3 1036.9,697.2 1042.4,699.9 1047.9,702.4 1053.4,704.5 1058.9,706.4 1064.5,708.1 1070.0,709.4 1075.5,710.5 1081.0,711.3 1086.5,711.8 1091.9,712.1 1097.3,712.0 1102.7,711.7 1107.9,711.1 1113.1,710.2 1118.3,709.1 1123.3,707.6"/></clipPath><mask id="m11" maskUnits="userSpaceOnUse" x="0" y="0" width="1920" height="1040"><rect x="0" y="0" width="1920" height="1040" fill="#fff"/><g clip-path="url(#c10)"><polygon points="1084.3,722.5 1089.1,720.5 1093.8,718.3 1098.5,715.8 1102.9,713.0 1107.3,710.0 1111.5,706.7 1115.6,703.2 1119.5,699.4 1123.3,695.4 1126.9,691.2 1130.4,686.7 1133.6,682.0 1136.7,677.1 1139.6,672.1 1142.3,666.8 1144.9,661.3 1147.2,655.7 1149.3,649.9 1151.3,643.9 1153.0,637.8 1154.5,631.5 1155.8,625.1 1156.9,618.6 1157.8,612.0 1158.4,605.3 1158.9,598.5 1159.1,591.6 1159.1,584.6 1158.9,577.6 1158.5,570.5 1157.9,563.4 1157.0,556.3 1155.9,549.2 1154.7,542.0 1153.2,534.9 1151.5,527.7 1149.6,520.6 1147.4,513.6 1145.1,506.6 1142.6,499.6 1139.9,492.8 1137.1,486.0 1134.0,479.3 1130.7,472.7 1127.3,466.2 1123.7,459.9 1120.0,453.6 1116.1,447.6 1112.0,441.6 1107.8,435.9 1103.4,430.3 1099.0,424.9 1094.4,419.7 1089.7,414.6 1084.8,409.8 1079.9,405.2 1074.9,400.8 1069.7,396.6 1064.6,392.7 1059.3,389.0 1054.0,385.5 1048.6,382.3 1043.1,379.3 1037.7,376.6 1032.2,374.2 1026.6,372.0 1021.1,370.1 1015.6,368.5 1010.0,367.1 1004.5,366.1 999.0,365.3 993.5,364.7 988.1,364.5 982.7,364.5 977.3,364.9 972.1,365.4 966.9,366.3 961.7,367.5 956.7,368.9 951.8,370.6 946.9,372.6 942.2,374.8 937.6,377.4 933.1,380.1 928.7,383.2 924.5,386.4 920.4,390.0 916.5,393.7 912.7,397.7 909.1,402.0 905.7,406.4 902.4,411.1 899.3,416.0 896.4,421.1 893.7,426.3 891.2,431.8 888.8,437.4 886.7,443.3 884.8,449.2 883.0,455.3 881.5,461.6 880.2,468.0 879.1,474.5 878.3,481.1 877.6,487.8 877.1,494.6 876.9,501.5 876.9,508.5 877.1,515.5 877.5,522.6 878.2,529.7 879.0,536.8 880.1,544.0 881.4,551.1 882.9,558.3 884.6,565.4 886.5,572.5 888.6,579.5 890.9,586.5 893.4,593.5 896.1,600.4 899.0,607.2 902.0,613.8 905.3,620.4 908.7,626.9 912.3,633.3 916.1,639.5 920.0,645.6 924.0,651.5 928.2,657.2 932.6,662.8 937.1,668.3 941.7,673.5 946.4,678.5 951.2,683.3 956.1,687.9 961.2,692.3 966.3,696.5 971.5,700.5 976.7,704.2 982.1,707.6 987.5,710.8 992.9,713.8 998.4,716.5 1003.9,718.9 1009.4,721.1 1014.9,723.0 1020.5,724.6 1026.0,726.0 1031.5,727.1 1037.0,727.9 1042.5,728.4 1048.0,728.6 1053.3,728.6 1058.7,728.3 1064.0,727.7 1069.2,726.8 1074.3,725.6 1079.3,724.2" fill="#000"/></g></mask><clipPath id="c12"><polygon points="1112.5,797.4 1119.4,794.6 1126.1,791.3 1132.7,787.8 1139.1,783.8 1145.3,779.5 1151.3,774.8 1157.1,769.8 1162.7,764.4 1168.1,758.7 1173.3,752.7 1178.2,746.3 1182.8,739.7 1187.2,732.7 1191.4,725.5 1195.2,717.9 1198.8,710.1 1202.2,702.1 1205.2,693.8 1208.0,685.3 1210.4,676.6 1212.6,667.7 1214.4,658.6 1216.0,649.3 1217.2,639.9 1218.2,630.3 1218.8,620.6 1219.2,610.7 1219.2,600.8 1218.9,590.8 1218.3,580.7 1217.4,570.6 1216.2,560.4 1214.6,550.3 1212.8,540.1 1210.7,529.9 1208.2,519.7 1205.5,509.6 1202.5,499.6 1199.2,489.6 1195.7,479.7 1191.8,469.9 1187.7,460.2 1183.3,450.7 1178.7,441.3 1173.8,432.0 1168.7,423.0 1163.4,414.1 1157.8,405.4 1152.0,397.0 1146.0,388.8 1139.8,380.8 1133.4,373.1 1126.9,365.6 1120.1,358.5 1113.3,351.6 1106.2,345.0 1099.1,338.8 1091.8,332.8 1084.4,327.2 1076.8,321.9 1069.2,317.0 1061.6,312.4 1053.8,308.2 1046.0,304.3 1038.2,300.9 1030.3,297.8 1022.4,295.0 1014.5,292.7 1006.6,290.8 998.7,289.2 990.9,288.1 983.1,287.4 975.3,287.0 967.6,287.1 960.0,287.5 952.5,288.4 945.1,289.6 937.8,291.3 930.6,293.3 923.6,295.8 916.7,298.6 909.9,301.8 903.3,305.4 896.9,309.3 890.7,313.6 884.7,318.3 878.9,323.3 873.3,328.7 867.9,334.4 862.8,340.4 857.9,346.8 853.2,353.5 848.8,360.4 844.7,367.7 840.8,375.2 837.2,383.0 833.9,391.0 830.8,399.3 828.1,407.8 825.6,416.5 823.5,425.4 821.6,434.5 820.0,443.8 818.8,453.3 817.8,462.8 817.2,472.6 816.9,482.4 816.9,492.3 817.1,502.3 817.7,512.4 818.7,522.5 819.9,532.7 821.4,542.9 823.2,553.1 825.4,563.2 827.8,573.4 830.5,583.5 833.5,593.6 836.8,603.6 840.4,613.5 844.2,623.3 848.3,632.9 852.7,642.5 857.3,651.9 862.2,661.1 867.3,670.2 872.7,679.0 878.2,687.7 884.0,696.1 890.0,704.3 896.2,712.3 902.6,720.0 909.2,727.5 915.9,734.6 922.8,741.5 929.8,748.1 937.0,754.4 944.3,760.3 951.7,765.9 959.2,771.2 966.8,776.1 974.5,780.7 982.2,784.9 990.0,788.8 997.9,792.3 1005.7,795.4 1013.6,798.1 1021.5,800.4 1029.4,802.3 1037.3,803.9 1045.1,805.0 1052.9,805.8 1060.7,806.1 1068.4,806.1 1076.0,805.6 1083.5,804.7 1090.9,803.5 1098.2,801.8 1105.4,799.8"/></clipPath><radialGradient id="gSph" gradientUnits="userSpaceOnUse" cx="1052" cy="515" r="55"><stop offset="0" stop-color="#8a8a8a"/><stop offset="1" stop-color="#4e4e4e"/></radialGradient></defs><g mask="url(#m2)"><polygon points="826.3,466.4 826.3,454.8 826.7,443.3 827.5,431.9 828.6,420.7 830.0,409.6 831.9,398.8 834.0,388.1 836.6,377.6 839.5,367.4 842.7,357.4 846.2,347.8 850.1,338.3 854.4,329.2 858.9,320.4 863.8,311.9 868.9,303.8 874.4,295.9 880.1,288.5 886.1,281.4 892.4,274.8 899.0,268.4 905.8,262.6 912.9,257.1 920.1,252.0 927.6,247.4 935.4,243.2 943.3,239.4 951.3,236.1 995.3,219.6 1003.6,216.7 1012.0,214.3 1020.6,212.4 1029.2,210.9 1038.1,209.9 1047.0,209.4 1056.0,209.3 1065.1,209.7 1074.2,210.6 1083.4,212.0 1092.6,213.8 1101.9,216.0 1111.1,218.8 1120.4,221.9 1129.6,225.6 1138.8,229.6 1147.9,234.1 1157.0,239.1 1166.0,244.4 1174.9,250.2 1183.7,256.4 1192.4,263.0 1200.9,270.0 1209.3,277.3 1217.6,285.0 1225.6,293.1 1233.5,301.5 1241.2,310.2 1248.7,319.2 1255.9,328.6 1263.0,338.2 1269.7,348.1 1276.3,358.2 1282.5,368.6 1288.5,379.2 1294.2,390.1 1299.7,401.1 1304.8,412.2 1309.6,423.6 1314.1,435.1 1318.3,446.6 1322.2,458.4 1325.7,470.1 1328.9,482.0 1331.7,493.9 1334.2,505.8 1336.3,517.8 1338.1,529.7 1339.6,541.6 1340.6,553.5 1341.3,565.3 1341.7,577.0 1341.7,588.6 1341.3,600.1 1340.5,611.5 1339.4,622.8 1338.0,633.8 1336.1,644.7 1333.9,655.4 1331.4,665.8 1328.5,676.0 1325.3,686.0 1321.7,695.7 1317.8,705.1 1313.6,714.2 1309.1,723.0 1304.2,731.5 1299.1,739.7 1293.6,747.5 1287.9,754.9 1281.8,762.0 1275.5,768.7 1269.0,775.0 1262.2,780.9 1255.1,786.4 1247.8,791.4 1240.3,796.0 1232.6,800.2 1224.7,804.0 1216.6,807.3 1172.7,823.9 1164.4,826.7 1156.0,829.1 1147.4,831.0 1138.7,832.5 1129.9,833.5 1121.0,834.0 1112.0,834.1 1102.9,833.7 1093.8,832.8 1084.6,831.5 1075.3,829.7 1066.1,827.4 1056.8,824.7 1047.6,821.5 1038.4,817.9 1029.2,813.8 1020.0,809.3 1011.0,804.4 1002.0,799.0 993.1,793.2 984.3,787.0 975.6,780.4 967.0,773.5 958.7,766.1 950.4,758.4 942.4,750.4 934.5,742.0 926.8,733.2 919.3,724.2 912.0,714.9 905.0,705.2 898.2,695.4 891.7,685.2 885.5,674.8 879.5,664.2 873.7,653.4 868.3,642.4 863.2,631.2 858.4,619.9 853.9,608.4 849.7,596.8 845.8,585.1 842.3,573.3 839.1,561.4 836.3,549.5 833.8,537.6 831.6,525.7 829.9,513.7 828.4,501.8 827.4,490.0 826.6,478.1" fill="url(#gOut)" stroke="url(#gOut)" stroke-width="1.2"/><polygon points="1172.7,823.9 1180.7,820.6 1188.6,816.8 1196.4,812.6 1203.9,808.0 1211.1,802.9 1218.2,797.4 1225.0,791.5 1231.6,785.3 1237.9,778.6 1243.9,771.5 1249.6,764.0 1255.1,756.2 1260.2,748.1 1265.1,739.6 1269.6,730.8 1273.9,721.7 1277.8,712.2 1281.3,702.5 1284.5,692.6 1287.4,682.4 1290.0,671.9 1292.1,661.2 1294.0,650.4 1295.4,639.3 1296.5,628.1 1297.3,616.7 1297.7,605.2 1297.7,593.6 1297.3,581.8 1296.6,570.0 1295.6,558.2 1294.1,546.3 1292.4,534.3 1290.2,522.4 1287.7,510.5 1284.9,498.6 1281.7,486.7 1278.2,474.9 1274.3,463.2 1270.1,451.6 1265.6,440.1 1260.8,428.8 1255.7,417.6 1250.3,406.6 1244.6,395.8 1238.6,385.2 1232.3,374.8 1225.8,364.7 1219.0,354.8 1211.9,345.1 1204.7,335.8 1197.2,326.8 1189.5,318.0 1181.6,309.6 1173.6,301.6 1165.3,293.9 1156.9,286.5 1148.4,279.6 1139.7,273.0 1130.9,266.8 1122.0,261.0 1113.0,255.6 1104.0,250.7 1094.8,246.2 1085.6,242.1 1076.4,238.5 1067.2,235.3 1057.9,232.6 1048.6,230.3 1039.4,228.5 1030.2,227.2 1021.1,226.3 1012.0,225.9 1003.0,226.0 994.1,226.5 985.3,227.5 976.6,229.0 968.0,230.9 959.6,233.3 951.3,236.1 943.3,239.4 935.4,243.2 927.6,247.4 920.1,252.0 912.9,257.1 905.8,262.6 899.0,268.5 892.4,274.7 886.1,281.4 880.1,288.5 874.4,296.0 868.9,303.8 863.8,311.9 858.9,320.4 854.4,329.2 850.1,338.3 846.2,347.8 842.7,357.5 839.5,367.4 836.6,377.6 834.0,388.1 831.9,398.8 830.0,409.6 828.6,420.7 827.5,431.9 826.7,443.3 826.3,454.8 826.3,466.4 826.7,478.2 827.4,490.0 828.4,501.8 829.9,513.7 831.6,525.7 833.8,537.6 836.3,549.5 839.1,561.4 842.3,573.3 845.8,585.1 849.7,596.8 853.9,608.4 858.4,619.9 863.2,631.2 868.3,642.4 873.7,653.4 879.4,664.2 885.4,674.8 891.7,685.2 898.2,695.3 905.0,705.2 912.1,714.9 919.3,724.2 926.8,733.2 934.5,742.0 942.4,750.4 950.4,758.4 958.7,766.1 967.1,773.5 975.6,780.4 984.3,787.0 993.1,793.2 1002.0,799.0 1011.0,804.4 1020.0,809.3 1029.2,813.8 1038.4,817.9 1047.6,821.5 1056.8,824.7 1066.1,827.4 1075.4,829.7 1084.6,831.5 1093.8,832.8 1102.9,833.7 1112.0,834.1 1121.0,834.0 1129.9,833.5 1138.7,832.5 1147.4,831.0 1156.0,829.1 1164.4,826.7" fill="url(#gCap)" /><polygon points="1171.6,821.0 1179.3,817.9 1186.9,814.3 1194.2,810.3 1201.4,805.9 1208.4,801.0 1215.1,795.8 1221.6,790.2 1227.9,784.2 1233.9,777.8 1239.7,771.0 1245.1,763.9 1250.4,756.5 1255.3,748.7 1259.9,740.5 1264.3,732.1 1268.3,723.4 1272.0,714.4 1275.4,705.1 1278.5,695.6 1281.2,685.9 1283.7,675.9 1285.8,665.7 1287.5,655.3 1288.9,644.7 1290.0,634.0 1290.7,623.1 1291.0,612.1 1291.1,601.0 1290.7,589.8 1290.1,578.5 1289.0,567.2 1287.7,555.8 1286.0,544.4 1283.9,533.0 1281.5,521.6 1278.8,510.3 1275.8,498.9 1272.4,487.7 1268.7,476.5 1264.7,465.4 1260.4,454.4 1255.8,443.6 1250.9,432.9 1245.7,422.4 1240.3,412.1 1234.6,401.9 1228.6,392.0 1222.3,382.3 1215.9,372.9 1209.1,363.7 1202.2,354.7 1195.1,346.1 1187.7,337.8 1180.2,329.8 1172.5,322.1 1164.6,314.7 1156.6,307.7 1148.4,301.0 1140.1,294.7 1131.7,288.8 1123.2,283.3 1114.6,278.2 1106.0,273.5 1097.2,269.1 1088.4,265.3 1079.6,261.8 1070.8,258.7 1062.0,256.1 1053.1,254.0 1044.3,252.3 1035.5,251.0 1026.8,250.1 1018.1,249.8 1009.5,249.8 1001.0,250.3 992.6,251.3 984.3,252.7 976.1,254.5 968.0,256.8 960.2,259.5 952.4,262.7 944.9,266.3 937.5,270.3 930.3,274.7 923.4,279.5 916.7,284.8 910.1,290.4 903.9,296.4 897.9,302.8 892.1,309.6 886.6,316.7 881.4,324.1 876.5,331.9 871.8,340.0 867.5,348.5 863.5,357.2 859.7,366.2 856.3,375.4 853.3,385.0 850.5,394.7 848.1,404.7 846.0,414.9 844.3,425.3 842.9,435.9 841.8,446.6 841.1,457.5 840.7,468.4 840.7,479.6 841.0,490.8 841.7,502.0 842.7,513.4 844.1,524.8 845.8,536.2 847.8,547.6 850.2,559.0 852.9,570.3 856.0,581.7 859.3,592.9 863.0,604.1 867.0,615.2 871.3,626.1 875.9,637.0 880.8,647.7 886.0,658.2 891.5,668.5 897.2,678.7 903.2,688.6 909.4,698.3 915.9,707.7 922.6,716.9 929.5,725.8 936.7,734.5 944.0,742.8 951.6,750.8 959.3,758.5 967.1,765.9 975.2,772.9 983.3,779.6 991.6,785.9 1000.0,791.8 1008.5,797.3 1017.1,802.4 1025.8,807.1 1034.5,811.4 1043.3,815.3 1052.1,818.8 1061.0,821.8 1069.8,824.4 1078.6,826.6 1087.5,828.3 1096.2,829.6 1105.0,830.4 1113.7,830.8 1122.3,830.8 1130.8,830.3 1139.2,829.3 1147.5,827.9 1155.7,826.1 1163.7,823.8" fill="#6b6b6b" /><g clip-path="url(#c3)"><polygon points="1183.9,796.9 1191.2,793.9 1198.5,790.4 1205.5,786.6 1212.3,782.4 1219.0,777.8 1225.4,772.8 1231.6,767.4 1237.6,761.7 1243.3,755.6 1248.8,749.1 1254.1,742.3 1259.1,735.2 1263.8,727.8 1268.2,720.0 1272.3,712.0 1276.2,703.7 1279.7,695.1 1283.0,686.2 1285.9,677.1 1288.5,667.8 1290.8,658.3 1292.8,648.6 1294.5,638.7 1295.8,628.6 1296.9,618.3 1297.5,607.9 1297.9,597.5 1297.9,586.8 1297.6,576.2 1296.9,565.4 1296.0,554.6 1294.7,543.7 1293.0,532.8 1291.1,521.9 1288.8,511.0 1286.2,500.2 1283.3,489.4 1280.1,478.6 1276.6,468.0 1272.8,457.4 1268.7,446.9 1264.3,436.6 1259.6,426.4 1254.6,416.3 1249.4,406.5 1244.0,396.8 1238.3,387.3 1232.3,378.1 1226.1,369.0 1219.7,360.3 1213.1,351.7 1206.3,343.5 1199.3,335.5 1192.1,327.9 1184.7,320.5 1177.2,313.5 1169.5,306.8 1161.7,300.4 1153.8,294.4 1145.8,288.8 1137.7,283.5 1129.5,278.6 1121.2,274.1 1112.9,270.0 1104.5,266.3 1096.1,263.0 1087.6,260.1 1079.2,257.6 1070.8,255.5 1062.3,253.9 1054.0,252.7 1045.6,251.9 1037.3,251.5 1029.1,251.6 1021.0,252.1 1013.0,253.0 1005.0,254.3 997.2,256.1 989.5,258.3 982.0,260.9 974.6,263.9 967.4,267.3 960.4,271.1 953.6,275.3 946.9,280.0 940.5,284.9 934.3,290.3 928.3,296.1 922.6,302.2 917.1,308.6 911.8,315.4 906.8,322.5 902.1,330.0 897.7,337.7 893.6,345.7 889.7,354.1 886.2,362.6 882.9,371.5 880.0,380.6 877.3,389.9 875.0,399.4 873.0,409.2 871.4,419.1 870.0,429.2 869.0,439.4 868.4,449.8 868.0,460.3 868.0,470.9 868.3,481.6 868.9,492.3 869.9,503.2 871.2,514.0 872.8,524.9 874.8,535.8 877.1,546.7 879.7,557.5 882.6,568.4 885.8,579.1 889.3,589.8 893.1,600.4 897.2,610.8 901.6,621.2 906.3,631.4 911.2,641.4 916.4,651.3 921.9,660.9 927.6,670.4 933.6,679.7 939.8,688.7 946.2,697.5 952.8,706.0 959.6,714.2 966.6,722.2 973.8,729.9 981.2,737.2 988.7,744.2 996.3,750.9 1004.1,757.3 1012.1,763.3 1020.1,768.9 1028.2,774.2 1036.4,779.1 1044.7,783.6 1053.0,787.7 1061.4,791.4 1069.8,794.7 1078.2,797.6 1086.7,800.1 1095.1,802.2 1103.5,803.8 1111.9,805.1 1120.3,805.8 1128.6,806.2 1136.8,806.2 1144.9,805.7 1152.9,804.8 1160.9,803.4 1168.7,801.7 1176.3,799.5" fill="#484848" /></g></g><g clip-path="url(#c4)"><g mask="url(#m6)"><polygon points="900.6,486.5 900.6,478.5 900.9,470.6 901.4,462.8 902.2,455.1 903.2,447.6 904.4,440.1 905.9,432.8 907.6,425.7 909.6,418.7 911.8,411.9 914.3,405.2 916.9,398.8 919.8,392.5 922.9,386.5 926.3,380.7 929.8,375.1 933.5,369.7 937.5,364.6 941.6,359.8 945.9,355.2 950.4,350.9 955.1,346.9 959.9,343.1 997.7,315.3 1003.0,311.6 1008.4,308.2 1014.0,305.2 1019.8,302.5 1025.6,300.1 1031.6,298.0 1037.7,296.3 1044.0,294.9 1050.3,293.8 1056.7,293.1 1063.1,292.7 1069.7,292.6 1076.3,292.9 1082.9,293.6 1089.6,294.5 1096.3,295.8 1103.0,297.5 1109.7,299.5 1116.4,301.8 1123.1,304.4 1129.8,307.4 1136.5,310.6 1143.0,314.2 1149.6,318.1 1156.0,322.3 1162.4,326.8 1168.7,331.6 1174.9,336.6 1181.0,342.0 1187.0,347.6 1192.9,353.4 1198.6,359.5 1204.2,365.9 1209.6,372.4 1214.9,379.2 1220.0,386.2 1224.9,393.4 1229.6,400.7 1234.2,408.3 1238.5,416.0 1242.7,423.9 1246.6,431.8 1250.3,440.0 1253.8,448.2 1257.1,456.5 1260.2,464.9 1263.0,473.4 1265.5,482.0 1267.8,490.6 1269.9,499.2 1271.7,507.9 1273.2,516.6 1274.5,525.2 1275.6,533.9 1276.4,542.5 1276.9,551.1 1277.1,559.6 1277.1,568.0 1276.8,576.4 1276.3,584.7 1275.5,592.8 1274.4,600.8 1273.1,608.7 1271.5,616.5 1269.7,624.1 1267.6,631.5 1265.2,638.7 1262.7,645.8 1259.8,652.6 1256.8,659.2 1253.5,665.6 1249.9,671.8 1246.2,677.7 1242.2,683.4 1238.0,688.8 1233.7,693.9 1229.1,698.8 1224.3,703.4 1219.4,707.6 1214.3,711.6 1209.0,715.3 1203.5,718.6 1197.9,721.7 1192.2,724.4 1186.3,726.8 1180.3,728.9 1174.2,730.6 1168.0,732.0 1161.7,733.1 1155.3,733.8 1108.5,737.8 1102.4,738.2 1096.2,738.2 1090.0,737.9 1083.8,737.4 1077.5,736.4 1071.1,735.2 1064.8,733.6 1058.5,731.8 1052.1,729.6 1045.8,727.1 1039.5,724.3 1033.3,721.2 1027.1,717.9 1020.9,714.2 1014.8,710.2 1008.8,706.0 1002.8,701.5 997.0,696.7 991.2,691.7 985.6,686.4 980.1,680.9 974.7,675.1 969.4,669.2 964.3,663.0 959.3,656.6 954.5,650.0 949.9,643.2 945.4,636.3 941.1,629.2 937.0,621.9 933.1,614.5 929.4,606.9 925.9,599.3 922.6,591.5 919.5,583.7 916.6,575.7 914.0,567.7 911.6,559.6 909.4,551.5 907.4,543.4 905.7,535.2 904.3,527.0 903.0,518.9 902.1,510.7 901.3,502.6 900.9,494.5" fill="url(#gOutI)" /><polygon points="1137.8,731.2 1143.3,728.9 1148.7,726.4 1154.0,723.5 1159.1,720.3 1164.1,716.9 1168.9,713.1 1173.6,709.1 1178.1,704.8 1182.4,700.2 1186.5,695.4 1190.5,690.3 1194.2,684.9 1197.7,679.3 1201.1,673.5 1204.2,667.5 1207.1,661.2 1209.7,654.8 1212.2,648.1 1214.4,641.3 1216.3,634.3 1218.1,627.2 1219.6,619.9 1220.8,612.4 1221.8,604.8 1222.6,597.2 1223.1,589.4 1223.4,581.5 1223.4,573.5 1223.1,565.5 1222.7,557.4 1221.9,549.3 1221.0,541.1 1219.7,533.0 1218.3,524.8 1216.6,516.6 1214.6,508.5 1212.4,500.4 1210.0,492.3 1207.4,484.3 1204.5,476.3 1201.4,468.5 1198.1,460.7 1194.6,453.1 1190.9,445.5 1187.0,438.1 1182.9,430.8 1178.6,423.7 1174.1,416.8 1169.5,410.0 1164.7,403.4 1159.7,397.0 1154.6,390.8 1149.3,384.9 1143.9,379.1 1138.4,373.6 1132.8,368.3 1127.0,363.3 1121.2,358.5 1115.2,354.0 1109.2,349.8 1103.1,345.8 1096.9,342.1 1090.7,338.8 1084.5,335.7 1078.2,332.9 1071.9,330.4 1065.5,328.2 1059.2,326.4 1052.9,324.8 1046.5,323.6 1040.2,322.7 1034.0,322.1 1027.8,321.8 1021.6,321.8 1015.5,322.2 1009.5,322.9 1003.5,323.9 997.6,325.2 991.9,326.8 986.2,328.8 980.7,331.1 975.3,333.6 970.0,336.5 964.9,339.7 959.9,343.1 955.1,346.9 950.4,350.9 945.9,355.2 941.6,359.8 937.5,364.6 933.5,369.7 929.8,375.1 926.3,380.7 922.9,386.5 919.8,392.5 916.9,398.8 914.3,405.2 911.8,411.9 909.6,418.7 907.7,425.7 905.9,432.8 904.4,440.1 903.2,447.6 902.2,455.2 901.4,462.8 900.9,470.6 900.6,478.5 900.6,486.5 900.9,494.5 901.3,502.6 902.1,510.7 903.0,518.9 904.3,527.0 905.7,535.2 907.4,543.4 909.4,551.5 911.6,559.6 914.0,567.7 916.6,575.7 919.5,583.7 922.6,591.5 925.9,599.3 929.4,606.9 933.1,614.5 937.0,621.9 941.1,629.2 945.4,636.3 949.9,643.2 954.5,650.0 959.3,656.6 964.3,663.0 969.4,669.2 974.7,675.1 980.1,680.9 985.6,686.4 991.2,691.7 997.0,696.7 1002.8,701.5 1008.8,706.0 1014.8,710.2 1020.9,714.2 1027.1,717.9 1033.3,721.2 1039.5,724.3 1045.8,727.1 1052.1,729.6 1058.5,731.8 1064.8,733.6 1071.1,735.2 1077.5,736.4 1083.8,737.3 1090.0,737.9 1096.2,738.2 1102.4,738.2 1108.5,737.8 1114.5,737.1 1120.5,736.1 1126.4,734.8 1132.1,733.2" fill="url(#gCap)" /><polygon points="1128.3,705.9 1133.1,704.0 1137.8,701.7 1142.4,699.2 1146.9,696.4 1151.3,693.4 1155.5,690.1 1159.6,686.6 1163.5,682.8 1167.3,678.8 1170.9,674.6 1174.3,670.1 1177.6,665.5 1180.7,660.6 1183.6,655.5 1186.3,650.2 1188.8,644.8 1191.2,639.1 1193.3,633.3 1195.2,627.3 1197.0,621.2 1198.5,615.0 1199.8,608.6 1200.9,602.1 1201.8,595.4 1202.4,588.7 1202.9,581.9 1203.1,575.0 1203.1,568.1 1202.9,561.0 1202.5,554.0 1201.8,546.9 1201.0,539.7 1199.9,532.6 1198.6,525.4 1197.1,518.3 1195.4,511.2 1193.5,504.1 1191.4,497.0 1189.1,490.0 1186.6,483.1 1183.9,476.2 1181.0,469.4 1178.0,462.7 1174.7,456.1 1171.3,449.7 1167.7,443.3 1164.0,437.1 1160.0,431.0 1156.0,425.1 1151.8,419.3 1147.4,413.7 1143.0,408.3 1138.4,403.1 1133.6,398.1 1128.8,393.2 1123.9,388.6 1118.8,384.2 1113.7,380.1 1108.5,376.1 1103.3,372.4 1097.9,368.9 1092.6,365.7 1087.1,362.8 1081.6,360.1 1076.1,357.6 1070.6,355.5 1065.1,353.6 1059.5,351.9 1054.0,350.6 1048.5,349.5 1043.0,348.7 1037.5,348.2 1032.1,347.9 1026.7,348.0 1021.3,348.3 1016.1,348.9 1010.9,349.8 1005.7,350.9 1000.7,352.4 995.7,354.1 990.9,356.0 986.2,358.3 981.6,360.8 977.1,363.6 972.7,366.6 968.5,369.9 964.4,373.4 960.5,377.2 956.7,381.2 953.1,385.4 949.7,389.9 946.4,394.5 943.3,399.4 940.4,404.5 937.7,409.8 935.2,415.2 932.8,420.9 930.7,426.7 928.8,432.7 927.0,438.8 925.5,445.0 924.2,451.4 923.1,457.9 922.2,464.6 921.6,471.3 921.1,478.1 920.9,485.0 920.9,491.9 921.1,499.0 921.5,506.0 922.2,513.1 923.0,520.3 924.1,527.4 925.4,534.6 926.9,541.7 928.6,548.8 930.5,555.9 932.6,563.0 934.9,570.0 937.4,576.9 940.1,583.8 943.0,590.6 946.0,597.3 949.3,603.9 952.7,610.3 956.3,616.7 960.0,622.9 964.0,629.0 968.0,634.9 972.2,640.7 976.6,646.3 981.0,651.7 985.6,656.9 990.4,661.9 995.2,666.8 1000.1,671.4 1005.2,675.8 1010.3,679.9 1015.5,683.9 1020.7,687.6 1026.1,691.1 1031.4,694.3 1036.9,697.2 1042.4,699.9 1047.9,702.4 1053.4,704.5 1058.9,706.4 1064.5,708.1 1070.0,709.4 1075.5,710.5 1081.0,711.3 1086.5,711.8 1091.9,712.1 1097.3,712.0 1102.7,711.7 1107.9,711.1 1113.1,710.2 1118.3,709.1 1123.3,707.6" fill="url(#gInI)" /></g></g><circle cx="1062.0" cy="530.0" r="37" fill="#6a6a6a"/><polygon points="870,205 1279,348 1256,855 848,713" fill="rgb(100,255,255)" fill-opacity="0.19" stroke="#000" stroke-width="1"/><g stroke="#1a2a9a" stroke-width="1" stroke-dasharray="12,3,2,3" fill="none"><path d="M1074,317L1051,783"/><path d="M870,463L1159,562"/><path d="M860,625L1153,499"/></g><g mask="url(#m8)"><polygon points="785.3,483.8 785.4,472.3 785.7,461.0 786.5,449.7 787.6,438.6 789.0,427.7 790.8,417.0 793.0,406.5 795.5,396.1 798.3,386.1 801.5,376.2 805.0,366.6 808.9,357.3 813.0,348.3 817.5,339.6 822.3,331.2 827.4,323.2 832.8,315.5 838.5,308.1 844.4,301.2 850.6,294.6 857.1,288.4 863.8,282.5 870.8,277.1 878.0,272.1 885.4,267.6 893.0,263.4 935.4,243.2 943.3,239.4 951.3,236.1 959.6,233.3 968.0,230.9 976.6,229.0 985.3,227.5 994.1,226.5 1003.0,226.0 1012.0,225.9 1021.1,226.3 1030.2,227.2 1039.4,228.5 1048.7,230.3 1057.9,232.6 1067.2,235.3 1076.4,238.5 1085.6,242.1 1094.8,246.2 1104.0,250.7 1113.0,255.7 1122.0,261.0 1130.9,266.8 1139.7,273.0 1148.4,279.6 1157.0,286.5 1165.3,293.9 1173.6,301.6 1181.7,309.6 1189.5,318.0 1197.2,326.8 1204.7,335.8 1212.0,345.1 1219.0,354.8 1225.8,364.6 1232.3,374.8 1238.5,385.2 1244.5,395.8 1250.3,406.6 1255.7,417.6 1260.8,428.8 1265.6,440.1 1270.1,451.6 1274.3,463.2 1278.2,474.9 1281.7,486.7 1284.9,498.6 1287.7,510.5 1290.2,522.4 1292.4,534.3 1294.2,546.3 1295.6,558.2 1296.6,570.0 1297.3,581.9 1297.7,593.6 1297.7,605.2 1297.3,616.7 1296.5,628.1 1295.4,639.3 1294.0,650.4 1292.1,661.2 1290.0,671.9 1287.4,682.4 1284.5,692.6 1281.3,702.5 1277.8,712.2 1273.9,721.7 1269.6,730.8 1265.1,739.6 1260.2,748.1 1255.1,756.2 1249.6,764.0 1243.9,771.5 1237.9,778.6 1231.6,785.2 1225.0,791.5 1218.2,797.4 1211.1,802.9 1203.9,808.0 1196.3,812.6 1188.7,816.8 1180.7,820.5 1172.7,823.9 1164.4,826.7 1156.0,829.1 1110.8,841.9 1102.3,843.8 1093.8,845.2 1085.1,846.2 1076.3,846.7 1067.4,846.8 1058.4,846.4 1049.4,845.5 1040.3,844.2 1031.2,842.4 1022.1,840.2 1012.9,837.5 1003.8,834.4 994.7,830.8 985.6,826.8 976.6,822.3 967.6,817.4 958.8,812.1 950.0,806.4 941.3,800.3 932.7,793.8 924.3,786.9 916.0,779.7 907.9,772.1 899.9,764.1 892.1,755.8 884.5,747.2 877.1,738.3 870.0,729.1 863.0,719.6 856.4,709.8 849.9,699.8 843.7,689.5 837.8,679.1 832.1,668.4 826.8,657.5 821.7,646.5 817.0,635.3 812.5,623.9 808.4,612.5 804.6,600.9 801.1,589.3 798.0,577.6 795.2,565.9 792.7,554.1 790.6,542.3 788.8,530.5 787.4,518.8 786.4,507.0 785.7,495.4" fill="url(#gOut)" stroke="url(#gOut)" stroke-width="1.2"/><polygon points="1127.3,836.7 1135.2,833.4 1143.0,829.7 1150.7,825.6 1158.1,821.0 1165.3,816.0 1172.2,810.6 1178.9,804.8 1185.4,798.6 1191.6,792.0 1197.6,785.0 1203.3,777.6 1208.6,769.9 1213.7,761.9 1218.5,753.5 1223.0,744.8 1227.2,735.8 1231.0,726.5 1234.5,716.9 1237.7,707.1 1240.6,697.0 1243.1,686.7 1245.2,676.1 1247.0,665.4 1248.5,654.5 1249.6,643.4 1250.3,632.2 1250.7,620.8 1250.7,609.3 1250.4,597.7 1249.7,586.1 1248.6,574.4 1247.2,562.6 1245.4,550.8 1243.3,539.0 1240.9,527.3 1238.1,515.5 1234.9,503.8 1231.4,492.2 1227.6,480.6 1223.5,469.2 1219.1,457.9 1214.3,446.7 1209.2,435.6 1203.9,424.8 1198.2,414.1 1192.3,403.6 1186.1,393.3 1179.7,383.3 1173.0,373.6 1166.1,364.1 1158.9,354.8 1151.5,345.9 1143.9,337.3 1136.1,329.0 1128.2,321.0 1120.0,313.4 1111.8,306.2 1103.3,299.3 1094.8,292.8 1086.1,286.7 1077.3,281.0 1068.4,275.7 1059.4,270.8 1050.4,266.4 1041.3,262.4 1032.2,258.8 1023.1,255.6 1014.0,252.9 1004.8,250.7 995.7,248.9 986.6,247.6 977.6,246.7 968.6,246.3 959.8,246.4 951.0,246.9 942.3,247.9 933.7,249.4 925.2,251.3 916.9,253.6 908.8,256.5 900.8,259.7 893.0,263.4 885.4,267.6 878.0,272.1 870.8,277.1 863.8,282.5 857.1,288.3 850.6,294.6 844.4,301.2 838.4,308.1 832.8,315.5 827.4,323.2 822.3,331.3 817.5,339.6 813.0,348.3 808.8,357.3 805.0,366.6 801.5,376.2 798.3,386.1 795.5,396.1 793.0,406.5 790.8,417.0 789.0,427.7 787.6,438.6 786.5,449.7 785.7,461.0 785.3,472.3 785.3,483.8 785.7,495.4 786.4,507.0 787.4,518.7 788.8,530.5 790.6,542.3 792.7,554.1 795.2,565.9 798.0,577.6 801.1,589.3 804.6,600.9 808.4,612.5 812.5,623.9 817.0,635.3 821.7,646.5 826.8,657.5 832.1,668.4 837.8,679.1 843.7,689.5 849.9,699.8 856.3,709.8 863.0,719.6 870.0,729.1 877.1,738.3 884.5,747.2 892.1,755.8 899.9,764.1 907.9,772.1 916.0,779.7 924.3,786.9 932.7,793.8 941.3,800.3 950.0,806.4 958.8,812.1 967.6,817.4 976.6,822.3 985.6,826.8 994.7,830.8 1003.8,834.4 1012.9,837.5 1022.1,840.2 1031.2,842.4 1040.3,844.2 1049.4,845.5 1058.4,846.4 1067.4,846.8 1076.3,846.7 1085.1,846.2 1093.8,845.2 1102.4,843.8 1110.8,841.9 1119.1,839.5" fill="url(#gCap)" /><polygon points="1112.5,797.4 1119.4,794.6 1126.1,791.3 1132.7,787.8 1139.1,783.8 1145.3,779.5 1151.3,774.8 1157.1,769.8 1162.7,764.4 1168.1,758.7 1173.3,752.7 1178.2,746.3 1182.8,739.7 1187.2,732.7 1191.4,725.5 1195.2,717.9 1198.8,710.1 1202.2,702.1 1205.2,693.8 1208.0,685.3 1210.4,676.6 1212.6,667.7 1214.4,658.6 1216.0,649.3 1217.2,639.9 1218.2,630.3 1218.8,620.6 1219.2,610.7 1219.2,600.8 1218.9,590.8 1218.3,580.7 1217.4,570.6 1216.2,560.4 1214.6,550.3 1212.8,540.1 1210.7,529.9 1208.2,519.7 1205.5,509.6 1202.5,499.6 1199.2,489.6 1195.7,479.7 1191.8,469.9 1187.7,460.2 1183.3,450.7 1178.7,441.3 1173.8,432.0 1168.7,423.0 1163.4,414.1 1157.8,405.4 1152.0,397.0 1146.0,388.8 1139.8,380.8 1133.4,373.1 1126.9,365.6 1120.1,358.5 1113.3,351.6 1106.2,345.0 1099.1,338.8 1091.8,332.8 1084.4,327.2 1076.8,321.9 1069.2,317.0 1061.6,312.4 1053.8,308.2 1046.0,304.3 1038.2,300.9 1030.3,297.8 1022.4,295.0 1014.5,292.7 1006.6,290.8 998.7,289.2 990.9,288.1 983.1,287.4 975.3,287.0 967.6,287.1 960.0,287.5 952.5,288.4 945.1,289.6 937.8,291.3 930.6,293.3 923.6,295.8 916.7,298.6 909.9,301.8 903.3,305.4 896.9,309.3 890.7,313.6 884.7,318.3 878.9,323.3 873.3,328.7 867.9,334.4 862.8,340.4 857.9,346.8 853.2,353.5 848.8,360.4 844.7,367.7 840.8,375.2 837.2,383.0 833.9,391.0 830.8,399.3 828.1,407.8 825.6,416.5 823.5,425.4 821.6,434.5 820.0,443.8 818.8,453.3 817.8,462.8 817.2,472.6 816.9,482.4 816.9,492.3 817.1,502.3 817.7,512.4 818.7,522.5 819.9,532.7 821.4,542.9 823.2,553.1 825.4,563.2 827.8,573.4 830.5,583.5 833.5,593.6 836.8,603.6 840.4,613.5 844.2,623.3 848.3,632.9 852.7,642.5 857.3,651.9 862.2,661.1 867.3,670.2 872.7,679.0 878.2,687.7 884.0,696.1 890.0,704.3 896.2,712.3 902.6,720.0 909.2,727.5 915.9,734.6 922.8,741.5 929.8,748.1 937.0,754.4 944.3,760.3 951.7,765.9 959.2,771.2 966.8,776.1 974.5,780.7 982.2,784.9 990.0,788.8 997.9,792.3 1005.7,795.4 1013.6,798.1 1021.5,800.4 1029.4,802.3 1037.3,803.9 1045.1,805.0 1052.9,805.8 1060.7,806.1 1068.4,806.1 1076.0,805.6 1083.5,804.7 1090.9,803.5 1098.2,801.8 1105.4,799.8" fill="url(#gDark)" /></g><g clip-path="url(#c9)"><g mask="url(#m11)"><polygon points="846.9,500.4 846.9,492.0 847.2,483.6 847.7,475.3 848.5,467.2 849.6,459.2 850.9,451.3 852.5,443.5 854.3,435.9 856.4,428.5 858.8,421.3 861.4,414.2 864.2,407.4 867.2,400.8 870.5,394.4 874.1,388.2 877.8,382.3 881.8,376.6 886.0,371.2 890.3,366.1 894.9,361.2 899.7,356.6 904.6,352.4 909.7,348.4 915.0,344.7 920.5,341.4 926.1,338.3 931.8,335.6 937.7,333.2 943.7,331.1 949.8,329.4 956.0,328.0 962.3,326.9 968.7,326.2 1015.5,322.2 1021.6,321.8 1027.8,321.8 1034.0,322.1 1040.2,322.6 1046.5,323.6 1052.9,324.8 1059.2,326.4 1065.5,328.2 1071.9,330.4 1078.2,332.9 1084.5,335.7 1090.7,338.8 1096.9,342.1 1103.1,345.8 1109.2,349.8 1115.2,354.0 1121.2,358.5 1127.0,363.3 1132.8,368.3 1138.4,373.6 1143.9,379.1 1149.3,384.9 1154.6,390.8 1159.7,397.0 1164.7,403.4 1169.5,410.0 1174.1,416.8 1178.6,423.7 1182.9,430.8 1187.0,438.1 1190.9,445.5 1194.6,453.1 1198.1,460.7 1201.4,468.5 1204.5,476.3 1207.4,484.3 1210.0,492.3 1212.4,500.4 1214.6,508.5 1216.6,516.6 1218.3,524.8 1219.7,533.0 1221.0,541.1 1221.9,549.3 1222.7,557.4 1223.2,565.5 1223.4,573.5 1223.4,581.5 1223.1,589.4 1222.6,597.2 1221.8,604.9 1220.8,612.4 1219.6,619.9 1218.1,627.2 1216.3,634.3 1214.4,641.3 1212.2,648.1 1209.7,654.8 1207.1,661.2 1204.2,667.5 1201.1,673.5 1197.7,679.3 1194.2,684.9 1190.5,690.3 1186.5,695.4 1182.4,700.2 1178.1,704.8 1173.6,709.1 1168.9,713.1 1164.1,716.9 1126.3,744.7 1121.0,748.4 1115.6,751.8 1110.0,754.8 1104.2,757.5 1098.4,759.9 1092.4,762.0 1086.3,763.7 1080.0,765.1 1073.7,766.2 1067.3,766.9 1060.9,767.3 1054.3,767.4 1047.7,767.1 1041.1,766.5 1034.4,765.5 1027.7,764.2 1021.0,762.5 1014.3,760.5 1007.6,758.2 1000.9,755.6 994.2,752.6 987.5,749.4 981.0,745.8 974.4,741.9 968.0,737.7 961.6,733.2 955.3,728.4 949.1,723.4 943.0,718.0 937.0,712.4 931.1,706.6 925.4,700.5 919.8,694.1 914.4,687.6 909.1,680.8 904.0,673.8 899.1,666.6 894.4,659.3 889.8,651.7 885.5,644.0 881.3,636.1 877.4,628.2 873.6,620.0 870.1,611.8 866.9,603.5 863.9,595.0 861.0,586.6 858.5,578.0 856.2,569.4 854.1,560.8 852.3,552.1 850.8,543.4 849.5,534.8 848.4,526.1 847.6,517.5 847.1,508.9" fill="url(#gOutI)" /><polygon points="1098.4,759.9 1104.2,757.5 1110.0,754.8 1115.6,751.8 1121.0,748.4 1126.3,744.7 1131.4,740.8 1136.4,736.5 1141.1,731.9 1145.7,727.0 1150.1,721.9 1154.3,716.5 1158.2,710.8 1162.0,704.9 1165.5,698.8 1168.8,692.4 1171.9,685.7 1174.7,678.9 1177.3,671.9 1179.6,664.6 1181.7,657.2 1183.5,649.6 1185.1,641.9 1186.4,634.0 1187.5,625.9 1188.3,617.8 1188.9,609.5 1189.1,601.2 1189.2,592.7 1188.9,584.2 1188.4,575.6 1187.6,567.0 1186.6,558.4 1185.3,549.7 1183.7,541.0 1181.9,532.4 1179.9,523.7 1177.5,515.1 1175.0,506.6 1172.2,498.1 1169.1,489.7 1165.9,481.3 1162.4,473.1 1158.7,465.0 1154.7,457.0 1150.6,449.1 1146.2,441.4 1141.7,433.9 1136.9,426.5 1132.0,419.3 1126.9,412.3 1121.6,405.5 1116.2,399.0 1110.6,392.6 1104.9,386.6 1099.0,380.7 1093.1,375.1 1087.0,369.8 1080.8,364.7 1074.5,359.9 1068.1,355.4 1061.6,351.2 1055.1,347.4 1048.5,343.8 1041.8,340.5 1035.2,337.5 1028.5,334.9 1021.8,332.6 1015.0,330.6 1008.3,329.0 1001.6,327.7 994.9,326.7 988.3,326.0 981.7,325.8 975.2,325.8 968.7,326.2 962.3,326.9 956.0,328.0 949.8,329.4 943.7,331.1 937.7,333.2 931.8,335.6 926.1,338.3 920.5,341.4 915.0,344.7 909.7,348.4 904.6,352.4 899.7,356.7 894.9,361.2 890.3,366.1 885.9,371.2 881.8,376.6 877.8,382.3 874.1,388.2 870.5,394.4 867.2,400.8 864.2,407.4 861.4,414.2 858.8,421.3 856.4,428.5 854.3,435.9 852.5,443.5 850.9,451.3 849.6,459.2 848.5,467.2 847.7,475.3 847.2,483.6 846.9,492.0 846.9,500.4 847.1,508.9 847.6,517.5 848.4,526.1 849.5,534.8 850.7,543.4 852.3,552.1 854.1,560.8 856.2,569.4 858.5,578.0 861.0,586.6 863.8,595.1 866.9,603.5 870.2,611.8 873.7,620.0 877.4,628.2 881.3,636.2 885.5,644.0 889.8,651.7 894.4,659.3 899.1,666.6 904.0,673.8 909.1,680.8 914.4,687.6 919.8,694.1 925.4,700.5 931.1,706.6 937.0,712.4 943.0,718.0 949.1,723.4 955.3,728.4 961.6,733.2 968.0,737.7 974.4,741.9 981.0,745.8 987.6,749.4 994.2,752.6 1000.9,755.6 1007.6,758.2 1014.3,760.5 1021.0,762.5 1027.7,764.2 1034.4,765.5 1041.1,766.4 1047.7,767.1 1054.3,767.4 1060.9,767.3 1067.3,766.9 1073.7,766.2 1080.0,765.1 1086.3,763.7 1092.4,762.0" fill="url(#gCap)" /><polygon points="1084.3,722.5 1089.1,720.5 1093.8,718.3 1098.5,715.8 1102.9,713.0 1107.3,710.0 1111.5,706.7 1115.6,703.2 1119.5,699.4 1123.3,695.4 1126.9,691.2 1130.4,686.7 1133.6,682.0 1136.7,677.1 1139.6,672.1 1142.3,666.8 1144.9,661.3 1147.2,655.7 1149.3,649.9 1151.3,643.9 1153.0,637.8 1154.5,631.5 1155.8,625.1 1156.9,618.6 1157.8,612.0 1158.4,605.3 1158.9,598.5 1159.1,591.6 1159.1,584.6 1158.9,577.6 1158.5,570.5 1157.9,563.4 1157.0,556.3 1155.9,549.2 1154.7,542.0 1153.2,534.9 1151.5,527.7 1149.6,520.6 1147.4,513.6 1145.1,506.6 1142.6,499.6 1139.9,492.8 1137.1,486.0 1134.0,479.3 1130.7,472.7 1127.3,466.2 1123.7,459.9 1120.0,453.6 1116.1,447.6 1112.0,441.6 1107.8,435.9 1103.4,430.3 1099.0,424.9 1094.4,419.7 1089.7,414.6 1084.8,409.8 1079.9,405.2 1074.9,400.8 1069.7,396.6 1064.6,392.7 1059.3,389.0 1054.0,385.5 1048.6,382.3 1043.1,379.3 1037.7,376.6 1032.2,374.2 1026.6,372.0 1021.1,370.1 1015.6,368.5 1010.0,367.1 1004.5,366.1 999.0,365.3 993.5,364.7 988.1,364.5 982.7,364.5 977.3,364.9 972.1,365.4 966.9,366.3 961.7,367.5 956.7,368.9 951.8,370.6 946.9,372.6 942.2,374.8 937.6,377.4 933.1,380.1 928.7,383.2 924.5,386.4 920.4,390.0 916.5,393.7 912.7,397.7 909.1,402.0 905.7,406.4 902.4,411.1 899.3,416.0 896.4,421.1 893.7,426.3 891.2,431.8 888.8,437.4 886.7,443.3 884.8,449.2 883.0,455.3 881.5,461.6 880.2,468.0 879.1,474.5 878.3,481.1 877.6,487.8 877.1,494.6 876.9,501.5 876.9,508.5 877.1,515.5 877.5,522.6 878.2,529.7 879.0,536.8 880.1,544.0 881.4,551.1 882.9,558.3 884.6,565.4 886.5,572.5 888.6,579.5 890.9,586.5 893.4,593.5 896.1,600.4 899.0,607.2 902.0,613.8 905.3,620.4 908.7,626.9 912.3,633.3 916.1,639.5 920.0,645.6 924.0,651.5 928.2,657.2 932.6,662.8 937.1,668.3 941.7,673.5 946.4,678.5 951.2,683.3 956.1,687.9 961.2,692.3 966.3,696.5 971.5,700.5 976.7,704.2 982.1,707.6 987.5,710.8 992.9,713.8 998.4,716.5 1003.9,718.9 1009.4,721.1 1014.9,723.0 1020.5,724.6 1026.0,726.0 1031.5,727.1 1037.0,727.9 1042.5,728.4 1048.0,728.6 1053.3,728.6 1058.7,728.3 1064.0,727.7 1069.2,726.8 1074.3,725.6 1079.3,724.2" fill="url(#gInI)" /></g></g><polyline points="1131.9,832.7 1137.1,830.4 1142.2,827.9 1147.3,825.2 1152.3,822.3 1157.2,819.2 1161.9,816.0 1166.6,812.5 1171.2,808.9 1175.7,805.1 1180.1,801.1 1184.3,796.9 1188.5,792.6 1192.5,788.1 1196.4,783.4 1200.2,778.6 1203.9,773.6 1207.4,768.5 1210.8,763.2 1214.1,757.7 1217.2,752.2 1220.2,746.4 1223.1,740.6 1225.8,734.6 1228.4,728.4 1230.9,722.2 1233.1,715.8 1235.3,709.3 1237.3,702.7 1239.1,696.0 1240.8,689.2 1242.4,682.3 1243.8,675.3 1245.0,668.2 1246.1,661.0 1247.0,653.8 1247.7,646.5 1248.4,639.1 1248.8,631.6 1249.1,624.1 1249.2,616.5 1249.2,608.9 1249.0,601.3 1248.7,593.6 1248.2,585.8 1247.5,578.1 1246.7,570.3 1245.7,562.5 1244.6,554.7 1243.3,546.9 1241.9,539.1 1240.3,531.3 1238.5,523.5 1236.6,515.7 1234.6,508.0 1232.4,500.2 1230.1,492.5 1227.6,484.9 1224.9,477.3 1222.2,469.7 1219.3,462.2 1216.2,454.7 1213.0,447.3 1209.7,440.0 1206.3,432.7 1202.7,425.5 1199.0,418.4 1195.1,411.4 1191.2,404.5 1187.1,397.7 1182.9,391.0 1178.6,384.4 1174.2,377.9 1169.7,371.5 1165.1,365.2 1160.4,359.1 1155.6,353.1 1150.6,347.2 1145.6,341.5 1140.6,335.9 1135.4,330.4 1130.1,325.1 1124.8,319.9 1119.4,314.9 1113.9,310.1 1108.4,305.4 1102.8,300.9 1097.1,296.6 1091.4,292.4 1085.6,288.4 1079.8,284.6 1074.0,280.9 1068.1,277.5 1062.1,274.2 1056.2,271.1 1050.2,268.2 1044.2,265.5 1038.2,263.0 1032.1,260.6 1026.1,258.5 1020.0,256.6 1014.0,254.8 1007.9,253.3 1001.9,252.0 995.9,250.8 989.8,249.9 983.8,249.2 977.9,248.7 971.9,248.4 966.0,248.2 960.1,248.3 954.3,248.6 948.5,249.1 942.7,249.8 937.0,250.8 931.4,251.9 925.8,253.2 920.3,254.7 914.9,256.4 909.5,258.3" fill="none" stroke="#8c8c8c" stroke-width="3" stroke-opacity="0.4"/><g clip-path="url(#c12)"><polyline points="1185.3,624.9 1185.8,619.5 1186.3,614.1 1186.6,608.6 1186.8,603.0 1186.9,597.4 1186.9,591.8 1186.8,586.2 1186.5,580.5 1186.1,574.8 1185.6,569.1 1185.0,563.4 1184.3,557.6 1183.4,551.9 1182.5,546.1 1181.4,540.4 1180.2,534.6 1178.9,528.9 1177.5,523.2 1176.0,517.5 1174.3,511.8 1172.6,506.1 1170.8,500.5 1168.8,494.9 1166.7,489.3 1164.6,483.8 1162.3,478.3 1159.9,472.8 1157.5,467.4 1154.9,462.1 1152.2,456.8 1149.5,451.6 1146.6,446.5 1143.7,441.4 1140.7,436.4 1137.6,431.5 1134.4,426.6 1131.1,421.9 1127.8,417.2 1124.3,412.6 1120.8,408.1 1117.3,403.7 1113.6,399.4 1109.9,395.2 1106.1,391.2 1102.3,387.2 1098.4,383.3 1094.5,379.6 1090.5,375.9 1086.4,372.4 1082.3,369.0 1078.2,365.7 1074.0,362.6 1069.7,359.6 1065.5,356.7 1061.2,353.9 1056.9,351.3 1052.5,348.8 1048.1,346.5 1043.7,344.3 1039.3,342.2 1034.9,340.3 1030.4,338.5 1026.0,336.8 1021.5,335.4 1017.1,334.0 1012.6,332.8 1008.2,331.8 1003.7,330.9 999.3,330.1 994.9,329.5 990.4,329.1 986.1,328.8 981.7,328.7 977.4,328.7 973.0,328.8 968.8,329.1 964.5,329.6 960.3,330.2 956.1,331.0 952.0,331.9 947.9,333.0 943.9,334.2 939.9,335.6 936.0,337.1 932.1,338.7 928.3,340.5 924.6,342.5 920.9,344.6 917.3,346.8 913.7,349.2 910.2,351.7 906.8,354.3 903.5,357.1 900.3,360.0 897.1,363.0 894.1,366.2 891.1,369.5 888.2,372.9 885.4,376.4 882.7,380.1 880.0,383.9 877.5,387.8 875.1,391.7 872.8,395.9 870.5,400.1 868.4,404.4 866.4,408.8 864.5,413.3 862.7,417.9 861.0,422.6 859.4,427.3 857.9,432.2 856.6,437.1 855.3,442.1 854.2,447.2 853.1,452.4 852.2,457.6 851.4,462.9 850.7,468.2" fill="none" stroke="#7a7a7a" stroke-width="4" stroke-opacity="0.45"/></g><polygon points="1075.0,564.6 1073.8,565.1 1072.6,565.5 1071.3,565.8 1070.0,566.1 1068.8,566.4 1067.5,566.6 1066.2,566.8 1064.9,566.9 1063.6,567.0 1062.3,567.0 1061.0,567.0 1059.7,566.9 1058.4,566.8 1057.1,566.7 1055.8,566.5 1054.5,566.2 1053.2,565.9 1051.9,565.6 1050.7,565.2 1049.5,564.8 1048.2,564.3 1047.0,563.8 1045.8,563.3 1044.7,562.7 1043.5,562.1 1042.4,561.4 1041.3,560.7 1040.3,559.9 1039.2,559.1 1038.2,558.3 1037.2,557.5 1036.3,556.6 1035.3,555.7 1034.4,554.7 1033.6,553.7 1032.8,552.7 1032.0,551.6 1031.2,550.6 1030.5,549.5 1029.9,548.4 1029.2,547.2 1028.7,546.0 1028.1,544.9 1027.6,543.6 1027.1,542.4 1026.7,541.2 1026.4,539.9 1026.0,538.7 1025.7,537.4 1025.5,536.1 1025.3,534.8 1025.2,533.5 1025.1,532.2 1025.0,530.9 1025.0,529.6 1025.0,528.3 1025.1,527.0 1025.3,525.7 1025.4,524.4 1025.6,523.1 1025.9,521.8 1026.2,520.6 1026.6,519.3 1027.0,518.1 1027.4,516.8 1027.9,515.6 1028.4,514.4 1029.0,513.3 1029.6,512.1 1030.3,511.0 1031.0,509.9 1031.7,508.8 1032.5,507.7 1033.3,506.7 1034.1,505.7 1035.0,504.7 1035.9,503.8 1036.8,502.9 1037.8,502.0 1038.8,501.2 1039.8,500.4 1040.9,499.6 1042.0,498.9 1043.1,498.2 1044.2,497.6 1045.4,496.9 1046.6,496.4 1047.7,495.9 1049.0,495.4 1049.0,495.4 1049.8,495.1 1050.7,494.8 1051.6,494.6 1052.5,494.4 1053.5,494.3 1054.4,494.2 1055.4,494.2 1056.3,494.2 1057.3,494.2 1058.2,494.3 1059.2,494.5 1060.2,494.6 1061.2,494.9 1062.2,495.1 1063.1,495.5 1064.1,495.8 1065.1,496.2 1066.1,496.6 1067.0,497.1 1068.0,497.7 1068.9,498.2 1069.9,498.8 1070.8,499.5 1071.7,500.2 1072.7,500.9 1073.6,501.6 1074.4,502.4 1075.3,503.2 1076.2,504.1 1077.0,505.0 1077.8,505.9 1078.6,506.9 1079.4,507.8 1080.1,508.8 1080.9,509.9 1081.6,510.9 1082.3,512.0 1082.9,513.1 1083.5,514.3 1084.2,515.4 1084.7,516.6 1085.3,517.7 1085.8,518.9 1086.3,520.2 1086.8,521.4 1087.2,522.6 1087.6,523.9 1087.9,525.1 1088.3,526.4 1088.6,527.6 1088.8,528.9 1089.1,530.1 1089.3,531.4 1089.5,532.7 1089.6,533.9 1089.7,535.2 1089.7,536.4 1089.8,537.7 1089.8,538.9 1089.7,540.1 1089.7,541.3 1089.5,542.5 1089.4,543.7 1089.2,544.9 1089.0,546.0 1088.8,547.1 1088.5,548.2 1088.2,549.3 1087.8,550.4 1087.5,551.4 1087.1,552.4 1086.6,553.4 1086.1,554.3 1085.6,555.2 1085.1,556.1 1084.6,557.0 1084.0,557.8 1083.4,558.6 1082.7,559.3 1082.0,560.0 1081.4,560.7 1080.6,561.3 1079.9,561.9 1079.1,562.5 1078.4,563.0 1077.6,563.5 1076.7,563.9 1075.9,564.3 1075.0,564.6" fill="url(#gSph)" /><circle cx="1063" cy="531" r="2" fill="#2c2"/></g></svg><div style="position:absolute;left:719px;top:158px;width:112px;height:61px;background:#fff;border:1px solid #a0a0a0;box-sizing:border-box;box-shadow:2px 3px 8px rgba(0,0,0,0.25)"></div><div style="position:absolute;left:720px;top:189px;width:110px;height:29px;background:#f0f0f0"></div><div class="t" style="left:728px;top:168px;font-size:12px;line-height:12px;color:#a0a0a0;letter-spacing:-0.2px">Kreisdefinition</div><div style="position:absolute;left:721px;top:189px;width:22px;height:22px;background:#f0f0f0;border-left:1px solid #a0a0a0;border-top:1px solid #dcdcdc"></div><div style="position:absolute;left:768px;top:189px;width:22px;height:22px;background:#f0f0f0;border-left:1px solid #a0a0a0;border-top:1px solid #dcdcdc"></div><svg style="position:absolute;left:723px;top:192px;" width="18" height="18" viewBox="0 0 18 18"><circle cx="9" cy="9" r="7.5" fill="none" stroke="#000" stroke-width="1.2"/></svg><svg style="position:absolute;left:746px;top:192px;" width="18" height="18" viewBox="0 0 18 18"><path d="M3,13A7.5,7.5 0 1 1 16,5" fill="none" stroke="#000" stroke-width="1.2"/></svg><svg style="position:absolute;left:771px;top:192px;" width="18" height="18" viewBox="0 0 18 18"><circle cx="9" cy="9" r="7.5" fill="none" stroke="#c00010" stroke-width="1.3"/><circle cx="9" cy="9" r="1.1" fill="#c00010"/></svg><svg style="position:absolute;left:795px;top:191px;" width="18" height="18" viewBox="0 0 18 18"><circle cx="9" cy="9" r="7.5" fill="none" stroke="#c00010" stroke-width="1.3"/></svg><div style="position:absolute;left:1610px;top:148px;width:190px;height:258px;background:#f0f0f0;border:1px solid #e0e0e0;box-sizing:border-box;box-shadow:2px 3px 8px rgba(0,0,0,0.22)"></div><div style="position:absolute;left:1611px;top:149px;width:188px;height:30px;background:#fff"></div><div class="t" style="left:1618px;top:158px;font-size:12px;line-height:12px;color:#a0a0a0;">Status</div><div style="position:absolute;left:1779px;top:156px;width:19px;height:19px;background:#e6e6e6"></div><div style="position:absolute;left:1705px;top:179px;width:2px;height:226px;background:#646464"></div><div style="position:absolute;left:1716px;top:179px;width:83px;height:20px;background:#fff;border:1px solid #7a7a7a;box-sizing:border-box"></div><div class="t" style="left:1622px;top:184px;font-size:12px;line-height:12px;color:#000;">X</div><div class="t" style="left:1722px;top:184px;font-size:12px;line-height:12px;color:#000;letter-spacing:-0.3px">-46.53mm</div><div style="position:absolute;left:1716px;top:199px;width:83px;height:20px;background:#fff;border:1px solid #7a7a7a;box-sizing:border-box"></div><div class="t" style="left:1622px;top:204px;font-size:12px;line-height:12px;color:#000;">Y</div><div class="t" style="left:1722px;top:204px;font-size:12px;line-height:12px;color:#000;letter-spacing:-0.3px">-2.83mm</div><div style="position:absolute;left:1716px;top:219px;width:83px;height:20px;background:#fff;border:1px solid #7a7a7a;box-sizing:border-box"></div><div style="position:absolute;left:1716px;top:240px;width:83px;height:20px;background:#fff;border:1px solid #7a7a7a;box-sizing:border-box"></div><div class="t" style="left:1622px;top:245px;font-size:12px;line-height:12px;color:#000;">Durchm. 1</div><div class="t" style="left:1722px;top:245px;font-size:12px;line-height:12px;color:#000;letter-spacing:-0.3px">0.00mm</div><div style="position:absolute;left:1716px;top:260px;width:83px;height:20px;background:#fff;border:1px solid #7a7a7a;box-sizing:border-box"></div><div style="position:absolute;left:1716px;top:280px;width:83px;height:20px;background:#fff;border:1px solid #7a7a7a;box-sizing:border-box"></div><div class="t" style="left:1622px;top:285px;font-size:12px;line-height:12px;color:#000;">Winkel</div><div class="t" style="left:1722px;top:285px;font-size:12px;line-height:12px;color:#000;letter-spacing:-0.3px">0.00°</div><div style="position:absolute;left:1716px;top:300px;width:83px;height:20px;background:#fff;border:1px solid #7a7a7a;box-sizing:border-box"></div><div class="t" style="left:1622px;top:305px;font-size:12px;line-height:12px;color:#000;">Öff.Winkel</div><div class="t" style="left:1722px;top:305px;font-size:12px;line-height:12px;color:#000;letter-spacing:-0.3px">360.00°</div><div style="position:absolute;left:1716px;top:320px;width:83px;height:20px;background:#fff;border:1px solid #7a7a7a;box-sizing:border-box"></div><div style="position:absolute;left:1716px;top:341px;width:83px;height:20px;background:#fff;border:1px solid #7a7a7a;box-sizing:border-box"></div><div style="position:absolute;left:1716px;top:361px;width:83px;height:20px;background:#fff;border:1px solid #7a7a7a;box-sizing:border-box"></div><div style="position:absolute;left:740px;top:442px;width:249px;height:496px;background:#fff;border:1px solid #ccc;box-sizing:border-box;box-shadow:2px 2px 4px rgba(0,0,0,0.35)"></div><div style="position:absolute;left:765px;top:443px;width:223px;height:494px;background:#fff"></div><div style="position:absolute;left:741px;top:443px;width:24px;height:494px;background:#f5f5f5"></div><div class="t" style="left:768px;top:449px;font-size:12px;line-height:12px;color:#a8a8a8;">2D Punkt-Definition</div><div style="position:absolute;left:768px;top:470px;width:217px;height:1px;background:#a0a0a0"></div><div class="t" style="left:768px;top:478px;font-size:12px;line-height:12px;color:#000;">Abbrechen</div><div class="t" style="right:950px;top:478px;font-size:12px;line-height:12px;color:#000;">Escape</div><div style="position:absolute;left:768px;top:500px;width:217px;height:1px;background:#a0a0a0"></div><div style="position:absolute;left:743px;top:805px;width:243px;height:20px;background:#cce8ff;border:1px solid #99d1ff;box-sizing:border-box"></div><div class="t" style="left:768px;top:508px;font-size:12px;line-height:12px;color:#000;letter-spacing:-0.1px">Autofang</div><div class="t" style="right:950px;top:508px;font-size:12px;line-height:12px;color:#000;letter-spacing:-0.2px">Ctrl-A</div><div class="t" style="left:768px;top:528px;font-size:12px;line-height:12px;color:#000;letter-spacing:-0.1px">Endpunkt</div><div class="t" style="right:950px;top:528px;font-size:12px;line-height:12px;color:#000;letter-spacing:-0.2px">E</div><div class="t" style="left:768px;top:548px;font-size:12px;line-height:12px;color:#000;letter-spacing:-0.1px">Mitte</div><div class="t" style="right:950px;top:548px;font-size:12px;line-height:12px;color:#000;letter-spacing:-0.2px">M</div><div class="t" style="left:768px;top:568px;font-size:12px;line-height:12px;color:#000;letter-spacing:-0.1px">Mittelpunkt</div><div class="t" style="right:950px;top:568px;font-size:12px;line-height:12px;color:#000;letter-spacing:-0.2px">Z</div><div class="t" style="left:768px;top:588px;font-size:12px;line-height:12px;color:#000;letter-spacing:-0.1px">Quadrantpunkt</div><div class="t" style="right:950px;top:588px;font-size:12px;line-height:12px;color:#000;letter-spacing:-0.2px">Q</div><div class="t" style="left:768px;top:608px;font-size:12px;line-height:12px;color:#000;letter-spacing:-0.1px">Schnittpunkt</div><div class="t" style="right:950px;top:608px;font-size:12px;line-height:12px;color:#000;letter-spacing:-0.2px">S</div><div class="t" style="left:768px;top:628px;font-size:12px;line-height:12px;color:#000;letter-spacing:-0.1px">Schnitt 2 Linien</div><div class="t" style="right:950px;top:628px;font-size:12px;line-height:12px;color:#000;letter-spacing:-0.2px">Ctrl-Shift-S</div><div class="t" style="left:768px;top:648px;font-size:12px;line-height:12px;color:#000;letter-spacing:-0.1px">Mitte 2 Punkte</div><div class="t" style="right:950px;top:648px;font-size:12px;line-height:12px;color:#000;letter-spacing:-0.2px">Ctrl-Shift-M</div><div class="t" style="left:768px;top:668px;font-size:12px;line-height:12px;color:#000;letter-spacing:-0.1px">Relativ zu Punkt</div><div class="t" style="right:950px;top:668px;font-size:12px;line-height:12px;color:#000;letter-spacing:-0.2px">Ctrl-Shift-P</div><div class="t" style="left:768px;top:688px;font-size:12px;line-height:12px;color:#000;letter-spacing:-0.1px">Relativ letzter Punkt</div><div class="t" style="right:950px;top:688px;font-size:12px;line-height:12px;color:#000;letter-spacing:-0.2px">Ctrl-Shift-R</div><div class="t" style="left:768px;top:708px;font-size:12px;line-height:12px;color:#000;letter-spacing:-0.1px">Relativ zu Fußpunkt</div><div class="t" style="right:950px;top:708px;font-size:12px;line-height:12px;color:#000;letter-spacing:-0.2px">Ctrl-Shift-F</div><div class="t" style="left:768px;top:728px;font-size:12px;line-height:12px;color:#000;letter-spacing:-0.1px">Punkt</div><div class="t" style="right:950px;top:728px;font-size:12px;line-height:12px;color:#000;letter-spacing:-0.2px">P</div><div class="t" style="left:768px;top:748px;font-size:12px;line-height:12px;color:#000;letter-spacing:-0.1px">Textreferenz</div><div class="t" style="right:950px;top:748px;font-size:12px;line-height:12px;color:#000;letter-spacing:-0.2px">R</div><div class="t" style="left:768px;top:768px;font-size:12px;line-height:12px;color:#000;letter-spacing:-0.1px">Symbol-/Bauteilreferenz</div><div class="t" style="right:950px;top:768px;font-size:12px;line-height:12px;color:#000;letter-spacing:-0.2px">Ctrl-Shift-B</div><div class="t" style="left:768px;top:788px;font-size:12px;line-height:12px;color:#000;letter-spacing:-0.1px">Fangpunkt</div><div class="t" style="right:950px;top:788px;font-size:12px;line-height:12px;color:#000;letter-spacing:-0.2px">N</div><div class="t" style="left:768px;top:808px;font-size:12px;line-height:12px;color:#000;letter-spacing:-0.1px">Fläche/Schwerpunkt</div><div class="t" style="right:950px;top:808px;font-size:12px;line-height:12px;color:#000;letter-spacing:-0.2px">G</div><div class="t" style="left:768px;top:828px;font-size:12px;line-height:12px;color:#000;letter-spacing:-0.1px">Tangential an</div><div class="t" style="right:950px;top:828px;font-size:12px;line-height:12px;color:#000;letter-spacing:-0.2px">T</div><div class="t" style="left:768px;top:848px;font-size:12px;line-height:12px;color:#000;letter-spacing:-0.1px">Lotrecht zu</div><div class="t" style="right:950px;top:848px;font-size:12px;line-height:12px;color:#000;letter-spacing:-0.2px">L</div><div class="t" style="left:768px;top:868px;font-size:12px;line-height:12px;color:#000;letter-spacing:-0.1px">Cursor</div><div class="t" style="right:950px;top:868px;font-size:12px;line-height:12px;color:#000;letter-spacing:-0.2px">C</div><div style="position:absolute;left:768px;top:890px;width:217px;height:1px;background:#a0a0a0"></div><div class="t" style="left:768px;top:898px;font-size:12px;line-height:12px;color:#000;">Nullpunkt 2D</div><div class="t" style="right:950px;top:898px;font-size:12px;line-height:12px;color:#000;">Ctrl-2</div><div class="t" style="left:768px;top:918px;font-size:12px;line-height:12px;color:#000;">Punkt-Filter</div><svg style="position:absolute;left:746px;top:505px;" width="16" height="16" viewBox="0 0 16 16"><path d="M2,14L13,2" stroke="#000" stroke-width="1.1"/><circle cx="11" cy="8.5" r="2.3" fill="none" stroke="#000" stroke-width="1.1"/><path d="M4,15L6,10L8,15M5,13H7" fill="none" stroke="#000" stroke-width="1"/><circle cx="13" cy="2" r="1" fill="#c00"/></svg><svg style="position:absolute;left:746px;top:525px;" width="16" height="16" viewBox="0 0 16 16"><path d="M2,14L13,3" stroke="#000" stroke-width="1"/><circle cx="13" cy="3" r="1.1" fill="#c00"/></svg><svg style="position:absolute;left:746px;top:545px;" width="16" height="16" viewBox="0 0 16 16"><path d="M2,14L13,3" stroke="#000" stroke-width="1.7"/></svg><svg style="position:absolute;left:746px;top:565px;" width="16" height="16" viewBox="0 0 16 16"><path d="M4,9L6,6H11L13,9L11,12H6Z" fill="none" stroke="#000" stroke-width="1.4"/><circle cx="8.5" cy="9" r="0.9" fill="#c00"/></svg><svg style="position:absolute;left:746px;top:585px;" width="16" height="16" viewBox="0 0 16 16"><circle cx="8.5" cy="9.5" r="2.8" fill="none" stroke="#600" stroke-width="1.7"/></svg><svg style="position:absolute;left:746px;top:605px;" width="16" height="16" viewBox="0 0 16 16"><path d="M4,5L13,14M13,5L4,14" stroke="#000" stroke-width="1.1"/></svg><svg style="position:absolute;left:746px;top:625px;" width="16" height="16" viewBox="0 0 16 16"><path d="M2,14L9,7M12,9V15" stroke="#000" stroke-width="1.1"/><circle cx="12" cy="5" r="0.9" fill="#c00"/></svg><svg style="position:absolute;left:746px;top:645px;" width="16" height="16" viewBox="0 0 16 16"><path d="M3,7L5,6V13M12,6V13L14,13" stroke="#000" stroke-width="1.3" fill="none"/><circle cx="8.5" cy="9.5" r="0.9" fill="#c00"/></svg><svg style="position:absolute;left:746px;top:665px;" width="16" height="16" viewBox="0 0 16 16"><path d="M2,12C2,10 4,9 5,11M6,9L8.5,12M8.5,9L6,12M10,12L11.5,9L12.5,12L14,9" fill="none" stroke="#000" stroke-width="1.3"/><circle cx="8" cy="6" r="0.9" fill="#c00"/></svg><svg style="position:absolute;left:746px;top:685px;" width="16" height="16" viewBox="0 0 16 16"><path d="M2,12C2,10 4,9 5,11M6,9L8.5,12M8.5,9L6,12M10,12L11.5,9L12.5,12L14,9" fill="none" stroke="#000" stroke-width="1.3"/></svg><svg style="position:absolute;left:746px;top:705px;" width="16" height="16" viewBox="0 0 16 16"><path d="M2,15L14,3" stroke="#000" stroke-width="1.1"/><path d="M2,15L7,10" stroke="#c00" stroke-width="1.4"/><path d="M8,8L10,10" stroke="#000"/></svg><svg style="position:absolute;left:746px;top:725px;" width="16" height="16" viewBox="0 0 16 16"><circle cx="8.5" cy="10" r="1" fill="#c00"/></svg><svg style="position:absolute;left:746px;top:745px;" width="16" height="16" viewBox="0 0 16 16"><path d="M3,7V12H5M2,8H4.5M11,7V12H13M10,8H12.5M6,8L9,12M9,8L6,12" fill="none" stroke="#000" stroke-width="1.2"/></svg><svg style="position:absolute;left:746px;top:765px;" width="16" height="16" viewBox="0 0 16 16"><path d="M1,3H4M3,1V13H13" fill="none" stroke="#000" stroke-width="1.2"/><circle cx="13" cy="13" r="1.5" fill="#000"/></svg><svg style="position:absolute;left:746px;top:785px;" width="16" height="16" viewBox="0 0 16 16"><path d="M1,15L14,2" stroke="#000" stroke-width="1"/><path d="M11,10V16M8,13H14" stroke="#000" stroke-width="1.3"/></svg><svg style="position:absolute;left:746px;top:805px;" width="16" height="16" viewBox="0 0 16 16"><path d="M4.5,5.5H12V8H7V9.5H11V11.5H7V13H4.5Z" fill="none" stroke="#000" stroke-width="1.3"/></svg><svg style="position:absolute;left:746px;top:825px;" width="16" height="16" viewBox="0 0 16 16"><circle cx="10.5" cy="7.5" r="3" fill="none" stroke="#000" stroke-width="1.5"/><path d="M2,14L8,9.5" stroke="#000" stroke-width="1.6"/></svg><svg style="position:absolute;left:746px;top:845px;" width="16" height="16" viewBox="0 0 16 16"><path d="M1,13H15M8,6V13M8,10H11V13" fill="none" stroke="#000" stroke-width="1.1"/></svg><svg style="position:absolute;left:746px;top:865px;" width="16" height="16" viewBox="0 0 16 16"><path d="M1,10H15M8,2V18" stroke="#000" stroke-width="1.1"/><path d="M13,11H9V14H13" fill="none" stroke="#000" stroke-width="1.1"/></svg><svg style="position:absolute;left:746px;top:477px;" width="16" height="16" viewBox="0 0 16 16"><rect x="1" y="2" width="14" height="12" rx="1.5" fill="#fff" stroke="#555"/><text x="2.3" y="11" font-size="6.5" font-family="Liberation Sans" fill="#333">esc</text></svg><svg style="position:absolute;left:715px;top:785px;filter:drop-shadow(1px 2px 1.5px rgba(0,0,0,0.3))" width="220" height="56" viewBox="0 0 220 56"><ellipse cx="110" cy="28" rx="103" ry="22.5" fill="none" stroke="#dc4a4a" stroke-width="3.2" transform="rotate(-1.5 110 28)"/></svg><svg style="position:absolute;left:1856px;top:1011px;" width="62" height="28" viewBox="0 0 62 28"><rect x="0" y="0" width="62" height="28" fill="#e2e2e2"/><path d="M4,20C2,12 12,4 28,3C42,2 56,4 57,8C50,6 40,9 34,12C26,16 16,26 8,26C5,26 4,23 4,20Z" fill="#d60a2a"/><path d="M20,24C30,22 48,20 57,14L58,17C50,23 34,26 22,26Z" fill="#d60a2a"/><text x="16" y="13" font-family="Liberation Sans" font-weight="bold" font-size="9.5" fill="#fff" letter-spacing="0.5">Data</text><text x="22" y="24" font-family="Liberation Sans" font-weight="bold" font-style="italic" font-size="10" fill="#000" letter-spacing="0.3">Solid</text></svg></body></html>
